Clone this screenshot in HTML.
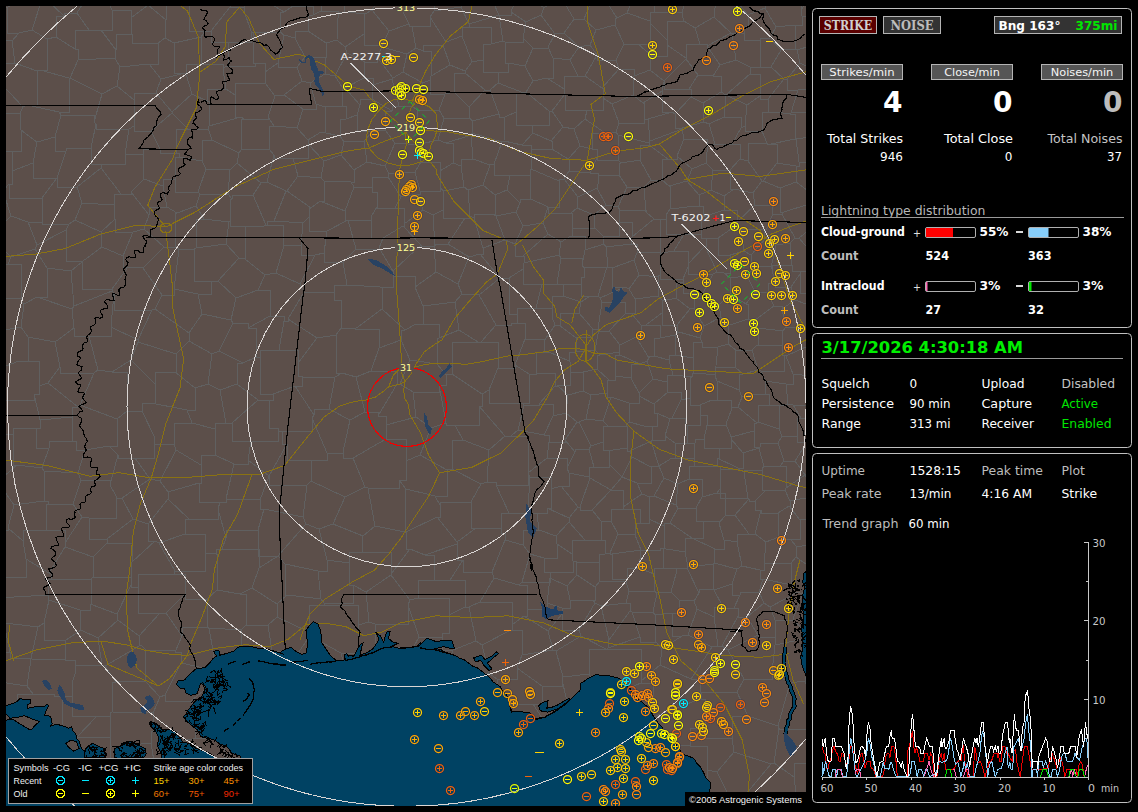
<!DOCTYPE html>
<html lang="en"><head><meta charset="utf-8"><title>Lightning Detector</title>
<style>html,body{margin:0;padding:0;background:#000;overflow:hidden}svg{display:block}text{white-space:pre}.sh{stroke:#2a2344;stroke-width:2.8;stroke-opacity:.32}</style></head><body>
<svg width="1138" height="812" viewBox="0 0 1138 812">
<rect width="1138" height="812" fill="#000"/>
<defs><clipPath id="mc"><rect x="6" y="6" width="800" height="800"/></clipPath></defs>
<g clip-path="url(#mc)" shape-rendering="crispEdges">
<rect x="6" y="6" width="800" height="800" fill="#5c4f4a"/>
<path d="M808 811L797 811L797 802M797 802L765 819M765 819L765 819M797 802L794 777M819 763L794 763L794 777M0 530L-13 554M0 530L8 530L8 528M8 528L14 505M14 505L0 485M-23 452L2 452L2 478M0 485L2 485L2 478M123 808L141 808L141 805M141 805L159 805L159 821M-13 818L9 818L9 813M48 812L15 806M9 813L15 806M123 808L116 803M116 803L93 803L93 810M84 834L93 810M48 812L48 812L48 811M84 834L48 834L48 811M829 597L832 611M832 611L824 618M830 643L824 643L824 618M802 594L829 597M802 594L802 595M802 595L816 617M824 618L816 618L816 617M793 619L803 630M793 619L802 595M816 617L803 630M765 819L732 819L732 834M318 460L327 460L327 453M318 460L287 460L287 444M327 453L312 418M287 444L282 444L282 431M282 431L312 431L312 418M327 453L343 453L343 452M343 452L350 420M329 409L350 420M329 409L314 409L314 415M312 418L314 415M220 502L199 502L199 483M220 502L226 502L226 499M199 483L201 483L201 465M226 499L234 464M234 464L215 455M215 455L201 455L201 465M220 502L218 509M199 483L168 492M189 519L218 519L218 509M189 519L168 499M168 499L168 492M93 810L69 810L69 786M48 811L62 787M62 787L66 786M66 786L69 786M116 803L110 771M69 786L110 771M832 -2L810 -4M807 -16L810 -16L810 -4M318 460L311 460L311 481M365 487L345 497M365 487L353 458M353 458L343 458L343 452M345 497L311 481M511 630L482 645M511 630L522 630L522 655M497 679L489 673M497 679L517 679L517 668M517 668L522 655M482 645L489 673M414 -15L425 -11M414 -15L413 -15M412 26L409 26L409 24M412 26L430 26L430 17M413 -15L400 -15L400 6M430 17L434 11M425 -11L434 -11L434 11M400 6L409 24M434 11L461 7M463 2L461 7M-23 218L-7 218L-7 234M-6 240L-7 240L-7 234M-6 192L3 191M-6 192L-23 192L-23 218M3 191L11 216M11 216L-7 234M-21 124L-7 149M159 821L179 810M179 810L198 810L198 829M198 829L223 829L223 809M223 809L232 809L232 809M232 809L233 809L233 809M-20 609L-7 623M-20 609L-12 582M-13 554L-3 577M-12 582L-3 577M14 597L-1 597L-1 577M14 597L5 597L5 623M-7 623L4 624M-1 577L-3 577L-3 577M5 623L4 624M827 558L818 571M830 643L814 643L814 649M803 630L803 630L803 639M803 639L814 639L814 649M770 637L775 637L775 620M770 637L775 637L775 645M775 620L793 620L793 619M803 639L775 645M765 819L746 794M794 777L774 763M746 794L771 764M774 763L771 763L771 764M636 811L610 811L610 800M610 800L592 800L592 818M659 818L640 818L640 810M640 810L636 810L636 811M592 763L580 763L580 765M592 763L607 775M607 775L610 800M580 765L563 801M563 801L592 818M546 807L546 807L546 807M546 807L563 807L563 801M732 834L716 834L716 813M746 794L727 794L727 792M727 792L716 813M716 813L697 813L697 817M659 818L681 805M697 817L681 817L681 805M676 745L661 774M676 745L652 745L652 720M637 731L652 720M637 731L638 769M661 774L648 775M638 769L648 769L648 775M592 763L607 731M607 775L638 769M607 731L637 731L637 731M640 810L648 775M681 805L681 805L681 790M681 790L661 774M732 738L734 752M732 738L705 738L705 728M734 752L717 772M705 728L690 728L690 746M690 746L707 746L707 770M717 772L707 770M737 692L748 716M737 692L701 692L701 699M701 699L705 699L705 728M748 716L732 716L732 738M771 764L734 752M727 792L717 772M681 790L707 790L707 770M676 745L690 746M251 441L278 441L278 428M251 441L232 441L232 423M232 423L258 400M278 428L269 428L269 400M269 400L258 400M287 444L269 476M269 476L248 460M248 460L251 441M282 431L278 431L278 428M234 464L248 464L248 460M226 423L232 423L232 423M226 423L215 423L215 429M215 455L215 429M189 519L185 519L185 534M168 499L148 524M155 541L148 541L148 524M155 541L159 543M159 543L185 534M324 605L358 605L358 625M324 605L309 605L309 632M341 653L310 636M341 653L358 653L358 625M309 632L310 636M8 528L23 541M44 501L14 505M44 501L48 501L48 504M48 504L46 504L46 530M46 530L23 530L23 541M-1 577L26 577L26 559M23 541L26 559M46 530L65 530L65 543M49 573L26 559M49 573L65 547M65 547L65 543M48 504L73 504M65 543L82 517M73 504L82 517M201 465L176 450M168 492L160 481M160 481L176 450M215 429L192 423M192 423L174 423L174 444M174 444L176 450M525 817L497 808M497 808L491 812M525 817L546 807M302 814L329 817M416 804L439 804L439 803M439 803L455 818M491 812L475 808M475 808L455 818M372 812L410 812L410 799M372 812L359 812L359 799M359 799L387 769M410 799L405 799L405 771M405 771L387 769M416 804L410 804L410 799M349 797L329 817M349 797L351 796M351 796L359 799M351 753L368 746M351 753L351 796M368 746L387 746L387 769M381 691L390 721M381 691L358 692M358 692L348 710M348 710L373 710L373 732M373 732L390 732L390 721M344 664L343 666M344 664L379 661M343 666L358 692M387 683L379 661M387 683L381 683L381 691M368 746L373 732M404 723L390 723L390 721M404 723L418 723L418 759M418 759L405 759L405 771M404 723L426 723L426 707M387 683L412 680M426 707L412 707L412 680M413 648L386 647M413 648L420 664M379 661L386 661L386 647M420 664L412 664L412 680M75 738L77 738L77 737M75 738L62 738L62 733M77 737L97 716M54 696L62 696L62 733M54 696L72 696L72 683M97 716L72 716L72 683M463 2L482 -11M807 -16L787 -21M810 -4L801 10M787 -21L775 -2M775 -2L801 -2L801 10M425 555L434 555L434 580M425 555L457 544M463 560L457 560L457 544M463 560L450 580M450 580L434 580M344 664L341 653M358 625L369 622M386 647L375 647L375 624M369 622L375 624M277 604L252 588M277 604L287 595M287 595L285 595L285 564M252 588L259 568M259 568L278 556M278 556L285 564M324 603L321 599M324 603L324 605M321 599L287 595M309 632L277 617M277 617L277 617L277 604M318 571L321 599M318 571L285 564M278 556L258 556L258 530M278 556L278 556L278 556M258 530L226 530L226 538M222 549L226 538M222 549L259 549L259 568M365 487L368 488M345 497L333 524M375 526L368 488M375 526L363 536M363 536L333 524M278 556L306 524M318 571L327 571L327 560M306 524L319 529M327 560L319 529M307 485L303 517M307 485L269 485L269 476M303 517L264 509M269 476L260 500M264 509L260 509L260 500M306 524L303 517M311 481L307 485M319 529L333 524M269 476L269 476L269 476M258 530L264 509M226 499L260 499L260 500M226 538L218 509M476 528L457 542M476 528L471 528L471 502M457 542L437 517M471 502L440 502L440 505M437 517L440 517L440 505M410 549L425 555M410 549L406 549L406 532M457 542L457 544M437 517L406 532M413 648L419 637M375 624L408 624L408 605M419 637L408 605M453 650L476 641M453 650L442 650L442 633M476 641L469 607M442 633L449 633L449 615M449 615L465 607M469 607L465 607M482 645L476 641M489 673L454 676M448 666L454 676M448 666L453 650M448 666L420 664M419 637L442 637L442 633M480 602L512 602L512 625M480 602L469 607M511 630L512 630L512 625M418 598L449 598L449 615M418 598L410 600M408 605L410 600M450 580L465 580L465 607M434 580L418 580L418 598M480 602L494 578M494 578L492 572M492 572L463 572L463 560M187 410L195 410L195 388M187 410L151 403M175 372L195 388M175 372L155 372L155 384M151 403L155 403L155 384M175 372L176 372L176 354M138 342L176 354M138 342L131 360M155 384L131 360M44 501L44 471M73 504L81 480M81 480L78 473M78 473L44 471M85 450L78 473M85 450L76 450L76 441M76 441L49 441L49 448M44 471L42 468M49 448L42 468M2 478L17 465M17 465L42 468M49 448L36 448L36 428M17 465L13 465L13 434M36 428L13 428L13 434M-23 452L1 427M13 434L1 434L1 427M1 427L-5 412M400 6L377 3M389 31L409 24M389 31L372 10M372 10L377 3M382 45L364 45L364 34M382 45L389 31M372 10L365 14M364 34L365 14M343 262L324 262L324 253M343 262L356 249M356 249L348 220M348 220L327 231M324 253L327 231M298 176L321 178M298 176L293 158M293 158L308 158L308 144M308 144L324 161M324 161L321 178M128 267L112 289M128 267L123 267L123 256M83 261L102 247M83 261L82 262M112 289L82 289L82 262M123 256L102 247M487 482L481 484M487 482L489 450M489 450L463 440M481 484L452 469M463 440L452 440L452 469M489 450L505 436M505 436L479 406M463 440L455 425M455 425L479 425L479 406M-21 124L-14 124L-14 116M-7 149L-1 151M-1 151L21 151L21 130M21 130L20 113M20 113L-14 113L-14 116M-14 116L-16 87M-6 240L11 257M11 257L8 264M-23 281L8 264M37 297L47 297L47 268M37 297L72 309M72 309L74 306M74 306L71 271M47 268L71 271M112 289L112 289L112 291M82 262L71 271M112 291L74 306M94 373L98 370M94 373L60 373L60 367M98 370L89 336M89 336L74 336L74 328M74 328L55 342M60 367L55 342M-17 353L6 366M-4 395L6 366M-5 412L-2 400M-2 400L-4 395M489 390L498 368M489 390L482 394M481 342L498 342L498 368M481 342L478 342L478 342M482 394L452 374M478 342L452 342L452 374M455 302L423 306M455 302L459 330M416 324L423 324L423 306M416 324L439 324L439 338M459 330L439 338M365 412L356 377M365 412L378 412L378 416M356 377L371 371M371 371L397 371L397 384M397 384L378 416M353 458L386 439M350 420L365 412M386 439L386 439L386 425M378 416L386 416L386 425M355 329L382 309M355 329L379 329L379 348M382 309L405 330M379 348L401 340M405 330L401 330L401 340M198 294L202 314M198 294L174 289M155 309L189 333M155 309L162 295M162 295L174 295L174 289M202 314L189 333M198 294L211 294L211 281M218 281L211 281M218 281L236 298M202 314L231 320M236 298L231 320M179 810L185 785M223 809L195 785M195 785L185 785M141 805L156 775M185 785L179 779M179 779L156 774M156 775L156 775L156 774M110 771L110 771L110 770M156 775L110 775L110 770M66 786L75 738M77 737L110 737L110 766M110 770L110 770L110 766M351 753L329 746M348 710L330 710L330 714M329 746L330 746L330 714M343 666L320 682M320 682L323 682L323 709M330 714L323 709M200 728L223 719M200 728L195 728L195 738M223 719L244 719L244 733M195 738L224 738L224 761M244 733L224 761M232 809L233 771M195 785L225 785L225 763M233 771L225 763M195 738L193 739M193 739L179 779M225 763L224 763L224 761M233 809L257 804M274 818L257 818L257 804M302 814L298 810M274 818L298 810M233 771L268 773M257 804L268 773M14 597L48 595M49 573L51 573L51 579M51 579L48 579L48 595M66 640L81 630M66 640L44 640L44 623M81 630L80 610M80 610L49 600M44 623L49 600M65 660L66 640M65 660L75 660L75 674M98 638L81 630M98 638L102 665M102 665L75 665L75 674M38 627L5 623M38 627L44 623M48 595L49 600M51 579L91 579M80 610L90 610L90 604M90 604L91 604L91 579M31 659L31 658M31 659L27 686M31 658L10 658L10 652M27 686L-7 681M10 652L-7 652L-7 665M-7 681L-7 665M65 660L31 659M38 627L31 658M33 694L54 694L54 696M33 694L27 686M75 674L72 683M4 624L10 652M-12 686L-7 681M-12 686L-6 713M-6 713L17 723M33 694L17 694L17 723M62 733L41 740M17 723L17 723L17 724M41 740L17 740L17 724M62 787L36 766M41 740L36 766M15 806L13 806L13 798M13 798L25 770M36 766L25 770M-16 777L-2 777L-2 755M-3 754L-2 754L-2 755M13 798L-16 777M25 770L-2 755M17 724L-3 754M827 558L812 558L812 544M818 571L817 571L817 572M812 544L797 547M797 547L796 557M796 557L817 572M802 594L802 594M817 572L802 594M775 620L770 607M770 607L798 592M802 594L798 592M824 400L824 400L824 403M832 448L824 432M824 403L817 419M817 419L824 419L824 432M824 432L824 432M812 340L810 340L810 345M825 368L820 368L820 368M810 345L820 368M757 345L782 345L782 351M757 345L758 345L758 328M758 328L783 331M782 351L783 331M761 371L784 371L784 355M761 371L758 370M784 355L782 355L782 351M752 350L758 370M752 350L757 345M730 294L719 305M730 294L746 304M733 324L721 324L721 317M733 324L748 319M719 305L721 317M746 304L748 304L748 319M819 520L823 525M823 525L823 525L823 525M790 539L797 547M790 539L800 539L800 520M800 520L819 519M819 519L819 520M812 544L823 525M828 489L832 471M828 489L815 491M815 491L805 475M832 471L825 463M805 475L805 475L805 475M805 475L824 463M825 463L824 463M819 519L811 497M811 497L815 491M832 448L825 448L825 463M780 466L786 466L786 488M780 466L784 461M786 488L805 475M784 461L795 461L795 461M795 461L805 475M795 461L804 447M804 447L824 463M824 432L804 432L804 442M804 447L804 442M790 683L805 681M790 683L778 726M809 683L805 683L805 681M809 683L825 719M825 719L815 719L815 729M815 729L779 729L779 728M779 728L778 726M814 649L805 681M775 645L772 672M772 672L790 683M744 679L737 692M744 679L772 679L772 672M748 716L778 726M819 763L815 763L815 729M774 763L779 728M728 650L722 646M728 650L758 635M722 646L738 616M758 635L747 617M747 617L738 617L738 616M770 637L758 637L758 635M744 679L728 650M770 607L764 603M764 603L747 617M759 592L764 603M759 592L740 592L740 595M740 595L734 608M734 608L738 608L738 616M712 647L718 646M712 647L688 635M718 646L714 617M688 635L697 609M697 609L714 617M734 608L723 608L723 607M723 607L714 607L714 617M722 646L718 646L718 646M640 364L631 364L631 378M640 364L620 355M620 355L615 355L615 376M631 378L615 376M759 394L765 394L765 381M759 394L742 397M765 381L761 371M743 374L758 370M743 374L739 374L739 390M742 397L739 390M487 482L496 482L496 485M481 484L471 502M476 528L501 528L501 533M496 485L509 513M509 513L501 513L501 533M492 572L505 540M501 533L505 533L505 540M496 485L528 485L528 473M528 473L530 477M509 513L528 513L528 509M530 477L528 509M530 477L551 477L551 489M537 513L528 513L528 509M537 513L547 513L547 508M547 508L551 508L551 489M512 625L524 616M522 655L553 650M553 650L548 631M524 616L548 631M505 540L523 545M537 513L539 530M539 530L523 530L523 545M494 578L519 585M524 616L527 616L527 609M519 585L527 585L527 609M497 697L497 679M497 697L467 697L467 711M454 676L448 703M467 711L448 711L448 703M426 707L439 707L439 708M439 708L448 703M641 681L660 665M641 681L641 681L641 683M641 683L653 683L653 717M660 665L691 679M653 717L700 699M691 679L700 679L700 699M662 649L682 636M662 649L660 665M682 636L688 635M712 647L691 679M701 699L700 699M652 720L653 717M310 636L293 660M277 617L268 625M268 625L272 651M272 651L293 651L293 660M320 682L296 671M296 671L293 660M81 480L110 480L110 485M89 518L82 517M89 518L116 518L116 496M110 485L116 496M148 524L133 519M133 519L122 498M160 481L150 479M150 479L122 498M133 519L107 539M107 539L89 539L89 518M122 498L116 498L116 496M446 779L465 779L465 773M446 779L422 759M465 773L463 748M463 748L444 743M422 759L444 743M439 803L446 779M470 776L465 776L465 773M470 776L475 808M418 759L422 759M475 738L463 738L463 748M475 738L467 738L467 711M439 708L444 743M268 625L246 625M252 588L240 594M240 594L246 594L246 625M243 660L241 660L241 630M243 660L249 662M272 651L249 662M246 625L241 630M243 660L216 660L216 668M216 668L209 628M241 630L209 628M159 543L175 571M185 534L205 534L205 553M175 571L205 571L205 553M222 549L216 549L216 554M216 554L205 553M240 594L217 590M216 554L217 554L217 590M209 628L208 628L208 627M208 627L207 599M217 590L207 599M820 43L817 25M820 43L828 48M831 19L817 25M797 49L797 50M797 49L795 49L795 25M797 50L820 43M795 25L802 25L802 16M802 16L817 16L817 25M828 59L828 59L828 48M832 -2L831 19M801 10L802 16M619 -24L636 -24L636 -9M636 -9L647 -9M519 -9L511 12M519 -9L492 -15M492 -15L487 -11M487 -11L499 15M499 15L511 15L511 12M523 -16L521 -11M521 -11L519 -11L519 -9M523 403L529 403L529 374M523 403L489 403L489 390M498 368L515 368L515 365M529 374L515 365M455 302L462 294M462 294L479 295M481 342L496 325M478 342L459 330M496 325L479 295M816 89L798 90M816 89L817 88M817 88L812 69M798 90L787 90L787 79M787 79L800 63M800 63L812 69M818 112L791 112L791 113M818 112L816 89M791 113L798 90M818 112L824 112L824 118M828 59L812 59L812 69M776 112L790 114M776 112L768 112L768 99M768 99L784 79M784 79L787 79M791 113L790 113L790 114M781 50L771 67M781 50L797 49M797 50L800 63M784 79L771 67M353 585L349 585L349 563M353 585L366 592M366 592L391 575M362 552L349 552L349 563M362 552L391 552L391 574M391 574L391 574L391 575M324 603L353 603L353 585M327 560L349 563M369 622L366 592M410 600L391 575M363 536L362 552M410 549L391 574M375 526L405 532M406 532L405 532M556 651L563 677M556 651L581 636M581 636L606 649M606 649L589 649L589 674M563 677L589 674M607 649L641 649L641 681M607 649L606 649M641 683L603 699M589 674L603 699M607 731L597 716M603 699L597 716M553 650L556 650L556 651M581 636L579 630M548 631L562 614M579 630L562 630L562 614M527 609L547 609L547 603M547 603L562 608M562 614L562 608M243 363L219 351M243 363L237 363L237 384M237 384L220 390M219 351L212 354M212 354L208 384M220 390L208 384M226 423L220 390M258 400L237 384M189 333L189 333L189 341M189 341L212 354M233 323L231 320M233 323L219 351M195 388L208 384M176 354L189 341M187 410L192 423M138 340L152 310M138 340L111 327M152 310L114 310L114 293M111 327L114 293M138 342L138 342L138 340M155 309L152 310M98 370L112 372M131 360L112 372M89 336L111 336L111 327M128 267L143 267L143 268M112 291L114 293M162 295L143 268M74 328L72 309M40 420L34 394M40 420L72 417M78 407L72 407L72 417M78 407L48 383M34 394L39 394L39 386M48 383L39 386M36 428L40 428L40 420M-2 400L34 400L34 394M76 441L72 441L72 417M80 405L94 373M80 405L78 405L78 407M60 367L48 383M19 361L39 361L39 386M19 361L6 366M55 342L28 337M19 361L28 361L28 337M413 -15L387 -18M377 3L376 3L376 1M387 -18L376 -18L376 1M461 7L469 24M482 -11L487 -11M499 15L499 15M469 24L499 15M430 17L446 42M469 24L469 24L469 27M469 27L462 27L462 36M446 42L462 36M412 26L416 48M382 45L382 45L382 47M382 47L407 54M416 48L407 54M382 47L377 57M403 72L407 54M403 72L393 78M377 57L393 78M66 230L69 224M66 230L37 245M69 224L42 224L42 201M37 245L28 222M28 222L42 222L42 201M83 261L66 261L66 230M102 247L101 232M101 232L75 220M75 220L69 224M35 249L47 268M35 249L37 245M11 216L28 222M35 249L11 257M241 117L209 126M241 117L235 117L235 95M235 95L226 89M226 89L207 89L207 101M207 101L209 101L209 126M206 64L223 64L223 69M206 64L186 64L186 74M223 69L226 89M186 74L192 94M192 94L207 101M172 113L188 129M172 113L172 113L172 112M188 129L208 129L208 128M208 128L209 126M172 112L192 94M244 119L241 119L241 150M244 119L268 119L268 117M274 126L268 117M274 126L269 126L269 149M269 149L241 149L241 150M239 153L241 150M239 153L212 140M208 128L212 140M241 117L244 119M275 96L265 83M275 96L268 117M265 83L235 83L235 95M297 128L303 109M297 128L274 126M303 109L284 95M284 95L275 96M293 158L274 158L274 155M308 144L308 140M274 155L269 149M308 140L297 128M435 496L406 489M435 496L447 496L447 470M447 470L420 455M399 480L406 489M399 480L406 480L406 461M406 461L420 455M440 505L435 496M405 532L406 489M452 469L447 470M431 428L420 455M431 428L446 423M455 425L446 425L446 423M368 488L399 488L399 480M386 439L406 439L406 461M431 428L416 417M416 417L386 425M505 436L511 436M523 403L524 405M524 405L518 430M479 406L482 406L482 394M511 436L518 430M528 473L528 473L528 473M511 436L528 436L528 473M-16 87L-6 77M-19 58L-6 77M23 107L-5 77M23 107L27 105M27 105L37 105L37 71M37 71L15 63M15 63L-5 63L-5 77M20 113L23 107M-5 77L-6 77M-12 298L21 298L21 301M-12 298L-20 298L-20 318M-7 332L-20 318M-7 332L21 327M21 327L24 304M24 304L21 301M-23 281L-12 281L-12 298M8 264L21 264L21 301M-17 353L-7 353L-7 332M28 337L21 327M37 297L24 304M413 392L400 384M413 392L439 392L439 385M400 384L410 360M410 360L437 364M437 364L446 375M439 385L446 385L446 375M397 384L400 384M416 417L413 392M446 423L439 385M371 371L379 348M401 340L410 360M416 324L405 330M439 338L437 338L437 364M452 374L446 374L446 375M314 415L295 386M269 400L273 400L273 394M273 394L295 386M270 316L248 328M270 316L284 316L284 321M284 321L279 350M248 328L256 328L256 357M279 350L260 350L260 358M256 357L260 358M236 298L258 290M258 290L270 290L270 316M233 323L248 323L248 328M243 363L256 357M273 394L260 394L260 358M329 409L335 377M356 377L342 373M335 377L342 373M295 386L302 386L302 376M335 377L302 377L302 376M279 350L298 350L298 363M302 376L298 376L298 363M304 292L288 319M304 292L334 292L334 300M288 319L317 338M334 300L341 300L341 328M317 338L336 335M341 328L336 335M343 262L347 285M347 285L334 285L334 300M324 253L315 255M300 284L315 255M300 284L304 292M284 321L288 321L288 319M298 363L317 338M347 285L380 287M380 287L382 287L382 309M355 329L341 328M342 373L336 373L336 335M286 715L286 683M286 715L264 722M264 722L251 695M286 683L257 681M251 695L257 681M290 717L323 709M290 717L286 717L286 715M296 671L286 683M225 696L223 719M225 696L251 695M257 731L244 731L244 733M257 731L264 731L264 722M249 662L257 681M158 731L151 731L151 743M158 731L153 731L153 713M151 743L122 746M153 713L112 712M122 746L110 746L110 715M112 712L110 712L110 715M193 739L158 739L158 731M156 774L151 743M110 766L122 746M97 716L110 716L110 715M102 665L105 666M116 682L105 666M116 682L112 682L112 712M298 794L269 772M298 794L316 775M316 775L315 756M272 763L269 763L269 772M272 763L303 751M315 756L303 756L303 751M298 810L298 794M268 773L269 772M349 797L316 775M329 746L315 756M257 731L272 731L272 763M290 717L303 717L303 751M175 571L174 574M207 599L185 599L185 594M174 574L185 574L185 594M65 547L93 557M91 579L93 577M93 577L93 557M107 539L107 539L107 543M93 557L107 543M155 541L132 562M107 543L132 543L132 562M791 563L792 585M791 563L764 564M792 585L763 579M763 579L760 579L760 570M760 570L764 570L764 564M796 557L791 563M798 592L792 592L792 585M790 539L779 539L779 537M779 537L766 542M766 542L764 564M759 592L763 579M769 405L786 405M769 405L758 405L758 422M758 422L779 429M786 405L779 405L779 429M817 419L801 418M804 442L797 442L797 436M801 418L797 418L797 436M784 461L778 443M778 443L782 436M797 436L782 436M793 405L788 404M793 405L815 405L815 395M788 404L786 384M815 395L811 376M811 376L793 374M786 384L793 384L793 374M786 405L788 404M801 418L793 405M782 436L779 429M824 400L815 395M759 394L769 394L769 405M765 381L786 384M820 368L811 368L811 376M810 345L786 356M786 356L793 374M784 355L786 356M733 324L728 324L728 344M752 350L736 350M758 328L754 321M748 319L754 321M728 344L736 350M743 374L735 367M736 350L735 367M812 340L810 340L810 330M836 314L810 314L810 330M820 221L820 221M820 221L829 221L829 254M829 283L824 283L824 258M829 254L824 258M730 294L730 294L730 278M746 304L755 292M730 278L747 276M755 292L747 276M714 590L732 584M714 590L713 589M713 589L713 564M732 584L737 569M737 569L714 563M714 563L713 564M740 595L732 595L732 584M723 607L714 590M742 566L760 570M742 566L737 569M682 636L672 636L672 613M672 613L679 613L679 600M697 609L694 601M694 601L679 600M713 589L699 589L699 593M694 601L699 593M632 457L622 477M632 457L630 451M630 451L627 451L627 448M627 448L613 450M613 450L609 450L609 464M609 464L622 477M637 483L622 477M637 483L642 494M611 490L623 490L623 507M611 490L611 490L611 490M642 494L623 507M611 490L622 477M637 483L651 483L651 467M651 467L632 457M622 477L622 477M580 507L578 507L578 507M580 507L590 478M578 507L561 486M590 478L589 477M589 477L569 473M561 486L569 486L569 473M611 490L592 510M592 510L580 510L580 507M611 490L590 478M547 508L569 518M551 489L561 486M569 518L578 507M594 467L589 467L589 477M594 467L609 467L609 464M523 545L530 554M519 585L522 582M530 554L522 582M547 603L550 578M522 582L550 582L550 578M595 603L593 600M595 603L579 630M562 608L570 608L570 600M593 600L570 600M550 578L550 578M550 578L567 586M567 586L570 600M569 518L569 522M592 510L601 521M591 540L601 540L601 521M591 540L585 540M569 522L585 540M539 530L556 536M569 522L556 536M766 490L755 501M766 490L785 490L785 490M778 513L761 513L761 510M778 513L789 506M761 510L755 510L755 501M785 490L790 501M789 506L790 506L790 501M779 537L778 513M755 534L766 542M755 534L761 510M800 520L789 506M811 497L790 501M786 488L785 488L785 490M780 466L764 467M766 490L762 490L762 470M764 467L762 467L762 470M528 775L545 775L545 745M528 775L506 776M545 745L506 745L506 733M506 776L498 769M498 769L495 742M495 742L506 733M580 765L547 744M546 807L528 775M547 744L545 745M497 808L506 776M470 776L498 776L498 769M475 738L495 738L495 742M497 697L505 705M505 705L506 733M135 458L118 458L118 455M135 458L154 458L154 436M154 436L142 411M109 446L118 455M109 446L117 446L117 419M117 419L127 411M142 411L127 411M110 485L118 455M150 479L135 458M174 444L154 444L154 436M151 403L142 403L142 411M85 450L109 446M80 405L117 419M112 372L127 372L127 411M116 682L145 681M153 713L160 697M160 697L145 681M707 46L720 65M707 46L731 33M731 33L732 33M732 33L736 60M720 65L736 60M695 28L700 44M695 28L714 17M700 44L707 44L707 46M714 17L731 33M781 50L770 38M771 67L751 67M751 67L760 67L760 40M770 38L760 38L760 40M795 25L776 27M770 38L776 27M750 67L751 67L751 67M750 67L736 60M732 33L744 33L744 26M760 40L744 40L744 26M657 12L654 12L654 -4M657 12L682 12L682 14M654 -4L676 -4L676 -13M682 14L684 5M684 5L678 5L678 -12M678 -12L676 -13M647 -9L654 -4M533 133L532 133L532 125M533 133L522 145M505 117L516 112M505 117L504 141M532 125L516 125L516 112M504 141L522 145M703 103L704 122M703 103L691 97M682 128L704 122M682 128L675 128L675 114M675 114L691 97M713 76L698 75M713 76L721 76L721 92M698 75L689 89M703 103L721 92M689 89L691 89L691 97M684 21L695 28M684 21L667 21L667 40M700 44L686 44L686 58M667 40L667 40L667 45M667 45L686 58M713 76L720 65M698 75L686 59M686 59L686 58M652 56L667 56L667 45M652 56L650 56L650 70M686 59L664 81M650 70L664 81M675 114L672 112M672 112L662 112L662 91M689 89L664 89L664 82M662 91L664 82M664 82L664 82L664 81M619 123L616 132M619 123L644 123L644 115M618 135L649 143M618 135L616 132M648 119L644 119L644 115M648 119L650 141M650 141L649 143M672 112L648 119M643 103L662 91M643 103L644 103L644 115M682 129L682 128M682 129L650 141M585 119L605 133M585 119L574 129M605 133L592 133L592 149M574 129L580 146M580 146L592 149M605 133L616 132M618 160L597 160L597 158M618 160L618 135M592 149L597 149L597 158M524 405L539 405L539 404M529 374L536 374L536 373M539 404L555 386M536 373L555 373L555 386M515 365L525 339M496 325L511 325L511 323M511 323L525 323L525 339M549 352L536 352L536 373M549 352L544 352L544 341M525 339L544 339L544 341M548 234L543 223M548 234L561 242M561 242L571 236M571 213L548 213L548 207M571 213L572 213L572 235M571 236L572 236L572 235M543 223L548 207M523 256L548 234M523 256L524 256L524 263M524 263L559 255M559 255L561 242M595 228L572 228L572 235M595 228L594 215M594 215L577 208M577 208L571 213M618 160L621 163M649 145L640 145L640 160M649 145L649 143M621 163L640 160M816 136L796 139M816 136L828 152M828 152L819 163M819 163L799 162M799 162L796 139M824 118L816 118L816 136M790 114L795 114L795 139M795 139L796 139L796 139M819 217L806 205M819 217L835 200M806 205L807 190M807 190L823 190L823 181M835 200L828 183M828 183L823 181M820 221L819 217M784 212L806 205M784 212L780 212L780 188M780 188L796 182M796 182L807 190M796 166L796 166L796 182M796 166L799 166L799 162M819 163L823 163L823 181M771 144L767 144L767 143M771 144L777 144L777 163M767 143L748 143L748 161M777 163L763 181M748 161L762 181M762 181L763 181L763 181M776 112L762 112L762 131M795 139L771 144M762 131L767 143M796 166L777 163M780 188L763 181M734 189L753 193M734 189L730 189L730 170M753 193L762 181M748 161L740 159M730 170L740 159M750 67L750 74M721 92L726 95M726 95L750 74M768 99L760 99L760 96M750 74L760 74L760 96M649 145L668 159M668 159L677 159L677 156M682 129L684 139M677 156L684 139M704 122L709 124M709 124L715 144M715 144L707 144L707 152M684 139L707 139L707 152M551 732L533 704M551 732L570 714M570 714L562 680M533 704L542 704L542 686M542 686L562 686L562 680M547 744L551 744L551 732M505 705L533 704M597 716L570 714M563 677L562 677L562 680M517 668L542 686M662 649L656 642M672 613L655 615M656 642L655 615M365 14L347 12M347 12L344 12L344 -13M376 1L361 1L361 -16M344 -13L361 -16M469 27L491 27L491 44M499 15L503 41M491 44L503 41M462 36L472 62M472 62L483 60M491 44L483 44L483 60M446 42L443 45M416 48L423 51M443 45L423 45L423 51M392 79L373 85M392 79L399 106M399 106L392 106L392 111M392 111L372 99M372 99L373 85M365 62L377 62L377 57M365 62L364 78M393 78L392 79M364 78L373 78L373 85M298 176L287 191M321 178L324 181M320 201L324 201L324 181M320 201L311 208M287 191L311 208M348 220L348 220M327 231L309 231L309 217M348 220L345 220L345 211M345 211L320 201M311 208L309 208L309 217M315 255L301 255L301 245M301 245L303 223M309 217L303 223M274 155L267 182M239 153L237 163M237 163L261 183M267 182L261 183M287 191L286 191M267 182L286 191M303 223L274 221M286 191L274 221M518 430L544 435M539 404L553 404L553 416M544 435L553 416M42 198L57 178M42 198L9 198L9 184M57 178L33 178L33 163M33 163L12 171M9 184L12 184L12 171M77 187L57 187L57 178M77 187L82 203M82 203L75 220M42 201L42 198M57 178L57 178L57 178M3 191L9 184M-1 151L12 151L12 171M21 130L37 142M37 142L33 163M-19 58L-9 38M15 63L12 41M12 41L-9 38M-12 -5L-3 6M-3 6L-17 28M-17 28L-9 38M68 -16L85 -0M68 -16L51 -11M51 -11L45 -2M85 -0L77 13M77 13L64 13L64 16M64 16L45 -2M27 105L59 112M37 71L40 70M59 112L69 112L69 78M40 70L69 78M77 13L89 30M89 30L75 30L75 49M64 16L56 16L56 37M56 37L75 49M462 294L458 284M479 295L500 278M500 278L480 254M458 284L469 257M469 257L480 254M393 276L415 276L415 287M393 276L393 271M393 271L421 245M415 287L436 272M436 272L434 246M434 246L421 246L421 245M423 306L415 287M380 287L393 287L393 276M356 249L379 249L379 248M379 248L393 271M458 284L436 272M469 257L448 244M448 244L435 244L435 246M435 246L434 246M208 627L182 627L182 636M185 594L166 613M166 613L182 636M105 666L141 645M145 681L146 650M141 645L146 650M705 246L688 264M705 246L717 272M717 272L713 274M713 274L688 274L688 267M688 264L688 264L688 267M719 305L704 298M724 273L730 278M724 273L717 272M704 298L703 293M703 293L713 274M829 283L821 293M836 314L820 314L820 296M821 293L820 296M824 258L816 258L816 258M821 293L800 293L800 274M800 274L800 271M800 271L816 271L816 258M820 221L799 238M816 258L799 238M724 273L730 273L730 255M730 255L718 255L718 238M705 246L706 246L706 238M718 238L706 238M674 251L684 234M674 251L688 251L688 264M684 234L701 234L701 232M706 238L701 238L701 232M747 276L756 266M730 255L744 251M756 266L751 266L751 255M744 251L751 255M692 538L685 538L685 552M692 538L692 538M714 563L715 549M713 564L688 567M715 549L692 538M685 552L688 567M699 593L687 568M688 567L687 568M619 352L600 355M619 352L620 345M620 345L609 331M609 331L599 331L599 329M599 329L595 350M600 355L595 350M609 380L615 380L615 376M609 380L597 369M620 355L619 352M600 355L597 355L597 369M599 329L598 329M575 337L592 337L592 328M575 337L576 337L576 352M598 329L592 329L592 328M595 350L576 352M651 467L659 466M630 451L651 441M659 466L651 441M629 422L644 426M629 422L626 426M626 426L627 426L627 448M644 426L652 426L652 440M651 441L652 440M551 572L544 572L544 558M551 572L573 572L573 561M544 558L557 558L557 544M557 544L572 554M573 561L572 554M530 554L544 558M550 578L551 572M556 536L557 544M585 540L572 540L572 554M641 550L639 568M641 550L641 550L641 550M639 568L627 568L627 579M627 579L612 579L612 554M641 550L612 554M623 509L640 509L640 523M623 509L611 509L611 521M611 521L618 534M618 534L635 535M640 523L635 523L635 535M623 507L623 509M601 521L611 521L611 521M591 540L605 540L605 554M605 554L610 553M610 553L618 534M641 550L635 535M612 554L610 554L610 553M599 562L600 581M599 562L576 562L576 565M576 565L577 575M577 575L595 587M595 587L600 581M605 554L599 554L599 562M627 579L626 582M626 582L600 581M573 561L576 561L576 565M567 586L577 575M593 600L595 600L595 587M724 540L719 523M724 540L737 542M749 534L737 534L737 542M749 534L735 515M719 523L725 516M735 515L725 516M715 549L724 549L724 540M692 538L703 538L703 521M703 521L719 521L719 523M742 566L737 542M755 534L749 534L749 534M755 501L749 501L749 499M749 499L735 515M703 521L696 521L696 508M696 508L702 497M702 497L717 493M717 493L725 493L725 516M748 498L720 498L720 489M748 498L744 472M738 469L744 472M738 469L720 469L720 488M720 488L720 489M749 499L748 499L748 498M717 493L720 489M762 470L744 470L744 472M694 466L708 466M694 466L694 466L694 466M694 466L689 466L689 479M708 466L720 466L720 488M689 479L702 479L702 497M708 466L717 466L717 458M738 469L738 468M717 458L738 468M191 701L214 682M191 701L165 701L165 695M165 695L181 663M181 663L213 670M213 670L214 682M200 728L191 701M225 696L214 682M160 697L165 695M146 650L175 650L175 652M175 652L181 652L181 663M216 668L213 670M182 636L175 652M711 190L699 195M711 190L713 170M699 195L687 181M687 181L692 169M692 169L706 163M713 170L706 163M724 196L724 196L724 210M724 196L711 190M696 206L699 206L699 195M696 206L703 206L703 217M724 210L703 217M734 189L724 196M730 170L713 170M677 156L692 169M707 152L706 152L706 163M732 144L740 144L740 159M732 144L715 144M696 -22L678 -12M547 -24L523 -16M776 27L765 8M744 26L748 26L748 15M748 15L765 8M775 -2L771 -2L771 -1M755 -21L771 -1M771 -1L765 -1L765 8M619 -24L606 1M606 1L592 -0M580 -15L592 -0M524 93L516 93L516 112M524 93L526 92M532 125L549 125L549 111M526 92L549 111M533 133L551 141M551 141L563 127M563 127L552 111M552 111L549 111M510 175L530 175L530 170M510 175L507 190M530 170L531 199M507 190L520 203M531 199L520 199L520 203M585 119L587 110M574 129L563 127M552 111L565 94M587 110L565 110L565 94M633 95L634 76M633 95L612 104M602 88L603 88L603 98M602 88L619 69M619 69L634 69L634 76M612 104L603 98M643 103L633 95M650 70L634 76M619 123L612 104M616 60L597 60L597 55M616 60L619 69M597 55L585 76M585 76L602 88M587 110L603 110L603 98M505 117L499 117L499 114M524 93L498 83M498 83L490 90M499 114L490 90M568 159L569 159L569 171M568 159L552 149M552 149L531 149L531 168M569 171L564 179M531 168L531 169M531 169L559 181M564 179L559 179L559 181M590 173L597 158M590 173L569 171M580 146L568 159M551 141L552 141L552 149M522 145L531 145L531 168M548 207L559 207L559 181M548 207L531 199M530 170L531 169M548 207L548 207L548 207M578 197L577 197L577 208M578 197L564 179M516 212L496 216M516 212L523 226M496 216L505 240M523 226L515 244M515 244L505 240M543 223L523 226M520 203L516 212M523 256L515 256L515 244M549 352L569 361M555 386L557 386L557 385M569 361L570 362M557 385L570 385L570 362M597 369L583 372M576 352L569 352L569 361M583 372L570 372L570 362M536 308L517 308L517 314M536 308L542 284M517 314L509 314L509 278M542 284L523 284L523 269M523 269L509 278M500 278L509 278M511 323L517 323L517 314M524 263L523 269M561 258L559 255M561 258L557 284M557 284L557 284L557 284M557 284L542 284M480 254L483 254L483 248M483 248L505 240M590 173L598 173L598 184M621 163L619 163L619 175M619 175L598 175L598 184M578 197L597 188M598 184L597 188M594 215L606 205M597 188L606 205M668 159L662 159L662 180M640 160L651 180M651 180L662 180M687 181L669 186M662 180L669 186M696 206L670 209M669 186L670 186L670 209M684 234L666 234L666 215M703 217L701 217L701 232M670 209L666 215M724 117L726 95M724 117L741 117L741 128M726 95L747 105M747 105L745 126M745 126L741 128M709 124L724 117M726 95L726 95M732 144L741 128M760 96L747 105M762 131L745 131L745 126M595 603L601 606M629 591L626 582M629 591L626 603M626 603L601 606M341 -15L321 -15L321 -13M321 -13L317 -16M344 -13L341 -15M286 -19L295 -8M295 -8L317 -8L317 -16M286 -19L260 -19L260 -13M498 83L499 72M499 72L508 72L508 63M526 92L533 81M533 81L525 66M525 66L508 63M499 72L483 72L483 60M503 41L505 42M508 63L505 63L505 42M472 62L465 71M443 45L450 65M465 71L450 65M423 51L431 51L431 76M450 65L431 76M303 109L316 109L316 104M284 95L302 81M302 81L310 83M310 83L316 104M308 140L321 132M321 132L325 132L325 107M316 104L325 107M364 78L345 88M372 99L360 99L360 105M360 105L345 88M345 211L354 187M324 181L351 182M351 182L354 187M392 111L385 111L385 130M385 130L373 131M360 105L357 115M373 131L357 131L357 115M328 106L342 106L342 87M328 106L346 106L346 119M345 88L342 87M357 115L346 119M321 132L340 136M325 107L328 106M346 119L340 119L340 136M504 141L502 142M510 175L494 175L494 164M494 164L502 142M472 121L499 114M472 121L472 133M502 142L472 133M494 164L490 165M472 133L471 133L471 135M471 135L473 159M490 165L473 159M420 145L421 162M420 145L395 143M395 143L385 166M389 174L385 166M389 174L415 172M415 172L421 162M492 214L495 214L495 195M492 214L474 214L474 218M474 218L470 216M470 216L468 190M495 195L483 185M483 185L468 190M507 190L495 195M496 216L492 214M483 248L474 218M448 244L465 218M465 218L470 218L470 216M490 165L483 185M301 245L283 245L283 249M274 221L267 221L267 225M267 225L283 225L283 249M300 284L276 273M283 249L276 273M258 290L265 275M265 275L276 273M261 183L253 195M267 225L266 225M253 195L266 225M347 12L338 12L338 18M321 -13L321 11M321 11L338 11L338 18M316 57L326 57L326 43M316 57L325 57L325 74M335 76L325 74M335 76L347 53M347 53L345 47M345 47L337 40M337 40L326 43M302 81L297 67M297 67L305 57M305 57L316 57M310 83L325 74M342 87L335 76M365 62L347 53M364 34L345 47M338 18L337 40M297 67L278 67L278 63M265 83L265 72M278 63L265 72M226 66L223 69M226 66L255 66L255 63M255 63L265 63L265 72M295 -8L293 6M321 11L313 15M293 6L313 6L313 15M326 43L308 31M313 15L308 15L308 31M305 57L295 38M308 31L295 31L295 38M278 63L284 35M295 38L284 35M206 64L201 64L201 37M226 66L228 66L228 42M228 42L211 42L211 31M211 31L205 31M201 37L205 31M186 74L185 73M185 73L174 73L174 43M201 37L174 43M172 112L156 93M185 73L161 79M156 93L161 79M77 187L101 168M57 178L66 151M102 164L101 164L101 168M102 164L91 164L91 148M91 148L66 148L66 151M37 142L55 137M66 151L55 151L55 137M59 112L61 115M55 137L61 115M547 458L549 442M547 458L567 458L567 468M549 442L565 442L565 440M565 440L575 452M567 468L575 452M528 473L547 458M544 435L549 435L549 442M569 473L567 468M594 467L589 449M589 449L575 449L575 452M19 33L7 33L7 8M19 33L32 30M32 30L42 -1M7 8L24 -5M24 -5L42 -1M12 41L19 33M-3 6L7 8M40 70L47 70L47 39M47 39L32 30M45 -2L42 -1M47 39L56 37M383 238L403 226M383 238L371 238L371 217M395 208L377 208L377 207M395 208L404 208L404 224M403 226L404 226L404 224M371 217L377 207M379 248L383 238M421 245L403 226M348 220L371 220L371 217M401 197L395 208M401 197L388 177M388 177L372 177L372 192M372 192L377 192L377 207M354 187L372 187L372 192M435 246L433 215M404 224L423 210M423 210L433 215M401 197L418 194M423 210L418 194M465 218L443 218L443 210M443 210L433 215M389 174L388 177M415 172L420 191M418 194L420 194L420 191M172 113L151 131M188 129L176 129L176 153M151 131L160 149M176 153L160 153L160 149M139 636L160 613M139 636L118 620M118 620L117 614M117 614L131 585M160 613L138 613L138 587M138 587L131 587L131 585M131 585L131 585L131 585M166 613L160 613M141 645L139 645L139 636M98 638L118 620M90 604L117 614M93 577L131 577L131 585M174 574L138 574L138 587M132 562L131 585M721 317L704 326M704 298L694 298L694 308M694 308L704 326M703 293L683 293L683 282M688 267L683 279M683 279L683 282M754 321L774 306M755 292L768 293M768 293L774 306M800 274L791 287M800 271L792 271L792 265M791 287L775 287L775 283M775 283L772 269M792 265L772 265L772 269M756 266L771 266L771 268M775 283L768 283L768 293M772 269L771 268M753 193L755 205M724 210L737 210L737 222M755 205L737 222M718 238L737 225M744 251L741 229M741 229L737 225M737 222L737 222L737 225M579 313L581 302M579 313L560 313L560 326M581 302L563 296M563 296L552 296L552 317M552 317L555 325M560 326L555 325M575 337L560 326M592 328L579 313M557 284L581 284L581 277M557 284L563 284L563 296M590 296L581 296L581 277M590 296L581 302M536 308L552 308L552 317M544 341L555 325M659 466L659 466M659 466L672 458M672 458L675 458L675 443M652 440L665 440L665 436M675 443L665 436M659 466L664 478M672 458L694 458L694 466M689 479L678 484M664 478L678 484M739 390L717 381M735 367L715 367L715 376M717 381L715 376M728 344L718 347M718 347L715 375M715 376L715 376L715 375M644 426L657 426L657 413M665 436L670 419M657 413L670 419M663 568L676 568L676 574M663 568L654 568L654 574M654 574L654 591M676 574L671 592M671 592L657 593M657 593L654 591M685 552L660 548M687 568L676 568L676 574M660 548L660 548M660 548L663 548L663 568M641 550L660 550L660 548M639 568L654 574M629 591L654 591M679 600L671 592M655 615L653 612M653 612L657 593M717 458L719 458L719 448M738 468L743 468L743 453M719 448L731 448L731 439M743 453L731 439M764 467L759 448M743 453L759 448M778 443L760 443L760 447M760 447L759 448M738 3L745 -16M738 3L716 3L716 -0M716 -0L713 -0L713 -4M712 -8L713 -8L713 -4M748 15L738 3M755 -21L745 -16M714 17L716 -0M696 -22L712 -8M684 21L682 14M684 5L713 5L713 -4M547 -24L556 -24L556 -1M521 -11L544 8M556 -1L544 8M580 -15L562 -1M556 -1L562 -1M638 44L650 44L650 23M638 44L624 44L624 44M624 44L615 25M650 21L627 13M650 21L650 21L650 23M627 13L617 18M617 18L615 18L615 25M667 40L650 23M652 56L638 44M616 60L624 44M636 -9L627 13M657 12L650 12L650 21M606 1L617 18M597 55L590 45M615 25L596 30M590 45L596 30M592 -0L584 19M596 30L584 19M562 -1L574 19M584 19L574 19L574 19M533 81L547 78M565 94L564 94L564 89M547 78L564 89M585 76L578 76M578 76L564 76L564 89M553 416L566 413M565 440L577 422M566 413L577 422M557 385L568 395M566 413L568 395M583 372L583 391M568 395L583 391M595 228L603 236M571 236L585 236L585 250M603 236L604 244M604 244L585 250M561 258L582 258L582 265M585 250L582 265M590 296L598 296L598 296M581 277L584 277L584 268M598 296L607 267M607 267L584 268M582 265L584 268M619 175L627 187M606 205L618 207M627 187L618 207M651 180L644 187M627 187L644 187L644 187M632 612L640 637M632 612L630 611M630 611L609 640M640 637L608 648M608 648L609 640M656 642L640 642L640 637M653 612L632 612M626 603L630 603L630 611M601 606L609 640M607 649L608 648M490 90L485 90M465 71L465 73M485 90L465 73M364 141L344 141L344 142M364 141L367 162M354 170L367 162M354 170L341 155M341 155L344 142M373 131L364 141M340 136L344 142M385 130L395 143M385 166L367 162M351 182L354 182L354 170M324 161L341 155M464 187L461 166M464 187L444 191M444 191L440 188M440 188L440 188L440 171M440 171L453 163M453 163L461 166M473 159L461 159L461 166M468 190L464 187M443 210L444 191M420 191L440 191L440 188M421 162L440 162L440 171M438 140L446 143M438 140L421 144M421 144L420 144L420 145M446 143L453 143L453 163M446 143L471 135M265 275L245 259M266 225L264 226M264 226L245 226L245 259M218 281L239 258M239 258L245 259M284 12L280 12L280 32M284 12L258 -4M280 32L253 33M258 -4L244 -4L244 11M244 11L251 31M251 31L253 33M293 6L284 12M284 35L280 32M260 -13L258 -13L258 -4M255 63L253 63L253 33M219 -6L230 -6L230 7M230 7L244 7L244 11M228 42L251 42L251 31M211 31L230 7M85 -0L105 -0L105 -6M101 30L112 30L112 10M101 30L89 30M105 -6L112 10M105 -6L106 -7M106 -7L137 -7L137 -17M219 -6L206 -8M205 31L189 31L189 5M189 5L206 5L206 -8M75 49L78 49L78 60M69 78L70 78M78 60L70 78M198 192L206 169M198 192L175 192L175 179M179 157L175 157L175 179M179 157L202 161M202 161L206 169M212 140L202 140L202 161M176 153L179 153L179 157M237 163L230 170M230 170L206 169M253 195L232 195L232 199M264 226L230 226L230 221M232 199L230 199L230 221M230 170L228 194M232 199L228 194M198 192L200 194M228 194L200 194M226 244L229 222M226 244L239 258M229 222L230 221M177 213L175 213L175 247M177 213L196 206M204 219L196 206M204 219L196 219L196 248M194 249L196 248M194 249L179 249M179 249L175 247M229 222L204 219M200 194L196 206M226 244L196 248M211 281L194 281L194 249M174 289L179 249M143 268L164 247M164 247L175 247M82 203L114 205M101 168L121 194M121 194L114 194L114 205M123 256L133 232M101 232L115 219M133 232L115 232L115 219M164 247L144 229M133 232L144 229M114 205L115 219M702 342L693 342L693 358M702 342L700 338M700 338L679 332M693 358L675 355M675 355L675 355L675 335M675 335L679 332M718 347L702 347L702 342M696 373L715 375M696 373L693 373L693 358M704 326L700 338M806 304L795 300M806 304L806 304L806 327M795 300L782 309M782 309L786 327M786 327L806 327L806 327M820 296L806 304M791 287L795 300M810 330L806 327M774 306L782 306L782 309M783 331L786 327M795 238L790 243M795 238L782 214M790 243L776 245M776 245L766 238M782 214L772 214L772 216M772 216L764 235M766 238L764 238L764 235M799 238L795 238M792 265L790 243M784 212L782 212L782 214M771 268L776 245M751 255L766 238M755 205L772 205L772 216M741 229L764 229L764 235M690 309L677 325M690 309L676 298M677 325L662 325L662 313M676 298L663 301M663 301L662 301L662 313M694 308L690 309M679 332L677 332L677 325M683 282L676 282L676 298M646 325L660 325L660 338M646 325L662 313M660 338L675 335M650 497L649 497L649 519M650 497L654 496M654 496L676 505M649 519L664 526M670 523L664 523L664 526M670 523L678 508M678 508L676 505M642 494L650 497M640 523L649 523L649 519M664 478L654 496M678 484L676 505M660 548L664 548L664 526M692 538L670 523M696 508L678 508L678 508M629 403L639 403L639 396M629 403L629 422M657 413L654 413L654 404M654 404L639 396M685 425L687 425L687 438M685 425L700 425L700 415M700 415L707 415L707 425M707 425L704 439M704 439L695 439L695 443M695 443L687 443L687 438M675 443L687 443L687 438M670 419L672 418M672 418L685 418L685 425M694 466L695 443M719 448L704 448L704 439M726 424L731 437M726 424L731 411M731 437L754 431M738 407L731 407L731 411M738 407L757 423M757 423L754 423L754 431M731 439L731 437M707 425L726 425L726 424M712 400L700 405M712 400L731 400L731 411M700 405L700 415M760 447L754 447L754 431M742 397L738 407M712 400L717 400L717 381M758 422L757 422L757 423M511 12L526 22M544 8L541 15M526 22L541 15M505 42L523 42L523 38M526 22L523 38M525 66L533 48M523 38L533 48M589 449L591 446M577 422L579 422M579 422L591 446M626 426L608 426M613 450L603 450L603 442M608 426L603 426L603 442M603 442L591 446M598 329L602 302M598 296L600 298M602 302L600 298M609 331L625 314M602 302L625 302L625 314M620 345L636 337M636 337L641 337L641 325M641 325L631 313M625 314L631 313M641 325L646 325M663 301L658 296M631 313L635 313L635 299M658 296L635 299M674 251L662 253M654 219L666 219L666 215M654 219L660 219L660 252M662 253L660 253L660 252M683 279L660 279L660 275M662 253L660 253L660 275M658 296L658 277M660 275L658 275L658 277M619 222L632 222L632 237M619 222L620 210M620 210L646 210L646 212M632 237L654 219M654 219L646 212M603 236L619 236L619 222M618 207L620 210M644 187L646 212M654 219L654 219M485 90L469 107M465 73L454 73L454 92M454 92L469 107M438 140L444 118M472 121L469 117M444 118L469 118L469 117M469 117L469 117L469 107M149 64L120 67M149 64L158 64L158 43M158 43L132 43L132 34M132 34L116 34L116 50M116 50L115 58M115 58L120 67M174 43L165 38M161 79L149 64M165 38L158 43M101 30L116 50M112 10L131 10L131 18M131 18L132 34M78 60L115 58M147 -8L148 5M147 -8L170 -8L170 -18M148 5L166 20M170 -18L189 -18L189 5M189 5L166 5L166 20M137 -17L147 -8M131 18L148 5M165 38L166 20M189 5L189 5L189 5M102 94L117 86M102 94L94 122M117 86L134 100M134 100L134 126M129 129L134 126M129 129L96 129L96 124M96 124L94 122M70 78L102 94M120 67L117 86M61 115L94 115L94 122M156 93L134 93L134 100M151 131L134 131L134 126M125 154L143 154L143 168M125 154L129 129M160 149L143 149L143 168M102 164L125 164L125 154M91 148L96 124M167 207L149 207L149 215M167 207L163 186M149 215L131 192M163 186L144 179M144 179L131 192M177 213L167 207M144 229L149 215M175 179L163 179L163 186M121 194L131 194L131 192M143 168L144 179M640 364L647 361M631 378L639 393M639 393L653 379M653 379L647 361M660 338L654 338L654 356M675 355L669 355L669 360M669 360L654 356M636 337L649 358M654 356L649 356L649 358M647 361L649 358M668 392L667 382M668 392L681 392L681 400M692 377L690 377L690 398M692 377L673 375M673 375L667 375L667 382M690 398L681 400M654 404L668 392M639 393L639 396M653 379L667 382M672 418L681 400M696 373L692 373L692 377M700 405L690 405L690 398M669 360L673 375M579 47L564 33M579 47L570 60M570 60L553 58M564 33L555 33L555 34M555 34L548 47M553 58L548 47M590 45L579 47M574 19L564 33M578 76L570 60M547 78L553 78L553 58M541 15L555 34M533 48L548 48L548 47M603 421L586 419M603 421L611 397M586 419L591 395M591 395L607 393M611 397L607 397L607 393M579 422L586 419M608 426L603 421M629 403L611 397M583 391L591 395M609 380L607 380L607 393M600 298L625 287M635 299L629 289M625 287L629 289M658 277L639 275M629 289L639 275M445 94L439 110M445 94L430 94L430 80M423 83L430 80M423 83L412 106M439 110L417 110L417 110M417 110L412 106M454 92L445 94M444 118L439 110M431 76L430 76L430 80M403 72L423 83M399 106L412 106M421 144L417 110M608 267L606 247M608 267L612 268M612 268L634 260M606 247L631 244M631 244L637 244L637 253M637 253L634 260M604 244L606 247M607 267L608 267M625 287L612 287L612 268M639 275L634 260M632 237L631 244M660 252L637 253" fill="none" stroke="#606060" stroke-width="1" shape-rendering="crispEdges"/>
<path d="M165.7 227.0 L147.7 205.3 L154.9 187.3 L172.9 158.5 L176.5 147.7 L187.3 126.0 L196.3 108.0 L200.0 72.0 L198.0 36.0 L187.3 10.8 L180.0 5.4" fill="none" stroke="#8a7212" stroke-width="1" stroke-linejoin="round"/>
<path d="M165.7 227.0 L136.9 225.0 L100.9 234.0 L64.8 248.6 L36.0 254.0 L5.4 256.5" fill="none" stroke="#8a7212" stroke-width="1" stroke-linejoin="round"/>
<path d="M165.7 227.0 L194.5 212.5 L234.0 187.3 L273.8 169.3 L317.0 158.5 L345.8 151.3 L360.0 149.1" fill="none" stroke="#8a7212" stroke-width="1" stroke-linejoin="round"/>
<path d="M363.9 90.0 L349.4 86.5 L324.2 64.8 L299.0 54.0 L273.8 59.4 L259.4 43.2 L248.6 18.0 L239.6 7.2" fill="none" stroke="#8a7212" stroke-width="1" stroke-linejoin="round"/>
<path d="M239.6 7.2 L227.0 21.6 L225.0 46.8 L216.0 61.2 L200.0 72.0" fill="none" stroke="#8a7212" stroke-width="1" stroke-linejoin="round"/>
<path d="M165.7 230.5 L169.3 259.4 L172.9 290.0 L172.9 308.8 L183.7 359.2 L180.0 388.0 L165.7 424.0 L158.5 452.9 L151.3 478.0 L140.5 503.3 L133.3 532.0 L129.7 570.0 L126.0 596.0 L127.9 632.0 L133.3 653.7 L136.9 668.0 L158.5 686.0" fill="none" stroke="#8a7212" stroke-width="1" stroke-linejoin="round"/>
<path d="M410.8 104.5 L425.2 72.0 L436.0 54.0 L450.4 36.0 L468.4 21.6 L472.0 5.4" fill="none" stroke="#8a7212" stroke-width="1" stroke-linejoin="round"/>
<path d="M436.8 170.0 L436.0 173.0 L454.0 201.7 L482.9 230.5 L504.5 239.5" fill="none" stroke="#8a7212" stroke-width="1" stroke-linejoin="round"/>
<path d="M460.0 134.3 L490.0 138.7 L518.9 151.3 L551.3 158.5 L587.3 160.3 L616.1 151.3 L645.0 147.7 L659.4 144.0 L681.8 130.0 L713.5 113.5 L743.5 95.2 L770.3 81.8 L806.0 71.8" fill="none" stroke="#8a7212" stroke-width="1" stroke-linejoin="round"/>
<path d="M587.3 160.3 L594.5 118.9 L591.0 104.5 L605.3 93.7 L598.0 54.0 L587.3 21.6 L587.3 5.4" fill="none" stroke="#8a7212" stroke-width="1" stroke-linejoin="round"/>
<path d="M587.3 160.3 L569.3 187.3 L554.9 208.9 L536.9 227.0 L522.5 239.5 L514.0 246.0" fill="none" stroke="#8a7212" stroke-width="1" stroke-linejoin="round"/>
<path d="M659.4 144.0 L681.0 169.3 L688.0 180.0 L706.0 191.0 L724.2 205.3 L738.6 216.0 L760.2 230.5 L774.6 252.0 L781.8 273.8 L790.0 300.0 L806.0 330.0" fill="none" stroke="#8a7212" stroke-width="1" stroke-linejoin="round"/>
<path d="M684.6 180.0 L724.0 173.0 L760.0 176.5 L810.0 169.3" fill="none" stroke="#8a7212" stroke-width="1" stroke-linejoin="round"/>
<path d="M5.4 460.0 L46.8 465.5 L90.0 476.3 L118.9 472.7 L151.3 478.0 L187.3 477.4 L223.3 474.5 L259.4 474.5 L284.6 465.5 L306.2 438.5 L324.2 416.9 L340.0 405.8 L354.8 401.4 L366.6 399.9 L375.5 397.0 L382.9 391.7 L388.8 386.6 L399.0 384.4 L405.0 381.4" fill="none" stroke="#8a7212" stroke-width="1" stroke-linejoin="round"/>
<path d="M252.0 474.5 L237.7 514.0 L223.3 539.4 L214.3 570.0 L212.5 588.8 L201.7 617.6 L191.0 642.9 L187.3 655.5" fill="none" stroke="#8a7212" stroke-width="1" stroke-linejoin="round"/>
<path d="M399.4 170.0 L398.0 216.0 L396.3 285.0 L399.9 334.0 L401.4 359.2 L402.0 374.0 L405.0 381.4" fill="none" stroke="#8a7212" stroke-width="1" stroke-linejoin="round"/>
<path d="M388.8 386.6 L393.2 375.5 L399.0 369.6 L402.0 368.0" fill="none" stroke="#8a7212" stroke-width="1" stroke-linejoin="round"/>
<path d="M405.0 381.4 L411.0 374.0 L413.9 367.4 L422.8 365.0 L436.0 363.0 L449.4 363.0 L465.7 364.4 L480.0 362.0 L508.0 356.0 L520.0 355.0 L546.0 351.6 L563.0 348.0 L575.0 348.0" fill="none" stroke="#8a7212" stroke-width="1" stroke-linejoin="round"/>
<path d="M411.0 374.0 L415.4 365.0 L424.3 351.8 L434.6 344.4 L442.0 340.0 L455.0 318.0 L472.0 298.0 L486.5 282.0 L497.3 273.8 L508.0 248.6 L506.0 241.0" fill="none" stroke="#8a7212" stroke-width="1" stroke-linejoin="round"/>
<path d="M405.0 381.4 L403.6 390.3 L405.0 399.0 L408.7 405.0 L409.5 414.0 L415.4 424.3 L420.6 433.0 L424.3 443.5 L428.7 455.3 L436.0 467.3 L439.6 472.7" fill="none" stroke="#8a7212" stroke-width="1" stroke-linejoin="round"/>
<path d="M439.6 472.7 L472.0 467.3 L500.9 452.9 L522.5 432.0 L533.8 420.0 L547.6 397.0 L554.5 381.7 L564.8 369.7 L578.6 361.0" fill="none" stroke="#8a7212" stroke-width="1" stroke-linejoin="round"/>
<path d="M439.6 472.7 L428.8 496.0 L414.4 517.7 L400.0 539.4 L389.0 553.8 L374.6 570.0 L353.0 581.6 L324.2 599.6 L309.8 614.0 L302.6 632.0 L300.0 640.0" fill="none" stroke="#8a7212" stroke-width="1" stroke-linejoin="round"/>
<path d="M5.4 661.0 L36.0 650.0 L72.0 642.9 L100.9 641.0 L126.0 644.7 L144.0 650.0 L165.7 653.7 L187.3 655.5 L216.0 648.3 L245.0 644.7 L270.0 646.5 L288.0 639.3 L306.0 624.8 L324.2 623.0 L345.8 626.6 L363.8 635.6 L381.8 632.0 L400.0 623.0 L436.0 615.8 L472.0 617.6 L508.0 615.8 L544.0 623.0 L573.0 635.6 L616.0 644.7 L652.0 644.7 L688.0 650.0 L724.2 655.5 L760.2 657.3 L789.0 653.7" fill="none" stroke="#8a7212" stroke-width="1" stroke-linejoin="round"/>
<path d="M100.9 641.0 L108.0 664.5 L133.3 675.3 L158.5 686.0 L169.3 678.9 L187.3 655.5" fill="none" stroke="#8a7212" stroke-width="1" stroke-linejoin="round"/>
<path d="M585.5 361.0 L592.4 368.0 L601.0 380.0 L606.0 397.0 L616.6 412.8 L623.4 420.0 L634.0 431.3 L630.5 460.0 L630.5 496.0 L637.7 532.0 L648.5 553.8 L652.2 570.0 L659.4 596.0 L666.6 632.0 L681.0 660.9 L706.2 682.5 L724.2 704.0 L742.2 740.0 L749.4 776.0 L747.6 797.7" fill="none" stroke="#8a7212" stroke-width="1" stroke-linejoin="round"/>
<path d="M634.0 431.3 L659.4 449.3 L688.0 460.0 L724.2 467.3 L760.2 474.5 L796.3 485.3 L810.0 489.0" fill="none" stroke="#8a7212" stroke-width="1" stroke-linejoin="round"/>
<path d="M595.0 353.3 L606.0 354.0 L616.6 360.0 L637.0 363.6 L666.6 368.8 L688.0 370.0 L724.2 371.9 L753.0 373.7 L774.6 359.2 L796.3 344.8 L810.0 337.6" fill="none" stroke="#8a7212" stroke-width="1" stroke-linejoin="round"/>
<path d="M593.3 335.0 L606.0 324.8 L623.4 318.8 L640.7 312.8 L658.0 299.0 L680.0 287.0 L697.0 278.7 L721.0 263.9 L739.4 252.8 L756.0 243.6 L770.8 234.3 L789.3 227.0 L810.0 219.6" fill="none" stroke="#8a7212" stroke-width="1" stroke-linejoin="round"/>
<path d="M579.5 336.9 L570.0 324.8 L557.0 317.0 L554.5 305.9 L544.0 293.8 L543.3 280.0 L533.3 266.6 L522.5 245.0" fill="none" stroke="#8a7212" stroke-width="1" stroke-linejoin="round"/>
<path d="M799.9 560.0 L792.7 588.8 L789.0 614.0 L785.4 650.0 L792.7 679.0 L803.5 704.0" fill="none" stroke="#8a7212" stroke-width="1" stroke-linejoin="round"/>
<path d="M14.0 661.0 L8.0 640.0 L10.0 625.0" fill="none" stroke="#8a7212" stroke-width="1" stroke-linejoin="round"/>
<path d="M394.5 99.4 L407.3 99.9 L419.1 101.8 L429.0 106.7 L435.9 113.6 L437.8 127.4 L434.9 137.3 L430.9 145.2 L429.0 153.1 L423.1 160.9 L411.2 164.9 L399.4 165.9 L387.6 162.9 L377.7 158.0 L369.9 149.1 L365.9 139.3 L367.9 129.4 L371.8 119.6 L378.7 110.7 L385.6 103.8 L394.5 99.4" fill="none" stroke="#8a7212" stroke-width="1" stroke-linejoin="round"/>
<path d="M405.3 132.4 L407.3 119.6 L411.2 107.7 L416.2 101.8 L421.1 95.9 L423.1 90.0" fill="none" stroke="#8a7212" stroke-width="1" stroke-linejoin="round"/>
<path d="M405.3 132.4 L397.4 122.5 L389.6 115.6 L381.7 108.7 L369.9 97.9 L363.9 90.0" fill="none" stroke="#8a7212" stroke-width="1" stroke-linejoin="round"/>
<path d="M405.3 132.4 L399.4 136.3 L389.6 139.3 L379.7 143.2 L368.9 148.1 L360.0 149.1" fill="none" stroke="#8a7212" stroke-width="1" stroke-linejoin="round"/>
<path d="M405.3 132.4 L406.3 145.2 L402.4 158.0 L399.4 170.0" fill="none" stroke="#8a7212" stroke-width="1" stroke-linejoin="round"/>
<path d="M405.3 132.4 L415.2 143.2 L423.1 153.1 L430.9 162.9 L436.8 170.0" fill="none" stroke="#8a7212" stroke-width="1" stroke-linejoin="round"/>
<path d="M405.3 132.4 L419.1 129.4 L437.8 131.4 L448.7 131.9 L460.0 134.3" fill="none" stroke="#8a7212" stroke-width="1" stroke-linejoin="round"/>
<path d="M571.7 323.0 L575.0 309.3 L583.8 294.7" fill="none" stroke="#8a7212" stroke-width="1" stroke-linejoin="round"/>
<path d="M586.4 330.0 L586.4 361.0" fill="none" stroke="#8a7212" stroke-width="1" stroke-linejoin="round"/>
<path d="M575.0 348.0 L585.0 350.0 L595.0 353.3" fill="none" stroke="#8a7212" stroke-width="1" stroke-linejoin="round"/>
<path d="M579.5 336.9 L586.0 345.0 L585.5 361.0" fill="none" stroke="#8a7212" stroke-width="1" stroke-linejoin="round"/>
<path d="M593.3 335.0 L586.0 347.0 L578.6 361.0" fill="none" stroke="#8a7212" stroke-width="1" stroke-linejoin="round"/>
<ellipse cx="585" cy="347.7" rx="10" ry="13.4" fill="none" stroke="#8a7212" stroke-width="1"/>
<ellipse cx="166" cy="228" rx="6" ry="5" fill="none" stroke="#8a7212" stroke-width="1"/>
<path d="M42.2 680.7 L46.1 680.0 L50.1 684.0 L51.7 688.6 L48.8 689.9 L45.5 687.2 L43.2 684.0 L42.2 680.7 Z" fill="#284262"/>
<path d="M59.3 684.6 L61.9 687.9 L64.6 693.2 L65.9 699.8 L71.2 703.1 L76.4 703.7 L83.0 705.0 L84.4 709.7 L79.1 710.1 L73.8 707.9 L68.5 705.7 L64.6 703.7 L61.3 698.5 L58.0 693.2 L57.3 690.5 L59.3 684.6 Z" fill="#284262"/>
<path d="M144.4 696.9 L150.0 695.3 L153.2 699.3 L154.8 704.1 L151.6 708.1 L146.8 710.5 L145.2 714.5 L141.2 712.1 L140.4 708.1 L145.2 704.9 L147.6 701.7 L144.4 696.9 Z" fill="#284262"/>
<path d="M299.6 59.0 L301.1 60.9 L303.7 62.4 L305.1 60.9 L304.8 57.9 L306.6 55.7 L309.9 55.3 L313.6 57.6 L314.7 60.9 L316.6 66.4 L318.4 70.5 L321.8 70.5 L323.6 71.6 L323.6 73.4 L320.3 74.2 L319.2 76.8 L318.8 80.5 L320.3 84.9 L322.5 88.6 L324.0 93.0 L323.2 96.3 L322.1 96.0 L321.4 92.3 L318.8 88.6 L315.8 85.6 L314.4 81.9 L314.7 77.5 L313.6 73.1 L310.7 68.6 L310.3 63.5 L309.6 59.4 L307.7 57.6 L306.2 59.0 L305.9 62.4 L303.3 63.5 L300.3 62.0 L299.2 60.1 Z" fill="#284262"/>
<path d="M367.4 258.6 L376.4 260.0 L387.2 266.6 L396.3 276.7 L390.8 273.8 L381.8 268.4 L372.8 264.8 Z" fill="#284262"/>
<path d="M614.0 286.0 L615.7 290.3 L619.1 292.1 L620.9 286.9 L623.4 291.2 L627.8 292.9 L623.4 297.2 L620.0 302.4 L614.8 307.6 L609.7 312.8 L605.3 311.0 L604.5 306.7 L608.8 307.6 L612.2 302.4 L613.1 295.5 L612.2 289.5 Z" fill="#284262"/>
<path d="M438.3 377.0 L442.0 371.8 L446.4 368.0 L449.4 363.7 L451.6 366.6 L447.9 371.0 L443.5 375.5 L440.5 377.7 Z" fill="#284262"/>
<path d="M424.3 413.2 L427.2 416.9 L428.0 424.3 L431.7 428.7 L430.9 434.6 L428.0 432.4 L425.0 425.8 L424.0 418.4 Z" fill="#284262"/>
<path d="M526.0 503.3 L531.5 510.5 L529.7 521.3 L536.9 528.5 L533.3 537.5 L527.9 532.0 L525.4 517.7 Z" fill="#284262"/>
<path d="M4.0 705.7 L6.1 705.7 L11.9 703.7 L17.1 701.7 L19.8 698.5 L26.4 699.8 L30.3 699.1 L31.0 703.1 L27.0 705.0 L27.7 708.3 L34.3 707.0 L39.5 706.8 L44.8 706.4 L46.8 704.4 L48.8 705.7 L45.5 711.6 L44.8 715.6 L50.7 716.2 L52.1 723.5 L50.7 726.1 L56.7 724.2 L63.3 726.1 L68.5 728.1 L71.8 726.8 L72.5 730.7 L75.8 734.0 L76.4 738.0 L79.1 741.3 L81.7 748.5 L85.0 752.4 L87.0 756.4 L89.6 759.1 L93.7 759.4 L97.2 759.4 L101.9 760.0 L105.1 759.4 L109.1 760.3 L114.1 759.2 L118.6 760.9 L122.1 760.4 L125.3 759.6 L129.9 759.8 L133.4 760.3 L137.1 760.8 L141.8 761.5 L146.0 761.4 L150.0 761.5 L153.9 761.1 L158.8 762.4 L162.0 761.7 L162.0 758.0 L160.4 752.1 L157.2 745.7 L158.8 739.3 L157.8 735.6 L155.6 731.3 L150.8 726.5 L150.8 721.7 L155.6 723.3 L158.5 726.1 L162.0 729.7 L165.7 729.0 L170.0 729.7 L174.8 731.3 L178.0 736.1 L180.9 739.1 L182.9 742.5 L187.4 743.1 L190.9 744.1 L194.8 747.1 L197.3 748.9 L201.3 750.0 L206.9 752.1 L212.3 755.0 L216.5 758.0 L216.5 761.7 L221.5 761.6 L224.3 761.9 L229.7 761.3 L232.9 761.4 L238.6 762.1 L242.1 761.7 L240.5 756.1 L235.9 754.5 L232.5 753.7 L229.5 749.8 L227.7 747.3 L224.2 745.2 L219.7 744.1 L216.6 741.6 L213.3 739.3 L208.5 738.6 L204.1 737.4 L200.5 736.1 L197.3 729.7 L192.6 726.4 L189.3 723.3 L185.6 719.7 L182.9 716.9 L186.0 714.2 L187.7 710.5 L190.5 707.1 L194.1 702.5 L197.6 699.1 L202.1 696.1 L204.2 691.5 L205.3 686.4 L200.5 683.2 L198.9 688.0 L197.3 693.7 L190.9 695.3 L186.1 692.9 L184.5 688.8 L179.6 688.0 L176.4 684.0 L178.0 680.8 L184.5 680.0 L189.3 674.4 L194.1 670.4 L197.3 668.0 L200.6 668.4 L205.3 667.2 L210.1 662.4 L212.8 658.8 L216.5 656.0 L213.3 651.2 L218.9 650.4 L219.7 655.2 L226.1 653.6 L230.5 652.1 L234.1 651.2 L237.0 648.1 L240.5 646.4 L244.7 646.4 L250.1 646.1 L256.5 648.0 L260.9 648.6 L266.1 648.8 L269.9 649.9 L274.1 651.2 L279.7 652.8 L283.7 654.4 L279.6 652.9 L284.4 649.6 L290.8 647.2 L295.6 651.2 L302.0 654.5 L306.0 652.9 L307.0 647.8 L307.6 641.6 L306.3 635.5 L306.0 630.4 L309.2 625.6 L313.2 621.6 L318.0 624.0 L320.4 630.4 L321.5 636.5 L321.2 641.6 L325.3 648.0 L327.7 651.6 L330.9 656.1 L335.7 660.1 L340.9 660.6 L345.3 659.7 L344.2 655.3 L346.6 653.7 L348.5 656.1 L350.9 655.3 L353.3 656.4 L355.7 652.9 L357.8 648.0 L360.6 644.2 L362.9 643.2 L361.6 647.7 L360.0 655.3 L366.1 652.9 L372.5 649.3 L375.2 645.4 L378.9 640.0 L377.9 636.2 L375.7 632.0 L380.5 636.0 L383.7 642.4 L385.2 636.6 L386.9 632.0 L390.1 631.2 L388.5 638.4 L393.3 642.4 L398.1 643.2 L391.7 646.4 L398.1 648.0 L401.4 648.4 L406.1 647.2 L411.3 647.2 L417.3 646.4 L420.5 642.4 L420.0 644.8 L422.8 642.2 L426.4 638.4 L431.4 639.7 L436.0 641.6 L439.5 641.2 L444.0 640.0 L447.3 640.0 L452.0 640.8 L454.4 648.0 L449.3 648.0 L444.0 646.8 L440.2 647.3 L436.0 648.5 L440.7 649.6 L444.0 651.6 L447.3 652.6 L452.0 654.5 L455.9 655.8 L459.5 658.2 L464.2 659.9 L468.0 662.5 L472.1 665.8 L477.4 668.0 L480.9 670.5 L484.4 673.3 L486.7 675.1 L490.5 678.5 L492.9 681.8 L497.2 684.6 L500.1 686.5 L502.5 690.7 L506.5 694.5 L508.1 699.7 L509.7 704.1 L510.2 708.9 L511.3 712.1 L514.6 711.8 L519.3 711.3 L524.5 712.3 L528.9 712.1 L532.5 716.0 L535.3 719.3 L540.6 718.8 L544.9 716.9 L548.4 715.1 L553.0 713.2 L556.1 710.5 L559.7 708.3 L564.2 705.3 L567.3 702.5 L571.5 698.3 L575.3 694.5 L580.0 690.5 L580.4 683.6 L584.5 681.1 L588.3 678.3 L591.5 676.6 L596.1 674.4 L601.3 675.5 L605.2 675.1 L609.2 675.7 L614.8 677.2 L619.6 678.3 L623.0 682.4 L625.9 685.7 L630.1 688.8 L631.9 692.4 L635.3 695.3 L637.9 699.2 L641.7 701.8 L645.1 705.1 L648.3 707.1 L650.6 710.6 L653.3 716.1 L656.2 720.1 L658.3 723.1 L662.1 727.4 L664.0 730.6 L667.4 734.7 L670.7 737.8 L674.5 741.0 L676.6 745.3 L680.2 750.4 L682.3 754.1 L688.1 755.9 L692.7 758.0 L695.5 760.8 L697.4 764.1 L700.6 767.1 L703.7 772.9 L705.8 777.6 L711.0 782.8 L710.1 788.8 L708.4 793.3 L707.2 797.1 L706.6 801.6 L705.8 806.3 L706.0 808.0 L701.5 807.9 L698.2 808.0 L693.7 808.5 L690.7 807.9 L685.3 807.3 L682.5 807.3 L678.3 808.1 L673.6 808.5 L669.1 807.4 L665.8 807.2 L662.4 807.6 L657.3 807.3 L654.1 807.9 L650.0 808.2 L646.3 808.7 L642.1 807.5 L637.8 807.5 L633.0 808.0 L630.1 807.5 L625.4 807.8 L622.1 808.0 L617.9 808.4 L613.6 808.5 L610.4 807.3 L606.4 808.4 L601.1 807.9 L597.9 808.7 L593.5 808.1 L590.3 808.5 L586.4 807.9 L581.9 807.5 L578.0 808.5 L573.8 808.3 L569.2 808.6 L566.4 808.8 L561.6 808.5 L557.3 808.7 L554.1 807.8 L548.9 807.9 L545.6 808.4 L541.5 807.2 L538.0 807.3 L534.0 807.5 L529.2 808.5 L524.9 807.4 L521.5 808.4 L518.0 808.3 L514.2 808.0 L510.2 807.3 L505.0 808.0 L501.1 808.4 L497.6 808.0 L493.9 808.1 L489.1 807.8 L485.9 808.6 L480.9 808.6 L478.1 808.0 L473.5 807.5 L469.4 808.0 L465.5 807.2 L462.1 808.0 L457.1 808.5 L453.4 808.0 L449.6 807.3 L445.3 807.9 L442.0 808.7 L436.9 808.0 L432.6 807.9 L429.7 808.6 L425.2 807.7 L420.7 808.2 L417.9 807.4 L413.6 807.2 L408.7 807.6 L405.4 807.7 L400.9 808.2 L396.5 808.4 L392.5 808.0 L388.7 807.5 L385.1 807.9 L380.9 807.9 L377.1 807.5 L372.6 808.2 L369.3 808.0 L365.6 808.2 L361.6 807.6 L357.4 808.5 L353.6 807.7 L348.7 808.7 L344.5 808.8 L341.6 807.4 L336.5 808.4 L332.6 807.4 L329.5 807.9 L325.4 807.4 L320.7 808.3 L316.1 807.5 L313.2 808.7 L309.6 807.4 L304.9 808.4 L300.9 808.3 L296.3 807.3 L292.2 807.3 L288.9 808.0 L284.9 807.4 L280.3 807.5 L277.3 808.8 L273.4 807.4 L268.1 808.7 L264.7 808.4 L260.5 807.9 L256.7 807.9 L252.9 807.2 L249.0 808.6 L244.2 807.9 L241.1 807.8 L236.2 807.5 L232.7 807.2 L229.3 808.5 L225.0 808.6 L220.8 807.8 L216.8 808.0 L213.4 808.5 L208.2 808.7 L205.0 808.4 L201.1 807.8 L197.2 808.6 L192.8 808.4 L189.0 807.8 L184.9 807.3 L180.2 808.0 L175.7 807.8 L172.7 808.2 L168.0 808.7 L164.7 807.7 L160.7 808.1 L156.5 807.8 L153.2 808.2 L148.7 808.4 L145.2 807.2 L140.6 808.4 L136.0 807.8 L131.6 807.5 L128.2 807.4 L123.9 808.6 L120.4 808.0 L117.1 808.1 L113.1 808.2 L108.8 807.3 L104.4 808.4 L99.5 808.7 L95.7 808.0 L91.7 808.0 L88.4 807.3 L84.9 807.9 L80.3 808.2 L76.0 807.7 L72.4 808.1 L67.8 808.3 L63.8 807.2 L59.8 807.3 L55.6 808.4 L52.0 808.6 L48.5 807.3 L44.9 808.7 L39.4 808.6 L36.0 808.0 L32.8 807.6 L28.1 808.7 L24.4 807.9 L20.8 808.5 L16.2 807.4 L12.2 807.9 L7.5 807.3 L4.0 808.0 Z" fill="#004263" stroke="#000" stroke-width="1"/>
<path d="M5.3 713.0 L9.9 718.2 L17.1 717.6 L24.4 715.6 L30.3 718.2 L35.1 720.2 L39.5 721.5 L35.6 724.8 L31.0 730.1 L27.8 728.7 L23.7 726.1 L17.1 722.2 L13.2 719.5 L5.3 720.2 L5.3 713.0 Z" fill="#5c4f4a" stroke="#000" stroke-width="1"/>
<path d="M65.9 743.3 L71.2 740.0 L76.4 741.9 L79.1 748.5 L73.8 751.2 L68.5 747.2 L65.9 743.3 Z" fill="#5c4f4a" stroke="#000" stroke-width="1"/>
<path d="M473.7 657.7 L475.3 661.7 L480.9 660.5 L484.1 665.7 L488.9 670.5 L492.1 668.9 L487.3 663.3 L491.3 659.6 L495.3 656.1 L498.5 653.7 L496.1 651.6 L492.9 655.3 L488.1 658.0 L484.9 659.6 L481.7 655.3 L478.5 656.1 L473.7 657.7 Z" fill="#004263" stroke="#000" stroke-width="1"/>
<path d="M538.5 705.7 L542.5 702.5 L548.1 700.6 L546.8 708.1 L551.1 707.5 L556.1 705.7 L560.1 703.6 L564.6 700.5 L569.7 698.5 L568.1 701.7 L565.4 703.7 L561.4 706.4 L557.7 708.9 L552.9 710.5 L548.1 712.1 L543.7 711.8 L540.1 710.5 L538.5 705.7 Z" fill="#004263" stroke="#000" stroke-width="1"/>
<path d="M114.7 757.8 L114.4 753.8 L114.9 748.5 L121.3 745.9 L127.9 741.7 L133.1 741.9 L135.8 743.5 L139.7 745.9 L145.0 748.5 L146.3 753.8 L143.7 757.8 L139.0 758.1 L134.8 757.4 L131.9 757.4 L127.3 757.7 L122.9 757.8 L118.4 758.2 L114.7 757.8 Z" fill="#004263" stroke="#000" stroke-width="1"/>
<path d="M84.4 757.8 L84.6 753.8 L85.7 748.5 L88.4 746.2 L92.3 743.3 L97.5 745.9 L104.1 748.5 L105.4 753.8 L104.1 757.8 L98.6 757.4 L94.9 757.4 L89.5 757.7 L84.4 757.8 Z" fill="#004263" stroke="#000" stroke-width="1"/>
<path d="M130.0 652.0 L133.5 652.5 L136.4 656.0 L136.7 660.8 L134.8 665.6 L131.3 668.0 L128.4 666.4 L126.8 660.8 L127.6 655.2 Z" fill="#284262"/>
<path d="M222.2 678.6L222.4 675.7L220.9 677.2M215.8 703.2L212.3 704.7L215.2 704.8M221.2 677.6L222.5 676.7M205.1 689.6L203.3 685.6L202.9 682.5M217.3 682.1L217.9 684.9L217.5 686.5L219.1 683.8M219.4 676.0L220.6 674.5L218.8 677.7L217.7 673.5M214.3 700.7L215.1 702.9L218.1 702.4L220.6 701.4M224.3 687.3L225.1 684.7L226.6 687.4L225.5 684.1M213.2 685.7L214.7 686.9L216.1 684.7L215.8 681.9M211.6 701.4L209.4 700.0L210.8 702.6L214.6 702.2M217.0 701.9L214.9 703.3M224.2 682.4L222.4 679.6L222.0 677.0M226.3 688.5L223.1 688.2M224.7 690.7L227.2 689.7M223.4 684.8L220.1 683.9M218.7 686.4L219.8 683.2M217.3 675.8L218.4 672.1M223.4 678.6L227.1 680.4L223.5 681.5L223.1 683.8M223.0 675.9L224.8 676.8L222.8 676.4M210.8 696.2L209.9 693.3L211.8 694.9M212.4 699.4L215.7 702.1L213.6 701.9M218.5 700.2L219.0 702.9M214.8 688.3L212.7 687.7L216.6 687.1M216.5 677.4L219.9 678.1L221.1 674.8L217.8 676.5M207.4 677.0L206.0 680.8M221.7 684.8L223.9 687.1L225.8 684.5M215.2 700.7L214.0 699.5L214.6 701.2L210.8 699.4M218.2 687.8L215.9 689.7L219.2 690.0L217.3 691.4M223.3 690.5L222.2 692.3M220.1 701.0L217.8 704.5L216.7 701.7L218.9 701.5M221.3 672.1L222.9 674.8M210.7 681.6L212.1 679.4L210.8 681.4L213.1 679.0M207.6 690.0L206.4 692.5M207.1 691.4L209.9 692.9L205.9 691.1M212.9 680.2L215.5 678.9L214.8 682.7L215.6 681.3M220.0 672.4L221.8 668.9M208.8 699.0L207.2 699.9L208.3 701.8L208.2 700.0M225.6 683.4L227.6 682.1L227.6 685.0L230.4 687.0M218.3 686.1L217.0 687.1L215.6 690.1M215.1 678.4L215.8 674.3L217.7 672.2L216.5 673.8M209.3 676.5L211.3 677.6L214.2 677.3M219.6 693.6L217.7 695.1M212.1 681.0L214.0 679.5L212.4 682.2L209.5 680.6M217.3 671.6L218.8 671.8M221.9 682.6L223.2 681.1L219.3 681.1M208.5 698.7L209.6 696.4M207.0 688.6L205.8 692.6L208.5 695.9L210.9 696.4M221.8 695.3L220.9 698.3M210.2 698.7L214.0 697.8L211.1 696.9L212.8 694.6M213.7 681.8L209.8 682.2L213.8 680.4M217.9 691.6L217.7 695.6M213.7 684.2L216.2 685.8L217.3 688.0L220.6 685.4M209.7 680.9L207.6 681.1L204.8 682.8L208.4 680.5M210.9 693.7L214.2 691.9M219.5 683.0L219.9 678.9L218.5 682.2L220.0 680.1M220.8 697.1L222.4 698.1L220.0 696.2L218.6 697.6M214.4 705.0L214.5 703.4L212.9 700.0L211.2 702.5M208.3 696.9L206.5 696.6M210.4 672.7L214.1 670.4L216.6 673.4L218.5 670.5M220.7 685.9L223.3 685.5M205.4 701.7L205.8 703.3L203.9 699.2L201.3 696.2M199.7 731.2L196.9 734.4M213.4 707.5L214.4 709.2L214.7 711.2L216.1 713.9M194.9 712.0L196.7 715.8L197.8 712.2L200.9 710.1M209.4 704.0L211.4 707.2L210.8 704.4M200.7 710.8L196.7 710.8L194.2 714.0M201.9 732.1L198.6 733.1L202.3 731.6L204.4 728.1M203.6 724.8L202.0 728.9L201.2 726.0M200.3 718.8L197.2 720.8L194.6 721.0L192.9 717.2M209.2 703.4L211.0 702.3M204.8 700.0L203.1 696.1M202.7 725.9L203.6 727.2M194.4 717.0L194.4 714.6L192.0 714.8L188.8 713.7M196.4 717.3L194.2 717.7M205.1 702.1L208.9 702.7M205.4 699.0L206.4 700.5M204.2 711.7L208.3 709.9L208.6 712.7L208.6 716.0M203.8 726.2L201.6 728.9L200.9 732.6L202.5 734.8M188.2 711.9L188.3 713.7M190.2 712.3L187.2 713.2L184.6 715.6M210.0 707.6L208.5 706.8M196.9 712.5L200.0 710.8M195.2 720.7L193.7 724.6L192.2 725.5M184.9 718.1L185.7 721.2L187.8 722.3M189.3 714.8L188.9 712.9L186.6 716.4M203.6 703.1L207.1 702.2L210.5 702.7M199.6 704.2L201.3 706.2L197.2 706.6M196.9 710.9L196.3 713.0L194.0 713.1L190.9 714.7M204.6 692.8L201.8 695.1L203.7 693.5M194.9 724.4L196.6 726.6L199.9 727.2L201.4 725.8M200.0 710.4L199.9 714.1L197.0 715.9M195.0 713.6L194.9 710.2L195.2 706.1L195.7 709.4M196.4 719.6L198.5 718.3L194.3 717.7L192.3 718.1M190.1 714.7L193.6 712.4L196.8 714.7M187.5 716.8L184.5 717.2L186.1 720.4M200.8 719.7L200.9 716.7M205.5 703.1L207.6 701.1L210.9 700.8M194.5 724.2L194.4 727.5L196.3 724.4M201.8 696.6L200.6 699.8L197.5 700.1L199.0 699.2M204.6 726.0L202.7 723.6L205.3 722.1L206.1 725.3M201.7 712.4L203.5 711.9M210.4 705.3L211.0 707.8L209.6 710.0M199.6 729.6L202.9 727.0L199.8 728.2M189.2 720.1L190.0 721.9L191.5 723.6M201.4 705.2L199.1 708.7L201.8 707.3L200.2 703.3M192.7 717.3L194.8 718.4L192.6 718.6L194.9 717.0M193.4 705.3L195.0 706.5M201.1 709.7L199.7 711.3M209.2 702.9L207.2 704.0M190.9 716.8L194.1 715.5L191.0 712.9M197.8 699.9L193.8 699.4L191.8 702.6M203.4 706.0L201.1 707.9M203.7 702.2L201.0 700.3L196.7 699.2L200.7 698.9M198.1 706.9L194.2 708.1L191.1 709.1L194.2 712.0M196.1 709.2L197.9 709.3L196.7 710.9L198.8 713.7M204.7 688.9L204.8 691.9L203.1 691.2M187.6 710.9L185.4 710.3M198.5 726.1L199.1 728.6L196.2 725.8L199.2 723.7M199.9 732.0L195.9 731.7M200.6 710.7L201.1 714.3L200.0 711.0M210.9 741.4L206.9 742.2L203.5 742.7L205.5 745.4M230.1 751.4L232.5 755.0M231.7 755.5L229.0 755.4L227.1 758.0M234.9 758.0L231.6 756.5L232.6 760.4L230.5 759.3M231.2 755.9L228.3 753.6M211.6 741.5L211.0 743.1M218.9 747.9L221.3 745.3L224.8 747.9L225.7 745.8M225.9 752.4L223.8 753.2L222.9 755.6M213.1 744.7L211.9 743.4L209.9 741.3L208.8 739.0M228.8 752.9L225.1 750.6M220.5 751.0L220.6 753.0L217.3 754.4M226.2 754.4L223.8 753.0L219.8 752.5M220.9 748.8L221.5 752.5L223.4 749.5L221.0 749.2M214.1 741.3L216.9 737.8M205.3 741.7L208.2 739.6M237.5 756.5L236.1 755.8L236.0 753.8M221.5 745.5L222.9 746.7L226.0 746.2L226.6 744.6M209.3 738.9L211.1 742.3M217.4 746.8L219.8 743.9M202.3 737.2L206.3 736.6L208.9 738.1M213.1 743.2L211.1 745.0L210.3 747.2M229.4 754.2L230.6 756.5L227.5 754.2L224.7 756.9M193.3 750.5L193.9 753.5M154.3 728.2L156.2 724.8M164.1 743.9L168.0 742.9L165.2 745.8L163.8 748.1M161.2 729.5L164.8 731.8L166.9 729.4M163.6 754.6L163.0 752.2L163.2 750.2L161.1 751.3M161.7 750.3L164.9 751.3M162.7 740.4L162.1 738.5L161.3 737.0M170.2 742.4L166.2 740.9L167.6 741.9L168.1 745.7M195.1 748.0L197.4 748.2L201.2 747.4M179.0 751.1L175.9 748.3L175.4 750.5M171.1 733.9L174.3 733.9L172.3 734.7M178.4 740.8L178.4 745.3L180.6 747.4L181.0 744.8M160.8 735.7L161.4 738.4M174.5 749.4L175.8 748.0L179.9 749.3M180.6 750.1L183.2 750.8L179.3 752.6L175.4 750.7M157.2 731.3L158.2 728.1L159.4 725.2M180.7 746.1L179.3 748.4L175.2 748.5M162.7 743.9L166.7 745.1M176.6 748.4L176.9 749.9L178.2 749.2M188.1 749.8L184.2 748.5M158.9 745.6L160.2 742.7L161.1 738.5M167.9 748.9L169.4 749.9L166.4 747.0M173.8 736.5L174.1 734.9L175.7 733.5L174.4 737.2M169.5 750.4L168.1 751.8M155.0 724.3L152.6 722.5L149.8 722.1L149.2 724.2M157.9 752.9L156.4 749.9M164.3 754.7L164.9 751.6L167.7 750.4M170.4 743.5L172.8 746.5L170.6 749.1M167.1 741.9L165.2 738.2L168.2 739.8M174.4 748.7L175.6 745.0M177.3 738.9L179.0 738.8L183.0 736.8L184.4 739.4M187.0 745.1L184.3 747.0L187.2 744.8L186.4 746.8M164.9 743.9L167.1 742.3L163.9 744.6M162.9 735.7L162.8 739.9M171.2 741.4L169.1 742.9L172.0 743.4M168.3 742.2L164.1 740.9L163.9 743.9L164.9 745.4M192.0 746.7L193.6 748.9L196.1 751.6L198.4 752.8M159.6 731.4L161.4 732.2L163.0 730.6L160.2 732.9M167.8 736.1L167.2 739.6M163.8 750.0L166.1 753.4M175.8 738.2L171.7 737.3L168.2 738.4L170.6 735.8M193.9 751.7L192.6 750.7L191.1 749.0M190.4 745.2L191.1 742.3L193.0 738.9M153.2 729.0L155.8 726.7L154.8 723.6M175.4 742.8L178.9 743.6M165.4 742.9L164.8 741.2M166.5 753.9L164.0 757.5L166.1 754.9L164.5 756.1M173.8 739.4L172.3 735.8L171.6 733.1L172.3 734.5M162.5 748.8L166.5 747.4L163.4 749.5M159.3 730.7L161.6 731.1M163.0 754.8L161.2 753.2M194.2 749.8L195.9 750.9L199.1 749.5L201.5 747.6M157.2 729.3L160.5 732.2M163.5 741.6L165.7 744.6L163.3 740.8L166.3 738.6M185.5 750.5L186.0 752.0L184.9 754.3L188.2 753.9M157.5 728.2L160.9 727.2M192.6 746.8L191.2 744.2L193.4 741.0L190.9 743.1M173.0 732.4L172.9 728.4L173.0 726.7M156.6 728.4L153.9 731.5M167.7 740.4L169.6 739.7M158.4 751.4L157.0 754.2L161.1 752.6L162.3 748.9M170.7 748.3L170.3 746.2L168.7 749.1L170.3 749.7M160.8 732.7L160.6 731.2M170.2 750.5L168.8 749.1M167.1 747.8L168.9 744.8L166.6 743.7L163.0 741.2M150.8 725.9L152.1 724.3L150.3 724.6L152.7 722.4M183.4 742.7L180.9 742.1M194.3 747.0L195.0 743.8M174.7 752.5L177.2 753.7L179.6 755.0M174.1 736.2L171.6 735.8M140.0 754.0L143.5 752.7L144.9 752.0L140.6 752.9M140.4 756.5L137.5 759.5M136.1 744.1L138.2 744.3M134.5 756.7L136.6 760.0L138.7 762.6M133.5 757.8L132.4 762.0M138.6 753.0L140.5 757.0M133.2 757.5L132.4 760.0L133.3 761.6M131.0 747.2L128.2 745.5L127.8 743.8L126.3 745.8M137.6 745.2L139.1 745.0L139.1 741.0M130.3 754.7L127.4 757.6L124.0 758.6M140.0 757.3L140.1 753.0M135.7 750.6L138.6 753.0L139.8 749.1M130.6 757.2L131.4 760.1M135.8 744.8L138.6 743.4L137.7 745.6M132.8 743.7L132.4 741.3M137.7 753.7L140.8 753.4M136.5 746.2L135.2 748.1L134.1 746.5L137.5 746.0M133.3 757.7L136.5 756.7L137.0 754.9L135.2 755.7M137.3 758.0L140.1 757.6M137.8 753.8L137.4 756.7L138.9 755.6M143.2 750.8L141.1 748.6M135.4 743.9L132.3 743.6L130.6 743.6M101.1 754.9L101.2 753.3L103.2 755.9M104.7 753.6L105.0 751.3L106.2 747.8M93.1 750.5L95.7 752.2L94.6 748.7L92.9 745.9M86.2 748.7L84.4 750.7M89.6 753.0L88.5 749.3M103.4 755.0L99.4 755.4L100.5 758.4M104.8 756.1L106.4 755.8L104.3 758.4L103.2 761.4M86.2 755.9L87.3 759.0L86.9 762.7L85.3 764.1M97.0 755.1L94.9 754.9L96.6 757.9L93.3 756.6M97.4 747.9L96.0 749.1L97.6 749.1L94.3 750.8M92.7 757.5L93.3 755.8M97.1 755.7L93.3 757.0L94.2 754.1M94.3 753.1L96.2 752.4L95.0 749.8M99.6 757.2L101.4 757.5M96.8 747.7L94.3 747.6L89.9 747.1M103.9 748.6L103.6 751.5L101.7 751.8M92.3 746.8L90.8 749.9L95.0 749.1M92.3 751.5L89.6 748.0L89.3 746.0M101.8 750.8L100.2 751.3L104.0 752.0L106.8 754.4M92.0 756.8L93.9 757.6L97.1 756.5L93.7 758.3M124.9 742.7L128.7 743.8L131.4 745.7L133.2 744.5M117.4 747.4L119.7 748.9M121.7 751.1L119.4 749.9M124.4 754.5L127.0 756.4M137.2 750.0L138.2 753.4L136.0 754.5L133.5 753.0M124.2 754.1L124.5 752.4L123.6 755.2L122.0 757.6M130.9 742.9L132.6 745.3L136.0 746.2M138.9 750.2L137.5 752.3L133.6 752.4M123.2 752.4L126.6 753.7M135.1 757.6L134.6 760.2L133.8 758.9M129.3 743.0L127.1 743.0M123.8 753.1L120.6 755.7L123.1 757.1M132.1 755.7L133.6 753.9L131.4 755.2M142.6 757.0L144.3 758.0M123.6 742.6L121.4 744.9L124.8 743.9L121.5 743.5M143.1 753.8L143.9 751.3L142.5 752.4L141.3 751.1M119.8 746.0L122.4 747.9M131.6 756.9L135.7 757.5L134.2 756.2L134.2 758.8M126.2 742.2L129.1 742.0L127.3 742.2M117.9 746.1L114.4 746.5L112.3 746.3M136.5 756.2L135.5 759.5L138.9 761.7L134.7 761.2M125.9 743.9L126.4 741.5L127.0 745.4L131.1 745.0M140.2 754.5L140.9 752.5L137.2 752.7L141.0 752.5M129.6 743.4L132.3 742.6L136.5 740.9L139.0 740.2M121.6 744.0L120.1 746.5M114.7 756.1L115.3 754.5L113.0 750.9" fill="none" stroke="#000" stroke-width="1" stroke-linecap="square"/>
<path d="M249.3 678.4 L251.1 680.7 L253.0 683.2 L253.4 686.8 L254.4 689.6 L253.5 693.7 L253.6 697.7 L252.7 700.4 L250.9 704.1 L247.7 708.9 L245.4 712.2 L242.9 715.3" fill="none" stroke="#000" stroke-width="1.3"/>
<path d="M240.5 717.7 L237.6 720.9" fill="none" stroke="#000" stroke-width="1.3"/>
<path d="M235.7 722.5 L233.3 725.7" fill="none" stroke="#000" stroke-width="1.3"/>
<path d="M228.5 728.1 L223.7 731.6" fill="none" stroke="#000" stroke-width="1.3"/>
<path d="M247.7 692.9 L249.3 695.3 L246.1 699.3 L242.9 701.7" fill="none" stroke="#000" stroke-width="1.3"/>
<path d="M258.1 660.8 L262.1 661.5 L266.1 662.4 L270.2 663.6 L274.9 664.0 L278.8 664.7 L283.7 665.3" fill="none" stroke="#000" stroke-width="1.3"/>
<path d="M227.7 664.3 L232.5 662.4 L235.7 661.1" fill="none" stroke="#000" stroke-width="1.3"/>
<path d="M242.1 664.8 L244.9 663.5 L247.7 662.4 L250.4 661.6" fill="none" stroke="#000" stroke-width="1.3"/>
<path d="M270.0 663.3 L274.0 663.5 L278.0 664.1 L281.7 664.9 L286.0 665.0" fill="none" stroke="#000" stroke-width="1.3"/>
<path d="M290.8 662.5 L294.8 661.9 L298.8 661.7 L302.9 661.2 L307.6 660.1" fill="none" stroke="#000" stroke-width="1.3"/>
<path d="M310.0 664.4 L314.0 663.5 L318.0 662.8 L320.9 662.9 L324.0 662.4 L328.1 661.8 L330.9 662.0 L335.7 661.2" fill="none" stroke="#000" stroke-width="1.3"/>
<path d="M345.3 660.9 L348.8 659.7 L352.1 659.2 L355.6 657.9 L359.7 656.9 L363.3 655.4 L366.1 655.0 L368.8 653.7 L372.5 652.9 L375.9 651.3 L379.1 649.5 L382.1 648.4 L385.0 647.4 L388.5 647.7 L391.7 646.8" fill="none" stroke="#000" stroke-width="1.3"/>
<path d="M398.1 648.4 L401.3 648.0 L404.2 648.2 L407.7 647.6 L411.0 647.3 L415.6 646.6 L418.9 646.8" fill="none" stroke="#000" stroke-width="1.3"/>
<path d="M420.0 648.0 L423.2 648.3 L426.0 649.2 L429.1 649.2 L433.2 649.2 L436.0 650.0 L439.3 651.0 L442.0 651.8 L445.8 652.8 L449.1 653.5 L452.0 654.8" fill="none" stroke="#000" stroke-width="1.3"/>
<path d="M509.7 704.9 L510.6 708.5 L511.6 712.4" fill="none" stroke="#000" stroke-width="1.3"/>
<path d="M532.1 718.8 L535.3 718.3 L538.2 718.4 L541.2 717.6 L544.9 717.2 L548.1 715.2 L550.6 714.1 L552.9 712.3 L556.1 710.8 L559.1 708.6 L561.8 706.2 L564.0 704.0 L567.0 702.7 L569.7 700.1" fill="none" stroke="#000" stroke-width="1.3"/>
<path d="M785.2 647.0 L784.9 650.3 L785.0 652.4 L783.8 655.8 L784.0 659.5 L784.4 662.2 L783.9 665.0 L784.9 668.7 L785.1 671.8 L786.5 675.4 L787.2 679.5 L788.3 682.8 L790.3 685.8 L790.8 689.5 L792.3 692.5 L793.7 696.1 L794.6 698.8 L793.7 703.7 L794.7 706.5 L792.5 709.7 L790.3 714.2 L790.2 718.4 L788.0 721.0 L787.8 724.6 L786.3 727.7 L786.3 730.9 L785.2 734.9" fill="none" stroke="#000" stroke-width="4.2" stroke-linejoin="round"/>
<path d="M785.2 647.0 L784.9 650.3 L785.0 652.4 L783.8 655.8 L784.0 659.5 L784.4 662.2 L783.9 665.0 L784.9 668.7 L785.1 671.8 L786.5 675.4 L787.2 679.5 L788.3 682.8 L790.3 685.8 L790.8 689.5 L792.3 692.5 L793.7 696.1 L794.6 698.8 L793.7 703.7 L794.7 706.5 L792.5 709.7 L790.3 714.2 L790.2 718.4 L788.0 721.0 L787.8 724.6 L786.3 727.7 L786.3 730.9 L785.2 734.9" fill="none" stroke="#004263" stroke-width="2.4" stroke-linejoin="round"/>
<path d="M783.9 731.0 L791.6 738.8 L796.8 746.6 L794.2 754.3 L790.3 756.9 L786.5 749.2 L783.9 740.0 Z" fill="#284262"/>
<path d="M808.0 570.0 L805.1 572.3 L803.0 574.0 L803.5 577.8 L802.9 580.0 L803.0 583.2 L804.2 586.2 L804.0 590.0 L803.4 592.9 L802.3 596.6 L802.0 600.0 L802.8 603.2 L801.8 605.6 L802.3 609.6 L803.7 612.5 L803.5 615.0 L803.5 618.6 L803.2 622.0 L801.6 625.3 L801.5 628.0 L801.9 631.4 L802.4 633.9 L802.4 636.9 L803.0 640.0 L802.3 642.4 L802.7 646.5 L802.6 649.3 L801.5 652.4 L801.0 655.0 L800.9 658.5 L801.9 661.0 L802.0 664.8 L803.0 668.0 L803.9 670.9 L805.7 673.8 L806.2 677.0 L808.0 680.0 Z" fill="#004263" stroke="#000" stroke-width="1"/>
<path d="M798.4 651.9L798.2 649.7L800.5 650.9M794.9 646.2L795.2 644.4L795.8 648.1M792.8 594.1L791.5 592.8L788.5 591.8L790.1 594.4M788.3 600.7L787.8 604.2M803.8 648.2L806.0 645.9M798.0 587.4L798.0 584.7M798.8 595.0L799.5 598.4L797.7 598.4L798.4 596.9M800.1 581.7L797.9 580.4L799.8 580.0L798.0 581.5M794.7 607.5L794.6 610.0M794.5 624.3L796.2 625.1L795.4 622.3M803.9 608.0L803.3 605.6L801.0 606.1M796.6 639.8L795.4 640.8M797.1 596.0L798.9 595.9L802.2 595.0M795.5 587.5L792.5 585.2M797.3 652.1L793.7 651.9M793.0 604.6L789.7 603.7L788.2 607.2M797.6 593.0L795.3 593.5L795.2 595.2M788.7 594.0L791.3 596.6L793.0 597.2M799.4 618.0L800.8 619.5L802.8 622.1M798.5 602.0L796.9 599.6L799.3 600.4L799.0 603.0M803.7 645.4L806.8 645.3M798.3 642.0L794.8 643.7M802.6 642.5L805.8 643.9M791.8 583.5L793.2 582.3L795.2 580.5M802.4 633.1L801.3 636.8M803.1 644.7L801.5 646.2L801.1 643.9M790.8 596.0L791.9 592.9L794.7 592.3L796.0 590.1M801.1 607.9L801.4 604.0L804.8 603.4L802.5 605.7M801.7 588.6L801.8 590.3M802.5 619.5L803.8 622.7M797.5 596.1L793.8 597.0L795.4 597.7M799.6 633.0L798.8 630.7L796.6 629.1M800.3 601.6L796.5 600.8L799.4 601.7M801.6 612.4L799.7 612.0L796.6 611.6M795.2 626.0L793.6 623.0L796.3 626.0M802.1 622.2L802.9 620.4L802.9 624.1L801.4 622.3M802.5 595.1L803.6 598.5L806.4 600.8M790.3 605.0L788.0 605.9L791.0 608.4L788.2 606.3M799.4 618.4L802.1 619.4M797.2 588.6L799.7 591.2M797.9 642.6L798.4 638.7M802.6 621.5L804.0 620.4M795.0 612.0L791.9 611.8L794.7 609.4M802.1 586.0L805.5 585.5L804.4 584.3M795.7 638.5L797.9 637.2M794.0 601.2L790.4 599.8M799.3 652.4L799.6 649.5M800.3 607.8L800.4 610.1L802.3 613.5L803.9 614.9M798.0 589.4L796.6 590.5M790.3 588.7L789.1 586.8L791.5 585.1L792.2 588.9M802.1 607.8L801.7 610.4L802.1 607.1L800.2 607.2M804.5 589.0L806.4 587.8L808.6 590.0L812.5 590.7M792.2 608.1L788.7 607.1L791.5 608.5M789.1 588.1L785.5 589.4L783.6 591.0M793.6 592.1L795.1 592.9L793.5 591.7L792.0 589.4M804.1 640.3L803.5 637.7L801.2 640.5M795.0 635.6L794.6 637.5L797.4 640.3M803.6 627.2L802.6 625.4L804.0 624.7M802.1 622.5L802.8 624.0L801.7 627.6L803.9 628.2M795.7 589.5L797.0 590.6M790.2 606.7L788.7 609.2M801.3 624.6L804.1 624.8L807.7 625.3L809.4 625.6M788.0 599.5L786.0 599.0M794.9 628.1L794.9 632.0M801.5 654.3L802.5 656.9L802.4 654.8M793.4 614.1L794.1 611.4M803.8 608.1L802.9 609.5L805.7 610.2L806.2 608.1M796.4 649.9L799.4 651.4L802.8 651.2M797.5 604.4L795.4 603.4L796.1 605.1M793.6 588.7L795.9 586.3M797.9 622.5L795.8 622.5L794.7 620.6L793.2 621.1M800.1 623.3L803.0 625.7L801.3 627.3M798.3 591.2L799.4 589.2M799.4 650.3L799.0 652.5M801.6 630.5L800.8 628.9L797.1 630.2M791.2 597.5L790.7 599.7L789.9 598.0M795.8 586.2L795.9 583.2M803.9 632.4L801.9 633.9L801.2 635.5L803.7 634.4M792.1 591.8L794.2 590.2M803.6 634.4L806.3 631.7L806.3 635.2L804.2 637.7M795.0 635.2L794.6 637.3L795.8 635.1M794.6 634.2L792.2 633.3L793.6 636.8L795.2 635.2M804.4 615.0L805.9 614.5M799.7 621.1L796.4 619.0M801.5 618.7L800.6 615.9L799.8 614.0M795.0 599.7L792.1 598.4M794.5 581.8L792.6 581.9M797.4 598.7L799.4 601.8L799.2 604.0M795.7 590.9L795.9 588.8L792.7 588.5M794.4 644.1L795.8 644.8L794.3 644.3M801.6 629.0L798.5 629.2L800.4 626.5M789.7 603.6L791.1 603.0L790.0 605.3L788.2 604.1M794.2 645.4L795.7 646.0M791.0 584.8L788.8 584.0L789.0 586.2M803.5 585.5L805.0 583.5L805.3 582.0" fill="none" stroke="#000" stroke-width="1.2"/>
<path d="M540.1 601.6 L544.9 606.4 L552.9 609.6 L556.1 604.8 L557.7 611.2 L563.3 610.4 L563.3 613.6 L551.3 616.0 L546.5 619.2 L541.7 616.0 L542.5 609.6 Z" fill="#1d3f66"/>
<path d="M199.6 8.7 L201.0 9.9 L203.8 10.4 L206.3 10.9 L207.4 12.1 L206.8 14.4 L205.4 16.4 L204.8 17.6 L203.9 19.2 L206.2 20.8 L208.0 23.5 L207.0 25.0 L204.1 26.2 L202.6 27.1 L203.2 28.9 L205.3 30.8 L205.0 30.6 L204.7 33.5 L204.4 36.4 L205.6 37.1 L207.9 36.9 L210.4 36.7 L212.5 36.7 L214.7 38.4 L214.3 40.3 L212.9 43.1 L212.7 44.9 L213.8 46.0 L216.3 46.4 L219.6 47.0 L217.6 49.6 L217.1 51.9 L217.3 53.8 L219.6 54.4 L222.7 52.6 L223.5 53.9 L224.4 56.3 L223.4 60.2 L226.0 59.5 L229.4 57.5 L229.5 59.6 L231.3 61.0 L229.4 62.8 L227.8 64.8 L228.4 66.5 L230.9 68.7 L232.5 69.9 L232.7 73.0 L229.1 73.1 L226.8 73.7 L227.7 76.0 L229.0 78.3 L229.7 80.2 L226.8 81.1 L224.4 81.5 L222.1 82.2 L223.3 84.8 L223.4 86.1 L223.1 88.6 L222.4 89.6 L220.6 90.4 L218.3 90.9 L216.7 91.9 L216.7 93.7 L218.3 96.6 L217.8 99.9 L215.5 99.2 L211.8 96.7 L210.3 98.1 L210.9 101.4 L211.0 104.6 L209.5 104.7 L206.9 104.0 L206.8 102.8 L205.6 100.9 L203.5 100.9 L200.5 102.5 L197.9 102.6 L199.0 99.1 L198.1 100.7 L197.4 102.6 L198.1 104.8 L200.2 106.2 L202.0 108.8 L200.8 110.1 L199.2 111.3 L197.2 112.6 L195.1 113.2 L195.6 115.3 L196.6 117.8 L196.4 118.4 L193.5 121.2 L192.9 123.2 L194.9 124.1 L196.1 126.4 L198.2 127.2 L196.5 129.8 L193.9 129.4 L191.6 129.8 L192.4 133.0 L192.7 135.9 L192.9 138.2 L191.3 136.8 L188.2 138.5 L187.9 140.6 L187.1 141.9 L187.3 143.7 L189.9 146.2 L191.0 148.3 L188.1 149.3 L186.6 151.9 L184.6 154.1 L187.5 155.2 L191.6 156.5 L190.4 160.4 L187.0 158.7 L184.0 158.3 L183.3 160.3 L184.1 164.2 L185.4 164.5 L183.7 165.9 L180.0 167.7 L178.3 168.7 L178.1 171.0 L180.3 173.5 L179.4 174.6 L178.0 175.8 L176.4 175.7 L174.2 176.5 L172.9 177.2 L172.7 179.4 L171.9 180.2 L171.5 182.0 L171.2 183.9 L169.5 185.8 L168.5 186.9 L168.8 188.6 L169.1 190.7 L168.2 192.2 L167.4 194.3 L165.4 193.4 L163.0 192.5 L160.5 193.8 L160.8 195.6 L161.0 197.8 L162.1 199.9 L161.7 200.8 L158.8 201.7 L157.1 203.2 L157.8 204.7 L159.2 207.3 L158.9 208.9 L157.0 209.6 L155.2 210.7 L154.2 212.6 L154.6 214.1 L155.5 216.0 L156.9 217.1 L158.1 218.7 L158.2 220.3 L157.5 222.2 L157.9 222.7 L157.2 224.0 L156.3 226.3 L155.8 227.7 L154.2 228.4 L151.8 229.2 L150.5 230.0 L150.4 232.0 L150.5 234.2 L150.9 236.4 L148.0 236.0 L144.3 235.3 L142.9 236.6 L144.6 239.8 L146.8 240.7 L146.6 242.6 L145.3 244.8 L143.8 247.3 L145.2 246.1 L143.8 247.3 L143.7 251.4 L142.8 252.7 L139.9 252.3 L137.9 250.1 L134.9 250.4 L134.5 252.7 L135.4 255.3 L135.1 257.7 L133.0 257.9 L129.4 256.8 L126.6 257.3 L125.8 259.5 L128.0 262.7 L127.8 264.6 L126.4 265.8 L125.7 267.0 L123.2 268.8 L124.0 270.7 L124.6 271.8 L125.8 273.8 L126.3 275.1 L125.5 277.1 L125.0 279.1 L125.1 280.4 L125.5 282.3 L125.6 284.1 L124.9 285.7 L124.0 287.2 L121.3 287.5 L121.6 287.1 L119.0 289.5 L119.0 291.9 L120.0 295.0 L117.8 295.3 L114.8 293.8 L112.4 294.0 L113.3 297.8 L114.1 300.4 L111.8 300.9 L108.5 299.6 L105.9 299.9 L104.6 301.8 L106.8 304.3 L107.6 307.5 L107.3 308.9 L104.8 308.8 L101.5 309.3 L100.4 310.4 L100.7 312.3 L102.1 314.8 L102.4 317.4 L100.1 318.2 L95.6 317.3 L95.0 318.4 L96.0 320.9 L95.5 323.5 L94.8 324.2 L93.1 325.6 L90.9 326.5 L90.6 328.6 L91.7 330.6 L91.0 331.9 L90.0 333.8 L88.4 334.5 L87.4 335.8 L86.6 337.6 L87.7 340.1 L87.9 341.6 L85.3 342.6 L83.6 343.2 L82.6 345.1 L82.8 346.9 L83.1 348.8 L82.0 350.6 L80.0 351.2 L78.1 352.2 L77.2 353.7 L77.1 356.0 L79.7 357.0 L80.7 358.1 L78.7 360.3 L77.5 362.7 L77.0 364.3 L78.0 365.5 L82.0 366.5 L81.9 367.9 L81.8 370.3 L79.5 371.1 L78.4 372.7 L79.8 375.1 L81.2 377.2 L81.2 378.8 L79.2 379.6 L76.8 381.2 L75.2 382.1 L77.7 384.0 L80.7 384.6 L80.4 386.5 L78.5 389.2 L77.8 391.7 L80.0 392.6 L83.2 392.3 L84.5 393.6 L83.3 395.7 L82.3 398.3 L82.9 398.3 L84.7 400.7 L86.0 402.7 L83.4 404.1 L81.0 404.9 L79.0 406.4 L81.1 408.6 L83.0 411.1 L80.1 411.6 L78.1 413.8 L77.4 415.5 L78.2 416.5 L81.4 418.3 L81.7 419.5 L81.8 421.4 L80.8 422.5 L80.1 424.2 L79.8 426.1 L80.9 427.9 L82.4 429.4 L83.0 430.4 L83.6 432.1 L83.8 434.1 L84.6 435.8 L85.3 437.6 L86.2 438.3 L86.9 440.3 L87.3 441.9 L85.8 443.3 L85.0 445.1 L84.9 446.6 L85.0 448.1 L86.1 449.5 L85.9 451.4 L84.4 452.5 L83.3 455.4 L83.8 457.4 L87.3 457.0 L90.4 457.2 L91.3 458.3 L91.9 459.6 L90.8 462.1 L90.3 464.6 L90.3 466.7 L92.2 467.4 L94.9 467.3 L97.9 467.6 L97.6 469.8 L96.2 472.0 L96.4 474.2 L99.3 474.7 L100.2 476.5 L99.0 477.7 L97.7 479.0 L95.7 480.1 L94.2 480.9 L95.0 483.2 L95.2 485.1 L94.1 486.7 L91.8 486.9 L90.9 488.3 L90.3 490.0 L91.3 492.4 L90.4 493.9 L88.5 494.6 L86.3 495.5 L85.4 496.7 L85.6 498.1 L85.7 500.0 L84.9 502.2 L82.8 502.7 L80.8 503.0 L79.8 504.6 L80.4 506.5 L80.2 508.6 L79.6 509.4 L76.8 510.1 L74.9 511.2 L75.1 512.9 L74.4 514.6 L75.3 517.3 L73.9 518.8 L71.4 519.2 L68.4 518.9 L65.9 519.9 L66.7 522.5 L69.4 525.2 L68.9 527.2 L66.2 527.6 L62.1 527.6 L61.4 528.9 L62.5 531.7 L63.9 534.7 L63.9 536.8 L61.2 536.9 L57.2 536.8 L55.9 537.5 L56.9 540.6 L58.1 543.4 L58.5 545.8 L55.6 545.7 L52.2 546.3 L51.0 548.3 L53.0 549.6 L55.1 551.5 L55.5 553.1 L55.4 555.2 L53.6 556.6 L51.3 558.6 L52.3 560.2 L54.9 561.7 L55.9 564.0 L56.2 565.9 L54.5 567.6 L51.5 568.2 L48.8 568.6 L49.3 571.0 L52.4 573.6 L52.9 575.7 L50.7 577.4 L47.4 578.0 L45.0 578.8 L47.3 581.1 L50.4 583.8 L48.5 585.1 L46.7 585.9 L44.1 587.2 L43.2 588.6 L44.7 590.4 L45.8 593.1 L45.0 594.2" fill="none" stroke="#000" stroke-width="1.1" stroke-linejoin="round"/>
<path d="M45.0 594.2 L185.5 594.2" fill="none" stroke="#000" stroke-width="1.1" stroke-linejoin="round"/>
<path d="M185.5 594.2 L184.4 596.0 L182.4 599.1 L181.9 602.7 L180.1 605.0 L180.3 607.2 L178.8 610.1 L178.3 614.0 L179.0 617.0 L179.8 619.4 L181.9 623.0 L181.6 626.1 L180.2 629.2 L180.1 632.0 L183.0 633.8 L185.2 637.8 L186.6 639.5 L189.1 642.9 L190.6 645.5 L189.5 648.1 L190.9 651.9 L193.4 655.7 L194.5 659.1 L195.7 662.5 L195.8 666.0 L196.3 668.1" fill="none" stroke="#000" stroke-width="1.1" stroke-linejoin="round"/>
<path d="M5.4 105.2 L154.9 105.2" fill="none" stroke="#000" stroke-width="1.1" stroke-linejoin="round"/>
<path d="M154.9 105.2 L156.8 108.4 L159.7 110.8 L161.0 114.6 L159.1 116.3 L157.5 118.9 L156.2 122.6 L156.4 125.6 L153.8 127.7 L153.1 130.3 L151.3 133.3 L148.2 136.6 L147.1 137.7 L143.8 140.2 L143.3 142.8 L140.4 147.1 L138.0 148.8" fill="none" stroke="#000" stroke-width="1.1" stroke-linejoin="round"/>
<path d="M138.0 148.8 L187.3 149.5" fill="none" stroke="#000" stroke-width="1.1" stroke-linejoin="round"/>
<path d="M5.4 415.1 L77.4 415.1" fill="none" stroke="#000" stroke-width="1.1" stroke-linejoin="round"/>
<path d="M208.9 104.5 L311.6 104.5 L309.1 88.3 L324.2 91.9 L400.0 90.8 L544.1 94.4 L634.1 96.5 L724.2 95.1 L787.2 94.4 L809.9 98.0" fill="none" stroke="#000" stroke-width="1.1" stroke-linejoin="round"/>
<path d="M216.1 57.6 L218.8 55.4 L221.7 54.2 L224.7 52.4 L227.0 50.8 L229.9 50.7 L230.8 48.7 L234.1 46.8 L236.3 45.1 L240.3 42.5 L241.7 40.6 L245.0 39.6 L247.2 40.4 L250.5 40.4 L254.6 41.5 L257.0 42.4 L261.1 43.0 L263.8 45.1 L266.6 45.0 L269.0 46.8 L270.3 49.8 L272.7 51.6 L275.6 54.0 L278.6 52.4 L279.9 49.4 L282.8 47.6 L280.8 43.8 L279.7 40.1 L277.4 36.8 L276.7 34.2 L278.6 31.8 L280.9 29.0 L284.1 27.2 L285.7 24.9 L288.2 21.6 L290.5 20.9 L295.2 19.6 L297.9 18.4 L301.9 17.4 L304.8 17.5 L308.0 16.2 L308.1 13.5 L306.1 8.3 L306.2 5.4" fill="none" stroke="#000" stroke-width="1.1" stroke-linejoin="round"/>
<path d="M635.9 96.8 L637.9 95.3 L640.8 94.7 L644.4 91.9 L646.3 92.0 L650.0 90.2 L652.2 89.6 L656.1 88.1 L659.5 87.3 L661.7 86.0 L664.9 85.0 L667.2 83.6 L670.6 83.2 L674.3 82.2 L676.8 81.8 L678.2 79.3 L680.0 75.0 L683.6 74.1 L687.1 73.3 L689.5 71.8 L693.5 70.0 L694.3 66.2 L697.0 63.0 L698.5 60.0 L702.6 58.2 L706.8 57.6 L706.7 53.3 L707.6 49.2 L710.5 48.1 L712.9 45.9 L716.5 45.2 L718.3 43.2 L720.1 40.9 L723.5 40.0 L725.5 39.7 L729.7 36.7 L732.2 36.0 L735.0 34.9 L737.1 33.0 L740.2 32.6 L742.5 30.2 L746.5 27.3 L748.9 26.6 L751.9 23.4 L753.4 21.2 L757.3 19.7 L759.8 17.6 L761.6 14.9 L763.6 13.4" fill="none" stroke="#000" stroke-width="1.1" stroke-linejoin="round"/>
<path d="M748.5 6.7 L751.0 8.3 L753.6 10.9 L757.2 11.2 L760.2 13.5 L763.6 13.4 L762.7 19.2 L764.0 22.6 L766.9 26.7 L769.5 28.6 L770.7 32.9 L773.6 35.0 L777.1 36.3 L778.0 39.3 L780.8 40.2 L783.6 41.7 L787.2 41.5 L791.1 41.8 L794.0 41.1 L797.0 40.0 L800.4 38.4 L802.4 35.6 L805.3 34.2" fill="none" stroke="#000" stroke-width="1.1" stroke-linejoin="round"/>
<path d="M145.9 237.8 L299.0 237.8 L409.9 238.5 L400.0 237.8 L587.3 238.8 L661.2 237.8 L677.4 236.0 L717.0 225.1 L735.0 220.5 L809.9 222.6" fill="none" stroke="#000" stroke-width="1.1" stroke-linejoin="round"/>
<path d="M588.4 238.8 L589.5 234.7 L589.1 232.3 L589.6 228.9 L589.7 225.2 L589.9 222.4 L588.4 219.1 L589.1 216.1 L592.7 214.6 L595.5 214.0 L598.2 213.7 L601.8 213.3 L606.2 213.0 L608.9 212.5 L611.1 210.5 L612.6 207.7 L613.4 204.2 L615.5 201.1 L616.1 198.1 L618.3 197.1 L622.0 195.3 L624.0 194.3 L628.1 194.4 L630.9 192.6 L632.5 190.7 L636.6 190.6 L639.1 188.8 L641.3 187.8 L645.0 187.3 L647.1 186.1 L650.3 184.5 L653.5 183.1 L657.0 182.1 L658.7 181.0 L663.0 179.3 L665.0 178.1 L668.6 175.3 L671.3 175.0 L673.8 172.9 L676.7 170.7 L678.6 167.2 L681.0 163.9 L683.1 162.7 L686.3 161.4 L690.8 159.1 L692.1 157.0 L696.0 155.7 L699.0 154.9 L701.6 153.0 L703.3 150.9 L704.8 148.3 L706.7 146.3 L709.8 144.1 L712.8 145.2 L715.0 148.7 L717.0 149.5 L719.5 147.5 L722.3 147.3 L724.8 145.7 L728.1 144.2 L732.2 143.0 L733.7 140.9 L736.8 140.2 L739.6 137.3 L742.8 135.7 L745.8 135.1 L748.2 134.6 L751.4 132.8 L755.6 132.1 L758.3 132.1 L760.7 131.1 L763.6 130.0 L765.5 127.4 L767.0 123.5 L770.7 121.0 L773.6 119.4 L778.1 119.0 L782.0 118.5 L780.3 113.5 L782.0 109.4 L781.9 107.8 L782.8 103.5 L783.3 101.1 L786.4 97.9 L787.0 94.8" fill="none" stroke="#000" stroke-width="1.1" stroke-linejoin="round"/>
<path d="M299.0 237.8 L308.0 248.6 L304.4 290.0 L303.7 290.8 L288.2 424.1 L279.2 514.1 L281.0 570.0 L281.0 560.0 L285.3 650.1" fill="none" stroke="#000" stroke-width="1.1" stroke-linejoin="round"/>
<path d="M491.9 239.6 L497.3 273.8 L500.9 290.0 L500.9 290.8 L524.3 427.7" fill="none" stroke="#000" stroke-width="1.1" stroke-linejoin="round"/>
<path d="M524.3 427.7 L524.5 431.4 L525.6 433.8 L528.0 436.7 L528.0 438.7 L529.9 442.8 L530.8 444.8 L531.3 447.3 L533.0 450.2 L533.6 453.4 L534.8 455.1 L535.1 459.2 L536.8 462.3 L536.8 464.0 L538.7 467.3 L538.7 470.8 L538.1 473.9 L538.7 476.3 L541.2 478.6 L544.1 481.7 L542.5 483.6 L540.5 486.8 L537.1 489.2 L535.1 492.5 L534.4 496.2 L533.3 498.6 L533.2 501.1 L531.9 504.9 L531.9 507.5 L531.5 510.5 L531.9 512.8 L532.6 517.5 L531.8 520.4 L532.9 522.5 L532.3 525.2 L532.9 529.0 L533.3 532.2 L532.7 535.2 L532.4 537.6 L531.2 541.5 L531.2 543.9 L530.3 548.6 L530.8 551.1 L529.7 553.8 L529.8 556.9 L530.8 560.4 L531.0 562.6 L531.5 566.1 L531.5 570.0 L530.5 566.7 L531.2 563.1 L529.7 560.0 L531.0 562.5 L532.6 565.7 L532.9 569.6 L534.2 572.2 L535.1 574.5 L536.8 578.6 L536.9 581.6 L538.0 584.1 L538.6 587.9 L539.4 589.9 L539.9 594.4 L540.8 596.7 L542.3 599.6 L543.6 602.4 L544.7 606.2 L545.9 608.9 L545.7 612.6 L546.3 616.0 L547.7 619.4" fill="none" stroke="#000" stroke-width="1.1" stroke-linejoin="round"/>
<path d="M536.9 594.2 L400.0 594.2 L409.9 594.2 L344.0 594.2" fill="none" stroke="#000" stroke-width="1.1" stroke-linejoin="round"/>
<path d="M344.0 594.2 L342.2 597.6 L341.3 600.6 L342.3 603.3 L340.4 606.8 L343.2 609.5 L344.8 610.7 L346.3 614.1 L347.8 616.2 L350.4 619.1 L351.2 621.2 L353.9 624.3 L355.8 627.3 L358.2 629.5 L360.2 632.0 L359.1 635.8 L358.6 639.4 L358.7 643.4 L358.4 646.5" fill="none" stroke="#000" stroke-width="1.1" stroke-linejoin="round"/>
<path d="M547.7 619.8 L652.2 624.8 L742.2 630.2 L730.0 631.7 L741.8 631.7" fill="none" stroke="#000" stroke-width="1.1" stroke-linejoin="round"/>
<path d="M741.8 631.7 L741.2 636.0 L742.7 637.7 L742.5 642.6 L741.8 645.6 L745.1 647.6 L747.7 651.5 L751.3 650.8 L754.2 650.6 L756.6 650.0 L758.6 646.8 L759.5 642.7 L758.7 639.1 L759.4 635.6 L758.0 630.8 L758.3 626.1 L757.3 623.6 L756.6 619.0 L758.2 615.7 L761.0 614.3 L762.5 611.7 L767.4 611.2 L769.5 611.9 L774.3 611.7 L778.4 613.4 L780.4 614.2 L784.6 616.0 L784.6 618.8 L786.7 621.9 L786.9 624.5 L787.6 628.0 L787.0 631.9 L786.2 633.5 L786.2 637.6 L784.3 640.0 L784.6 642.7 L784.6 647.0" fill="none" stroke="#000" stroke-width="1.1" stroke-linejoin="round"/>
<path d="M677.4 236.0 L674.5 238.6 L671.9 241.6 L669.7 243.2 L668.1 246.6 L664.8 248.6 L663.9 252.5 L661.0 255.5 L660.1 259.4 L660.7 263.1 L661.4 266.3 L662.9 268.4 L664.8 272.0 L667.7 274.4 L670.2 276.3 L673.1 278.5 L674.8 280.0 L677.3 282.6 L681.0 284.6 L683.5 285.1 L686.3 287.6 L688.9 288.6 L693.3 288.3 L695.4 290.0 L699.0 290.8 L701.7 292.8 L703.4 295.2 L704.8 298.5 L707.0 301.8 L709.6 302.7 L711.5 305.4 L713.4 308.8 L714.0 311.6 L715.4 314.9 L718.0 318.4 L718.3 321.5 L718.7 324.3 L720.6 326.8 L723.8 330.0 L725.1 331.5 L727.1 333.5 L730.6 335.1 L732.6 337.5 L734.2 340.4 L735.5 342.6 L738.6 344.8 L739.7 348.1 L743.5 349.8 L745.2 352.5 L746.0 353.6 L748.4 356.7 L750.6 359.6 L753.1 361.8 L753.6 363.7 L756.6 366.5 L758.4 369.8 L758.7 372.0 L761.2 373.9 L763.5 376.3 L763.8 379.4 L766.2 381.2 L767.4 384.5 L768.9 386.9 L770.9 389.3 L772.5 393.1 L772.6 395.6 L774.6 398.9 L777.8 400.7 L779.3 401.8 L781.9 404.3 L785.8 405.3 L788.8 408.0 L791.5 409.2 L792.9 411.6 L796.3 413.3 L798.3 416.2 L798.5 419.4 L798.9 421.7 L800.8 425.8 L802.2 428.6 L803.5 431.3 L803.9 435.1 L804.8 437.6 L805.3 442.1" fill="none" stroke="#000" stroke-width="1.1" stroke-linejoin="round"/>
<circle cx="406.8" cy="407" r="159.8" fill="none" stroke="#dad6d4" stroke-width="1"/>
<circle cx="406.8" cy="407" r="279.8" fill="none" stroke="#dad6d4" stroke-width="1"/>
<circle cx="406.8" cy="407" r="399.3" fill="none" stroke="#dad6d4" stroke-width="1"/>
<circle cx="406.8" cy="407" r="519" fill="none" stroke="#dad6d4" stroke-width="1"/>
<circle cx="407" cy="407" r="39.5" fill="none" stroke="#f00000" stroke-width="1.2"/>
<rect x="398.5" y="363" width="15.0" height="9" fill="#5c4f4a"/>
<text x="406" y="371" font-size="9" fill="#ffff96" text-anchor="middle" font-family="'DejaVu Sans','Liberation Sans',sans-serif" textLength="12.0" lengthAdjust="spacingAndGlyphs">31</text>
<rect x="395.2" y="243" width="21.5" height="9" fill="#5c4f4a"/>
<text x="406" y="251" font-size="9" fill="#ffff96" text-anchor="middle" font-family="'DejaVu Sans','Liberation Sans',sans-serif" textLength="18.5" lengthAdjust="spacingAndGlyphs">125</text>
<rect x="395.2" y="123" width="21.5" height="9" fill="#5c4f4a"/>
<text x="406" y="131" font-size="9" fill="#ffff96" text-anchor="middle" font-family="'DejaVu Sans','Liberation Sans',sans-serif" textLength="18.5" lengthAdjust="spacingAndGlyphs">219</text>
<rect x="395.2" y="3" width="21.5" height="9" fill="#5c4f4a"/>
<text x="406" y="11" font-size="9" fill="#ffff96" text-anchor="middle" font-family="'DejaVu Sans','Liberation Sans',sans-serif" textLength="18.5" lengthAdjust="spacingAndGlyphs">313</text>
<g fill="none" stroke="#f0640a" stroke-width="1.25" shape-rendering="geometricPrecision"><circle class="sh" cx="667.5" cy="67.5" r="4"/><circle cx="667.5" cy="67.5" r="4"/><path d="M665.0 67.5H670.0M667.5 65.0V70.0" shape-rendering="crispEdges" stroke-width="1"/><circle class="sh" cx="603.5" cy="136.5" r="4"/><circle cx="603.5" cy="136.5" r="4"/><path d="M601.0 136.5H606.0M603.5 134.0V139.0" shape-rendering="crispEdges" stroke-width="1"/><circle class="sh" cx="608.5" cy="136.5" r="4"/><circle cx="608.5" cy="136.5" r="4"/><path d="M606.0 136.5H611.0M608.5 134.0V139.0" shape-rendering="crispEdges" stroke-width="1"/><circle class="sh" cx="615.5" cy="150.5" r="4"/><circle cx="615.5" cy="150.5" r="4"/><path d="M613.0 150.5H618.0M615.5 148.0V153.0" shape-rendering="crispEdges" stroke-width="1"/><circle class="sh" cx="757.5" cy="246.5" r="4"/><circle cx="757.5" cy="246.5" r="4"/><path d="M755.0 246.5H760.0" shape-rendering="crispEdges" stroke-width="1"/><path d="M502.0 662.5H509.0M505.5 659.0V666.0" shape-rendering="crispEdges" stroke-width="1"/><circle class="sh" cx="530.5" cy="718.5" r="4"/><circle cx="530.5" cy="718.5" r="4"/><path d="M528.0 718.5H533.0" shape-rendering="crispEdges" stroke-width="1"/><circle class="sh" cx="523.5" cy="724.5" r="4"/><circle cx="523.5" cy="724.5" r="4"/><path d="M521.0 724.5H526.0M523.5 722.0V727.0" shape-rendering="crispEdges" stroke-width="1"/><circle class="sh" cx="439.5" cy="768.5" r="4"/><circle cx="439.5" cy="768.5" r="4"/><path d="M437.0 768.5H442.0M439.5 766.0V771.0" shape-rendering="crispEdges" stroke-width="1"/><circle class="sh" cx="450.5" cy="790.5" r="4"/><circle cx="450.5" cy="790.5" r="4"/><path d="M448.0 790.5H453.0M450.5 788.0V793.0" shape-rendering="crispEdges" stroke-width="1"/><path d="M525.0 776.5H532.0" shape-rendering="crispEdges" stroke-width="1"/><circle class="sh" cx="631.5" cy="690.5" r="4"/><circle cx="631.5" cy="690.5" r="4"/><path d="M629.0 690.5H634.0" shape-rendering="crispEdges" stroke-width="1"/><circle class="sh" cx="609.5" cy="703.5" r="4"/><circle cx="609.5" cy="703.5" r="4"/><path d="M607.0 703.5H612.0" shape-rendering="crispEdges" stroke-width="1"/><circle class="sh" cx="676.5" cy="733.5" r="4"/><circle cx="676.5" cy="733.5" r="4"/><path d="M674.0 733.5H679.0" shape-rendering="crispEdges" stroke-width="1"/><circle class="sh" cx="645.5" cy="769.5" r="4"/><circle cx="645.5" cy="769.5" r="4"/><path d="M643.0 769.5H648.0" shape-rendering="crispEdges" stroke-width="1"/><circle class="sh" cx="666.5" cy="764.5" r="4"/><circle cx="666.5" cy="764.5" r="4"/><path d="M664.0 764.5H669.0M666.5 762.0V767.0" shape-rendering="crispEdges" stroke-width="1"/><circle class="sh" cx="667.5" cy="769.5" r="4"/><circle cx="667.5" cy="769.5" r="4"/><path d="M665.0 769.5H670.0" shape-rendering="crispEdges" stroke-width="1"/><circle class="sh" cx="671.5" cy="770.5" r="4"/><circle cx="671.5" cy="770.5" r="4"/><path d="M669.0 770.5H674.0M671.5 768.0V773.0" shape-rendering="crispEdges" stroke-width="1"/><circle class="sh" cx="615.5" cy="784.5" r="4"/><circle cx="615.5" cy="784.5" r="4"/><path d="M613.0 784.5H618.0M615.5 782.0V787.0" shape-rendering="crispEdges" stroke-width="1"/><circle class="sh" cx="635.5" cy="781.5" r="4"/><circle cx="635.5" cy="781.5" r="4"/><path d="M633.0 781.5H638.0" shape-rendering="crispEdges" stroke-width="1"/><circle class="sh" cx="586.5" cy="796.5" r="4"/><circle cx="586.5" cy="796.5" r="4"/><path d="M584.0 796.5H589.0" shape-rendering="crispEdges" stroke-width="1"/><circle class="sh" cx="740.5" cy="704.5" r="4"/><circle cx="740.5" cy="704.5" r="4"/><path d="M738.0 704.5H743.0M740.5 702.0V707.0" shape-rendering="crispEdges" stroke-width="1"/><circle class="sh" cx="720.5" cy="707.5" r="4"/><circle cx="720.5" cy="707.5" r="4"/><path d="M718.0 707.5H723.0" shape-rendering="crispEdges" stroke-width="1"/><circle class="sh" cx="710.5" cy="718.5" r="4"/><circle cx="710.5" cy="718.5" r="4"/><path d="M708.0 718.5H713.0M710.5 716.0V721.0" shape-rendering="crispEdges" stroke-width="1"/></g>
<g fill="none" stroke="#ff8c0a" stroke-width="1.25" shape-rendering="geometricPrecision"><circle class="sh" cx="739.5" cy="28.5" r="4"/><circle cx="739.5" cy="28.5" r="4"/><path d="M737.0 28.5H742.0M739.5 26.0V31.0" shape-rendering="crispEdges" stroke-width="1"/><circle class="sh" cx="733.5" cy="45.5" r="4"/><circle cx="733.5" cy="45.5" r="4"/><path d="M731.0 45.5H736.0" shape-rendering="crispEdges" stroke-width="1"/><circle class="sh" cx="706.5" cy="60.5" r="4"/><circle cx="706.5" cy="60.5" r="4"/><path d="M704.0 60.5H709.0" shape-rendering="crispEdges" stroke-width="1"/><circle class="sh" cx="773.5" cy="201.5" r="4"/><circle cx="773.5" cy="201.5" r="4"/><path d="M771.0 201.5H776.0M773.5 199.0V204.0" shape-rendering="crispEdges" stroke-width="1"/><circle class="sh" cx="786.5" cy="321.5" r="4"/><circle cx="786.5" cy="321.5" r="4"/><path d="M784.0 321.5H789.0M786.5 319.0V324.0" shape-rendering="crispEdges" stroke-width="1"/><circle class="sh" cx="788.5" cy="347.5" r="4"/><circle cx="788.5" cy="347.5" r="4"/><path d="M786.0 347.5H791.0M788.5 345.0V350.0" shape-rendering="crispEdges" stroke-width="1"/><circle class="sh" cx="781.5" cy="540.5" r="4"/><circle cx="781.5" cy="540.5" r="4"/><path d="M779.0 540.5H784.0M781.5 538.0V543.0" shape-rendering="crispEdges" stroke-width="1"/><path d="M504.0 630.5H511.0" shape-rendering="crispEdges" stroke-width="1"/><circle class="sh" cx="646.5" cy="666.5" r="4"/><circle cx="646.5" cy="666.5" r="4"/><path d="M644.0 666.5H649.0M646.5 664.0V669.0" shape-rendering="crispEdges" stroke-width="1"/><circle class="sh" cx="635.5" cy="694.5" r="4"/><circle cx="635.5" cy="694.5" r="4"/><path d="M633.0 694.5H638.0M635.5 692.0V697.0" shape-rendering="crispEdges" stroke-width="1"/><circle class="sh" cx="637.5" cy="697.5" r="4"/><circle cx="637.5" cy="697.5" r="4"/><path d="M635.0 697.5H640.0M637.5 695.0V700.0" shape-rendering="crispEdges" stroke-width="1"/><circle class="sh" cx="642.5" cy="695.5" r="4"/><circle cx="642.5" cy="695.5" r="4"/><path d="M640.0 695.5H645.0M642.5 693.0V698.0" shape-rendering="crispEdges" stroke-width="1"/><circle class="sh" cx="647.5" cy="693.5" r="4"/><circle cx="647.5" cy="693.5" r="4"/><path d="M645.0 693.5H650.0M647.5 691.0V696.0" shape-rendering="crispEdges" stroke-width="1"/><circle class="sh" cx="648.5" cy="697.5" r="4"/><circle cx="648.5" cy="697.5" r="4"/><path d="M646.0 697.5H651.0M648.5 695.0V700.0" shape-rendering="crispEdges" stroke-width="1"/><circle class="sh" cx="608.5" cy="708.5" r="4"/><circle cx="608.5" cy="708.5" r="4"/><path d="M606.0 708.5H611.0M608.5 706.0V711.0" shape-rendering="crispEdges" stroke-width="1"/><circle class="sh" cx="645.5" cy="711.5" r="4"/><circle cx="645.5" cy="711.5" r="4"/><path d="M643.0 711.5H648.0M645.5 709.0V714.0" shape-rendering="crispEdges" stroke-width="1"/><circle class="sh" cx="595.5" cy="732.5" r="4"/><circle cx="595.5" cy="732.5" r="4"/><path d="M593.0 732.5H598.0M595.5 730.0V735.0" shape-rendering="crispEdges" stroke-width="1"/><circle class="sh" cx="655.5" cy="748.5" r="4"/><circle cx="655.5" cy="748.5" r="4"/><path d="M653.0 748.5H658.0M655.5 746.0V751.0" shape-rendering="crispEdges" stroke-width="1"/><circle class="sh" cx="660.5" cy="747.5" r="4"/><circle cx="660.5" cy="747.5" r="4"/><path d="M658.0 747.5H663.0M660.5 745.0V750.0" shape-rendering="crispEdges" stroke-width="1"/><circle class="sh" cx="679.5" cy="757.5" r="4"/><circle cx="679.5" cy="757.5" r="4"/><path d="M677.0 757.5H682.0M679.5 755.0V760.0" shape-rendering="crispEdges" stroke-width="1"/><circle class="sh" cx="653.5" cy="763.5" r="4"/><circle cx="653.5" cy="763.5" r="4"/><path d="M651.0 763.5H656.0M653.5 761.0V766.0" shape-rendering="crispEdges" stroke-width="1"/><circle class="sh" cx="647.5" cy="765.5" r="4"/><circle cx="647.5" cy="765.5" r="4"/><path d="M645.0 765.5H650.0M647.5 763.0V768.0" shape-rendering="crispEdges" stroke-width="1"/><circle class="sh" cx="669.5" cy="767.5" r="4"/><circle cx="669.5" cy="767.5" r="4"/><path d="M667.0 767.5H672.0M669.5 765.0V770.0" shape-rendering="crispEdges" stroke-width="1"/><circle class="sh" cx="677.5" cy="763.5" r="4"/><circle cx="677.5" cy="763.5" r="4"/><path d="M675.0 763.5H680.0M677.5 761.0V766.0" shape-rendering="crispEdges" stroke-width="1"/><circle class="sh" cx="636.5" cy="786.5" r="4"/><circle cx="636.5" cy="786.5" r="4"/><path d="M634.0 786.5H639.0M636.5 784.0V789.0" shape-rendering="crispEdges" stroke-width="1"/><circle class="sh" cx="603.5" cy="789.5" r="4"/><circle cx="603.5" cy="789.5" r="4"/><path d="M601.0 789.5H606.0M603.5 787.0V792.0" shape-rendering="crispEdges" stroke-width="1"/><circle class="sh" cx="605.5" cy="791.5" r="4"/><circle cx="605.5" cy="791.5" r="4"/><path d="M603.0 791.5H608.0M605.5 789.0V794.0" shape-rendering="crispEdges" stroke-width="1"/><circle class="sh" cx="636.5" cy="794.5" r="4"/><circle cx="636.5" cy="794.5" r="4"/><path d="M634.0 794.5H639.0" shape-rendering="crispEdges" stroke-width="1"/><circle class="sh" cx="615.5" cy="803.5" r="4"/><circle cx="615.5" cy="803.5" r="4"/><path d="M613.0 803.5H618.0M615.5 801.0V806.0" shape-rendering="crispEdges" stroke-width="1"/><circle class="sh" cx="681.5" cy="612.5" r="4"/><circle cx="681.5" cy="612.5" r="4"/><path d="M679.0 612.5H684.0M681.5 610.0V615.0" shape-rendering="crispEdges" stroke-width="1"/><circle class="sh" cx="745.5" cy="622.5" r="4"/><circle cx="745.5" cy="622.5" r="4"/><path d="M743.0 622.5H748.0M745.5 620.0V625.0" shape-rendering="crispEdges" stroke-width="1"/><circle class="sh" cx="766.5" cy="624.5" r="4"/><circle cx="766.5" cy="624.5" r="4"/><path d="M764.0 624.5H769.0M766.5 622.0V627.0" shape-rendering="crispEdges" stroke-width="1"/><circle class="sh" cx="752.5" cy="642.5" r="4"/><circle cx="752.5" cy="642.5" r="4"/><path d="M750.0 642.5H755.0M752.5 640.0V645.0" shape-rendering="crispEdges" stroke-width="1"/><circle class="sh" cx="698.5" cy="634.5" r="4"/><circle cx="698.5" cy="634.5" r="4"/><path d="M696.0 634.5H701.0M698.5 632.0V637.0" shape-rendering="crispEdges" stroke-width="1"/><circle class="sh" cx="702.5" cy="679.5" r="4"/><circle cx="702.5" cy="679.5" r="4"/><path d="M700.0 679.5H705.0" shape-rendering="crispEdges" stroke-width="1"/><circle class="sh" cx="709.5" cy="678.5" r="4"/><circle cx="709.5" cy="678.5" r="4"/><path d="M707.0 678.5H712.0" shape-rendering="crispEdges" stroke-width="1"/><circle class="sh" cx="762.5" cy="687.5" r="4"/><circle cx="762.5" cy="687.5" r="4"/><path d="M760.0 687.5H765.0M762.5 685.0V690.0" shape-rendering="crispEdges" stroke-width="1"/><circle class="sh" cx="766.5" cy="693.5" r="4"/><circle cx="766.5" cy="693.5" r="4"/><path d="M764.0 693.5H769.0" shape-rendering="crispEdges" stroke-width="1"/><circle class="sh" cx="764.5" cy="702.5" r="4"/><circle cx="764.5" cy="702.5" r="4"/><path d="M762.0 702.5H767.0" shape-rendering="crispEdges" stroke-width="1"/><circle class="sh" cx="713.5" cy="712.5" r="4"/><circle cx="713.5" cy="712.5" r="4"/><path d="M711.0 712.5H716.0" shape-rendering="crispEdges" stroke-width="1"/><circle class="sh" cx="706.5" cy="716.5" r="4"/><circle cx="706.5" cy="716.5" r="4"/><path d="M704.0 716.5H709.0M706.5 714.0V719.0" shape-rendering="crispEdges" stroke-width="1"/><circle class="sh" cx="746.5" cy="719.5" r="4"/><circle cx="746.5" cy="719.5" r="4"/><path d="M744.0 719.5H749.0" shape-rendering="crispEdges" stroke-width="1"/><circle class="sh" cx="728.5" cy="731.5" r="4"/><circle cx="728.5" cy="731.5" r="4"/><path d="M726.0 731.5H731.0M728.5 729.0V734.0" shape-rendering="crispEdges" stroke-width="1"/><circle class="sh" cx="701.5" cy="735.5" r="4"/><circle cx="701.5" cy="735.5" r="4"/><path d="M699.0 735.5H704.0" shape-rendering="crispEdges" stroke-width="1"/><circle class="sh" cx="692.5" cy="736.5" r="4"/><circle cx="692.5" cy="736.5" r="4"/><path d="M690.0 736.5H695.0" shape-rendering="crispEdges" stroke-width="1"/><circle class="sh" cx="679.5" cy="756.5" r="4"/><circle cx="679.5" cy="756.5" r="4"/><path d="M677.0 756.5H682.0M679.5 754.0V759.0" shape-rendering="crispEdges" stroke-width="1"/><circle class="sh" cx="677.5" cy="762.5" r="4"/><circle cx="677.5" cy="762.5" r="4"/><path d="M675.0 762.5H680.0M677.5 760.0V765.0" shape-rendering="crispEdges" stroke-width="1"/><circle class="sh" cx="672.5" cy="768.5" r="4"/><circle cx="672.5" cy="768.5" r="4"/><path d="M670.0 768.5H675.0M672.5 766.0V771.0" shape-rendering="crispEdges" stroke-width="1"/></g>
<g fill="none" stroke="#ffaa00" stroke-width="1.25" shape-rendering="geometricPrecision"><circle class="sh" cx="419.5" cy="99.5" r="4"/><circle cx="419.5" cy="99.5" r="4"/><path d="M417.0 99.5H422.0M419.5 97.0V102.0" shape-rendering="crispEdges" stroke-width="1"/><circle class="sh" cx="422.5" cy="100.5" r="4"/><circle cx="422.5" cy="100.5" r="4"/><path d="M420.0 100.5H425.0M422.5 98.0V103.0" shape-rendering="crispEdges" stroke-width="1"/><circle class="sh" cx="385.5" cy="121.5" r="4"/><circle cx="385.5" cy="121.5" r="4"/><path d="M383.0 121.5H388.0" shape-rendering="crispEdges" stroke-width="1"/><circle class="sh" cx="374.5" cy="134.5" r="4"/><circle cx="374.5" cy="134.5" r="4"/><path d="M372.0 134.5H377.0" shape-rendering="crispEdges" stroke-width="1"/><circle class="sh" cx="399.5" cy="174.5" r="4"/><circle cx="399.5" cy="174.5" r="4"/><path d="M397.0 174.5H402.0M399.5 172.0V177.0" shape-rendering="crispEdges" stroke-width="1"/><circle class="sh" cx="411.5" cy="184.5" r="4"/><circle cx="411.5" cy="184.5" r="4"/><path d="M409.0 184.5H414.0M411.5 182.0V187.0" shape-rendering="crispEdges" stroke-width="1"/><circle class="sh" cx="409.5" cy="186.5" r="4"/><circle cx="409.5" cy="186.5" r="4"/><path d="M407.0 186.5H412.0" shape-rendering="crispEdges" stroke-width="1"/><circle class="sh" cx="412.5" cy="187.5" r="4"/><circle cx="412.5" cy="187.5" r="4"/><path d="M410.0 187.5H415.0M412.5 185.0V190.0" shape-rendering="crispEdges" stroke-width="1"/><circle class="sh" cx="406.5" cy="189.5" r="4"/><circle cx="406.5" cy="189.5" r="4"/><path d="M404.0 189.5H409.0M406.5 187.0V192.0" shape-rendering="crispEdges" stroke-width="1"/><circle class="sh" cx="405.5" cy="191.5" r="4"/><circle cx="405.5" cy="191.5" r="4"/><path d="M403.0 191.5H408.0" shape-rendering="crispEdges" stroke-width="1"/><circle class="sh" cx="414.5" cy="199.5" r="4"/><circle cx="414.5" cy="199.5" r="4"/><path d="M412.0 199.5H417.0" shape-rendering="crispEdges" stroke-width="1"/><circle class="sh" cx="417.5" cy="215.5" r="4"/><circle cx="417.5" cy="215.5" r="4"/><path d="M415.0 215.5H420.0M417.5 213.0V218.0" shape-rendering="crispEdges" stroke-width="1"/><circle class="sh" cx="414.5" cy="226.5" r="4"/><circle cx="414.5" cy="226.5" r="4"/><path d="M412.0 226.5H417.0M414.5 224.0V229.0" shape-rendering="crispEdges" stroke-width="1"/><path d="M411.0 231.5H418.0M414.5 228.0V235.0" shape-rendering="crispEdges" stroke-width="1"/><circle class="sh" cx="772.5" cy="224.5" r="4"/><circle cx="772.5" cy="224.5" r="4"/><path d="M770.0 224.5H775.0M772.5 222.0V227.0" shape-rendering="crispEdges" stroke-width="1"/><circle class="sh" cx="785.5" cy="238.5" r="4"/><circle cx="785.5" cy="238.5" r="4"/><path d="M783.0 238.5H788.0M785.5 236.0V241.0" shape-rendering="crispEdges" stroke-width="1"/><circle class="sh" cx="703.5" cy="274.5" r="4"/><circle cx="703.5" cy="274.5" r="4"/><path d="M701.0 274.5H706.0M703.5 272.0V277.0" shape-rendering="crispEdges" stroke-width="1"/><circle class="sh" cx="737.5" cy="308.5" r="4"/><circle cx="737.5" cy="308.5" r="4"/><path d="M735.0 308.5H740.0M737.5 306.0V311.0" shape-rendering="crispEdges" stroke-width="1"/><path d="M781.0 310.5H788.0M784.5 307.0V314.0" shape-rendering="crispEdges" stroke-width="1"/><circle class="sh" cx="697.5" cy="327.5" r="4"/><circle cx="697.5" cy="327.5" r="4"/><path d="M695.0 327.5H700.0M697.5 325.0V330.0" shape-rendering="crispEdges" stroke-width="1"/><circle class="sh" cx="640.5" cy="335.5" r="4"/><circle cx="640.5" cy="335.5" r="4"/><path d="M638.0 335.5H643.0M640.5 333.0V338.0" shape-rendering="crispEdges" stroke-width="1"/><circle class="sh" cx="709.5" cy="387.5" r="4"/><circle cx="709.5" cy="387.5" r="4"/><path d="M707.0 387.5H712.0" shape-rendering="crispEdges" stroke-width="1"/><circle class="sh" cx="748.5" cy="396.5" r="4"/><circle cx="748.5" cy="396.5" r="4"/><path d="M746.0 396.5H751.0" shape-rendering="crispEdges" stroke-width="1"/><circle class="sh" cx="693.5" cy="488.5" r="4"/><circle cx="693.5" cy="488.5" r="4"/><path d="M691.0 488.5H696.0M693.5 486.0V491.0" shape-rendering="crispEdges" stroke-width="1"/><circle class="sh" cx="693.5" cy="564.5" r="4"/><circle cx="693.5" cy="564.5" r="4"/><path d="M691.0 564.5H696.0M693.5 562.0V567.0" shape-rendering="crispEdges" stroke-width="1"/><circle class="sh" cx="642.5" cy="566.5" r="4"/><circle cx="642.5" cy="566.5" r="4"/><path d="M640.0 566.5H645.0M642.5 564.0V569.0" shape-rendering="crispEdges" stroke-width="1"/><circle class="sh" cx="777.5" cy="588.5" r="4"/><circle cx="777.5" cy="588.5" r="4"/><path d="M775.0 588.5H780.0M777.5 586.0V591.0" shape-rendering="crispEdges" stroke-width="1"/><circle class="sh" cx="505.5" cy="679.5" r="4"/><circle cx="505.5" cy="679.5" r="4"/><path d="M503.0 679.5H508.0M505.5 677.0V682.0" shape-rendering="crispEdges" stroke-width="1"/><circle class="sh" cx="497.5" cy="692.5" r="4"/><circle cx="497.5" cy="692.5" r="4"/><path d="M495.0 692.5H500.0" shape-rendering="crispEdges" stroke-width="1"/><circle class="sh" cx="507.5" cy="693.5" r="4"/><circle cx="507.5" cy="693.5" r="4"/><path d="M505.0 693.5H510.0" shape-rendering="crispEdges" stroke-width="1"/><circle class="sh" cx="512.5" cy="699.5" r="4"/><circle cx="512.5" cy="699.5" r="4"/><path d="M510.0 699.5H515.0" shape-rendering="crispEdges" stroke-width="1"/><circle class="sh" cx="513.5" cy="703.5" r="4"/><circle cx="513.5" cy="703.5" r="4"/><path d="M511.0 703.5H516.0M513.5 701.0V706.0" shape-rendering="crispEdges" stroke-width="1"/><circle class="sh" cx="529.5" cy="691.5" r="4"/><circle cx="529.5" cy="691.5" r="4"/><path d="M527.0 691.5H532.0" shape-rendering="crispEdges" stroke-width="1"/><circle class="sh" cx="530.5" cy="694.5" r="4"/><circle cx="530.5" cy="694.5" r="4"/><path d="M528.0 694.5H533.0" shape-rendering="crispEdges" stroke-width="1"/><circle class="sh" cx="480.5" cy="701.5" r="4"/><circle cx="480.5" cy="701.5" r="4"/><path d="M478.0 701.5H483.0M480.5 699.0V704.0" shape-rendering="crispEdges" stroke-width="1"/><circle class="sh" cx="443.5" cy="715.5" r="4"/><circle cx="443.5" cy="715.5" r="4"/><path d="M441.0 715.5H446.0M443.5 713.0V718.0" shape-rendering="crispEdges" stroke-width="1"/><circle class="sh" cx="460.5" cy="715.5" r="4"/><circle cx="460.5" cy="715.5" r="4"/><path d="M458.0 715.5H463.0M460.5 713.0V718.0" shape-rendering="crispEdges" stroke-width="1"/><circle class="sh" cx="465.5" cy="711.5" r="4"/><circle cx="465.5" cy="711.5" r="4"/><path d="M463.0 711.5H468.0" shape-rendering="crispEdges" stroke-width="1"/><circle class="sh" cx="474.5" cy="715.5" r="4"/><circle cx="474.5" cy="715.5" r="4"/><path d="M472.0 715.5H477.0M474.5 713.0V718.0" shape-rendering="crispEdges" stroke-width="1"/><circle class="sh" cx="518.5" cy="732.5" r="4"/><circle cx="518.5" cy="732.5" r="4"/><path d="M516.0 732.5H521.0M518.5 730.0V735.0" shape-rendering="crispEdges" stroke-width="1"/><circle class="sh" cx="414.5" cy="739.5" r="4"/><circle cx="414.5" cy="739.5" r="4"/><path d="M412.0 739.5H417.0M414.5 737.0V742.0" shape-rendering="crispEdges" stroke-width="1"/><circle class="sh" cx="438.5" cy="748.5" r="4"/><circle cx="438.5" cy="748.5" r="4"/><path d="M436.0 748.5H441.0" shape-rendering="crispEdges" stroke-width="1"/><circle class="sh" cx="651.5" cy="675.5" r="4"/><circle cx="651.5" cy="675.5" r="4"/><path d="M649.0 675.5H654.0M651.5 673.0V678.0" shape-rendering="crispEdges" stroke-width="1"/><circle class="sh" cx="655.5" cy="681.5" r="4"/><circle cx="655.5" cy="681.5" r="4"/><path d="M653.0 681.5H658.0M655.5 679.0V684.0" shape-rendering="crispEdges" stroke-width="1"/><circle class="sh" cx="605.5" cy="712.5" r="4"/><circle cx="605.5" cy="712.5" r="4"/><path d="M603.0 712.5H608.0M605.5 710.0V715.0" shape-rendering="crispEdges" stroke-width="1"/><circle class="sh" cx="648.5" cy="747.5" r="4"/><circle cx="648.5" cy="747.5" r="4"/><path d="M646.0 747.5H651.0" shape-rendering="crispEdges" stroke-width="1"/><circle class="sh" cx="665.5" cy="752.5" r="4"/><circle cx="665.5" cy="752.5" r="4"/><path d="M663.0 752.5H668.0" shape-rendering="crispEdges" stroke-width="1"/><circle class="sh" cx="622.5" cy="794.5" r="4"/><circle cx="622.5" cy="794.5" r="4"/><path d="M620.0 794.5H625.0M622.5 792.0V797.0" shape-rendering="crispEdges" stroke-width="1"/><circle class="sh" cx="698.5" cy="644.5" r="4"/><circle cx="698.5" cy="644.5" r="4"/><path d="M696.0 644.5H701.0" shape-rendering="crispEdges" stroke-width="1"/><circle class="sh" cx="701.5" cy="647.5" r="4"/><circle cx="701.5" cy="647.5" r="4"/><path d="M699.0 647.5H704.0M701.5 645.0V650.0" shape-rendering="crispEdges" stroke-width="1"/><circle class="sh" cx="773.5" cy="670.5" r="4"/><circle cx="773.5" cy="670.5" r="4"/><path d="M771.0 670.5H776.0" shape-rendering="crispEdges" stroke-width="1"/><circle class="sh" cx="721.5" cy="721.5" r="4"/><circle cx="721.5" cy="721.5" r="4"/><path d="M719.0 721.5H724.0M721.5 719.0V724.0" shape-rendering="crispEdges" stroke-width="1"/><circle class="sh" cx="723.5" cy="724.5" r="4"/><circle cx="723.5" cy="724.5" r="4"/><path d="M721.0 724.5H726.0" shape-rendering="crispEdges" stroke-width="1"/></g>
<g fill="none" stroke="#ffd200" stroke-width="1.25" shape-rendering="geometricPrecision"><circle class="sh" cx="383.5" cy="43.5" r="4"/><circle cx="383.5" cy="43.5" r="4"/><path d="M381.0 43.5H386.0" shape-rendering="crispEdges" stroke-width="1"/><circle class="sh" cx="413.5" cy="57.5" r="4"/><circle cx="413.5" cy="57.5" r="4"/><path d="M411.0 57.5H416.0" shape-rendering="crispEdges" stroke-width="1"/><circle class="sh" cx="386.5" cy="60.5" r="4"/><circle cx="386.5" cy="60.5" r="4"/><path d="M384.0 60.5H389.0M386.5 58.0V63.0" shape-rendering="crispEdges" stroke-width="1"/><circle class="sh" cx="391.5" cy="59.5" r="4"/><circle cx="391.5" cy="59.5" r="4"/><path d="M389.0 59.5H394.0M391.5 57.0V62.0" shape-rendering="crispEdges" stroke-width="1"/><path d="M393.0 56.5H400.0" shape-rendering="crispEdges" stroke-width="1"/><circle class="sh" cx="410.5" cy="117.5" r="4"/><circle cx="410.5" cy="117.5" r="4"/><path d="M408.0 117.5H413.0" shape-rendering="crispEdges" stroke-width="1"/><circle class="sh" cx="419.5" cy="122.5" r="4"/><circle cx="419.5" cy="122.5" r="4"/><path d="M417.0 122.5H422.0" shape-rendering="crispEdges" stroke-width="1"/><circle class="sh" cx="420.5" cy="201.5" r="4"/><circle cx="420.5" cy="201.5" r="4"/><path d="M418.0 201.5H423.0" shape-rendering="crispEdges" stroke-width="1"/><circle class="sh" cx="672.5" cy="9.5" r="4"/><circle cx="672.5" cy="9.5" r="4"/><path d="M670.0 9.5H675.0M672.5 7.0V12.0" shape-rendering="crispEdges" stroke-width="1"/><path d="M766.0 41.5H773.0" shape-rendering="crispEdges" stroke-width="1"/><circle class="sh" cx="652.5" cy="45.5" r="4"/><circle cx="652.5" cy="45.5" r="4"/><path d="M650.0 45.5H655.0M652.5 43.0V48.0" shape-rendering="crispEdges" stroke-width="1"/><circle class="sh" cx="589.5" cy="165.5" r="4"/><circle cx="589.5" cy="165.5" r="4"/><path d="M587.0 165.5H592.0M589.5 163.0V168.0" shape-rendering="crispEdges" stroke-width="1"/><circle class="sh" cx="743.5" cy="231.5" r="4"/><circle cx="743.5" cy="231.5" r="4"/><path d="M741.0 231.5H746.0" shape-rendering="crispEdges" stroke-width="1"/><circle class="sh" cx="738.5" cy="241.5" r="4"/><circle cx="738.5" cy="241.5" r="4"/><path d="M736.0 241.5H741.0M738.5 239.0V244.0" shape-rendering="crispEdges" stroke-width="1"/><circle class="sh" cx="758.5" cy="236.5" r="4"/><circle cx="758.5" cy="236.5" r="4"/><path d="M756.0 236.5H761.0" shape-rendering="crispEdges" stroke-width="1"/><circle class="sh" cx="774.5" cy="239.5" r="4"/><circle cx="774.5" cy="239.5" r="4"/><path d="M772.0 239.5H777.0M774.5 237.0V242.0" shape-rendering="crispEdges" stroke-width="1"/><circle class="sh" cx="769.5" cy="243.5" r="4"/><circle cx="769.5" cy="243.5" r="4"/><path d="M767.0 243.5H772.0M769.5 241.0V246.0" shape-rendering="crispEdges" stroke-width="1"/><circle class="sh" cx="768.5" cy="253.5" r="4"/><circle cx="768.5" cy="253.5" r="4"/><path d="M766.0 253.5H771.0M768.5 251.0V256.0" shape-rendering="crispEdges" stroke-width="1"/><path d="M787.0 255.5H794.0M790.5 252.0V259.0" shape-rendering="crispEdges" stroke-width="1"/><circle class="sh" cx="744.5" cy="261.5" r="4"/><circle cx="744.5" cy="261.5" r="4"/><path d="M742.0 261.5H747.0" shape-rendering="crispEdges" stroke-width="1"/><circle class="sh" cx="754.5" cy="266.5" r="4"/><circle cx="754.5" cy="266.5" r="4"/><path d="M752.0 266.5H757.0M754.5 264.0V269.0" shape-rendering="crispEdges" stroke-width="1"/><circle class="sh" cx="756.5" cy="273.5" r="4"/><circle cx="756.5" cy="273.5" r="4"/><path d="M754.0 273.5H759.0M756.5 271.0V276.0" shape-rendering="crispEdges" stroke-width="1"/><circle class="sh" cx="745.5" cy="274.5" r="4"/><circle cx="745.5" cy="274.5" r="4"/><path d="M743.0 274.5H748.0M745.5 272.0V277.0" shape-rendering="crispEdges" stroke-width="1"/><circle class="sh" cx="779.5" cy="273.5" r="4"/><circle cx="779.5" cy="273.5" r="4"/><path d="M777.0 273.5H782.0" shape-rendering="crispEdges" stroke-width="1"/><circle class="sh" cx="785.5" cy="275.5" r="4"/><circle cx="785.5" cy="275.5" r="4"/><path d="M783.0 275.5H788.0M785.5 273.0V278.0" shape-rendering="crispEdges" stroke-width="1"/><circle class="sh" cx="775.5" cy="281.5" r="4"/><circle cx="775.5" cy="281.5" r="4"/><path d="M773.0 281.5H778.0M775.5 279.0V284.0" shape-rendering="crispEdges" stroke-width="1"/><circle class="sh" cx="706.5" cy="282.5" r="4"/><circle cx="706.5" cy="282.5" r="4"/><path d="M704.0 282.5H709.0M706.5 280.0V285.0" shape-rendering="crispEdges" stroke-width="1"/><circle class="sh" cx="736.5" cy="290.5" r="4"/><circle cx="736.5" cy="290.5" r="4"/><path d="M734.0 290.5H739.0M736.5 288.0V293.0" shape-rendering="crispEdges" stroke-width="1"/><circle class="sh" cx="727.5" cy="298.5" r="4"/><circle cx="727.5" cy="298.5" r="4"/><path d="M725.0 298.5H730.0M727.5 296.0V301.0" shape-rendering="crispEdges" stroke-width="1"/><circle class="sh" cx="771.5" cy="295.5" r="4"/><circle cx="771.5" cy="295.5" r="4"/><path d="M769.0 295.5H774.0M771.5 293.0V298.0" shape-rendering="crispEdges" stroke-width="1"/><circle class="sh" cx="781.5" cy="295.5" r="4"/><circle cx="781.5" cy="295.5" r="4"/><path d="M779.0 295.5H784.0M781.5 293.0V298.0" shape-rendering="crispEdges" stroke-width="1"/><circle class="sh" cx="792.5" cy="295.5" r="4"/><circle cx="792.5" cy="295.5" r="4"/><path d="M790.0 295.5H795.0M792.5 293.0V298.0" shape-rendering="crispEdges" stroke-width="1"/><circle class="sh" cx="724.5" cy="322.5" r="4"/><circle cx="724.5" cy="322.5" r="4"/><path d="M722.0 322.5H727.0M724.5 320.0V325.0" shape-rendering="crispEdges" stroke-width="1"/><circle class="sh" cx="800.5" cy="328.5" r="4"/><circle cx="800.5" cy="328.5" r="4"/><path d="M798.0 328.5H803.0M800.5 326.0V331.0" shape-rendering="crispEdges" stroke-width="1"/><circle class="sh" cx="417.5" cy="712.5" r="4"/><circle cx="417.5" cy="712.5" r="4"/><path d="M415.0 712.5H420.0M417.5 710.0V715.0" shape-rendering="crispEdges" stroke-width="1"/><circle class="sh" cx="484.5" cy="711.5" r="4"/><circle cx="484.5" cy="711.5" r="4"/><path d="M482.0 711.5H487.0" shape-rendering="crispEdges" stroke-width="1"/><path d="M535.0 752.5H542.0" shape-rendering="crispEdges" stroke-width="1"/><circle class="sh" cx="673.5" cy="659.5" r="4"/><circle cx="673.5" cy="659.5" r="4"/><path d="M671.0 659.5H676.0M673.5 657.0V662.0" shape-rendering="crispEdges" stroke-width="1"/><circle class="sh" cx="626.5" cy="671.5" r="4"/><circle cx="626.5" cy="671.5" r="4"/><path d="M624.0 671.5H629.0M626.5 669.0V674.0" shape-rendering="crispEdges" stroke-width="1"/><circle class="sh" cx="634.5" cy="673.5" r="4"/><circle cx="634.5" cy="673.5" r="4"/><path d="M632.0 673.5H637.0M634.5 671.0V676.0" shape-rendering="crispEdges" stroke-width="1"/><circle class="sh" cx="621.5" cy="684.5" r="4"/><circle cx="621.5" cy="684.5" r="4"/><path d="M619.0 684.5H624.0M621.5 682.0V687.0" shape-rendering="crispEdges" stroke-width="1"/><circle class="sh" cx="677.5" cy="684.5" r="4"/><circle cx="677.5" cy="684.5" r="4"/><path d="M675.0 684.5H680.0" shape-rendering="crispEdges" stroke-width="1"/><circle class="sh" cx="652.5" cy="702.5" r="4"/><circle cx="652.5" cy="702.5" r="4"/><path d="M650.0 702.5H655.0" shape-rendering="crispEdges" stroke-width="1"/><circle class="sh" cx="654.5" cy="708.5" r="4"/><circle cx="654.5" cy="708.5" r="4"/><path d="M652.0 708.5H657.0M654.5 706.0V711.0" shape-rendering="crispEdges" stroke-width="1"/><circle class="sh" cx="624.5" cy="701.5" r="4"/><circle cx="624.5" cy="701.5" r="4"/><path d="M622.0 701.5H627.0M624.5 699.0V704.0" shape-rendering="crispEdges" stroke-width="1"/><path d="M576.0 712.5H583.0M579.5 709.0V716.0" shape-rendering="crispEdges" stroke-width="1"/><circle class="sh" cx="623.5" cy="717.5" r="4"/><circle cx="623.5" cy="717.5" r="4"/><path d="M621.0 717.5H626.0M623.5 715.0V720.0" shape-rendering="crispEdges" stroke-width="1"/><circle class="sh" cx="671.5" cy="709.5" r="4"/><circle cx="671.5" cy="709.5" r="4"/><path d="M669.0 709.5H674.0" shape-rendering="crispEdges" stroke-width="1"/><circle class="sh" cx="653.5" cy="725.5" r="4"/><circle cx="653.5" cy="725.5" r="4"/><path d="M651.0 725.5H656.0" shape-rendering="crispEdges" stroke-width="1"/><circle class="sh" cx="559.5" cy="743.5" r="4"/><circle cx="559.5" cy="743.5" r="4"/><path d="M557.0 743.5H562.0M559.5 741.0V746.0" shape-rendering="crispEdges" stroke-width="1"/><path d="M537.0 752.5H544.0" shape-rendering="crispEdges" stroke-width="1"/><circle class="sh" cx="675.5" cy="746.5" r="4"/><circle cx="675.5" cy="746.5" r="4"/><path d="M673.0 746.5H678.0M675.5 744.0V749.0" shape-rendering="crispEdges" stroke-width="1"/><circle class="sh" cx="620.5" cy="749.5" r="4"/><circle cx="620.5" cy="749.5" r="4"/><path d="M618.0 749.5H623.0" shape-rendering="crispEdges" stroke-width="1"/><circle class="sh" cx="621.5" cy="751.5" r="4"/><circle cx="621.5" cy="751.5" r="4"/><path d="M619.0 751.5H624.0" shape-rendering="crispEdges" stroke-width="1"/><circle class="sh" cx="646.5" cy="742.5" r="4"/><circle cx="646.5" cy="742.5" r="4"/><path d="M644.0 742.5H649.0" shape-rendering="crispEdges" stroke-width="1"/><circle class="sh" cx="641.5" cy="758.5" r="4"/><circle cx="641.5" cy="758.5" r="4"/><path d="M639.0 758.5H644.0M641.5 756.0V761.0" shape-rendering="crispEdges" stroke-width="1"/><circle class="sh" cx="615.5" cy="759.5" r="4"/><circle cx="615.5" cy="759.5" r="4"/><path d="M613.0 759.5H618.0M615.5 757.0V762.0" shape-rendering="crispEdges" stroke-width="1"/><circle class="sh" cx="625.5" cy="759.5" r="4"/><circle cx="625.5" cy="759.5" r="4"/><path d="M623.0 759.5H628.0M625.5 757.0V762.0" shape-rendering="crispEdges" stroke-width="1"/><circle class="sh" cx="617.5" cy="767.5" r="4"/><circle cx="617.5" cy="767.5" r="4"/><path d="M615.0 767.5H620.0M617.5 765.0V770.0" shape-rendering="crispEdges" stroke-width="1"/><circle class="sh" cx="625.5" cy="768.5" r="4"/><circle cx="625.5" cy="768.5" r="4"/><path d="M623.0 768.5H628.0M625.5 766.0V771.0" shape-rendering="crispEdges" stroke-width="1"/><circle class="sh" cx="610.5" cy="770.5" r="4"/><circle cx="610.5" cy="770.5" r="4"/><path d="M608.0 770.5H613.0M610.5 768.0V773.0" shape-rendering="crispEdges" stroke-width="1"/><circle class="sh" cx="581.5" cy="776.5" r="4"/><circle cx="581.5" cy="776.5" r="4"/><path d="M579.0 776.5H584.0M581.5 774.0V779.0" shape-rendering="crispEdges" stroke-width="1"/><circle class="sh" cx="591.5" cy="774.5" r="4"/><circle cx="591.5" cy="774.5" r="4"/><path d="M589.0 774.5H594.0" shape-rendering="crispEdges" stroke-width="1"/><circle class="sh" cx="623.5" cy="778.5" r="4"/><circle cx="623.5" cy="778.5" r="4"/><path d="M621.0 778.5H626.0M623.5 776.0V781.0" shape-rendering="crispEdges" stroke-width="1"/><circle class="sh" cx="653.5" cy="780.5" r="4"/><circle cx="653.5" cy="780.5" r="4"/><path d="M651.0 780.5H656.0M653.5 778.0V783.0" shape-rendering="crispEdges" stroke-width="1"/><circle class="sh" cx="603.5" cy="801.5" r="4"/><circle cx="603.5" cy="801.5" r="4"/><path d="M601.0 801.5H606.0M603.5 799.0V804.0" shape-rendering="crispEdges" stroke-width="1"/><circle class="sh" cx="721.5" cy="608.5" r="4"/><circle cx="721.5" cy="608.5" r="4"/><path d="M719.0 608.5H724.0M721.5 606.0V611.0" shape-rendering="crispEdges" stroke-width="1"/><circle class="sh" cx="788.5" cy="608.5" r="4"/><circle cx="788.5" cy="608.5" r="4"/><path d="M786.0 608.5H791.0M788.5 606.0V611.0" shape-rendering="crispEdges" stroke-width="1"/><circle class="sh" cx="766.5" cy="645.5" r="4"/><circle cx="766.5" cy="645.5" r="4"/><path d="M764.0 645.5H769.0M766.5 643.0V648.0" shape-rendering="crispEdges" stroke-width="1"/><circle class="sh" cx="665.5" cy="644.5" r="4"/><circle cx="665.5" cy="644.5" r="4"/><path d="M663.0 644.5H668.0" shape-rendering="crispEdges" stroke-width="1"/><circle class="sh" cx="668.5" cy="645.5" r="4"/><circle cx="668.5" cy="645.5" r="4"/><path d="M666.0 645.5H671.0" shape-rendering="crispEdges" stroke-width="1"/><circle class="sh" cx="715.5" cy="657.5" r="4"/><circle cx="715.5" cy="657.5" r="4"/><path d="M713.0 657.5H718.0M715.5 655.0V660.0" shape-rendering="crispEdges" stroke-width="1"/><circle class="sh" cx="735.5" cy="674.5" r="4"/><circle cx="735.5" cy="674.5" r="4"/><path d="M733.0 674.5H738.0" shape-rendering="crispEdges" stroke-width="1"/><circle class="sh" cx="781.5" cy="668.5" r="4"/><circle cx="781.5" cy="668.5" r="4"/><path d="M779.0 668.5H784.0M781.5 666.0V671.0" shape-rendering="crispEdges" stroke-width="1"/><circle class="sh" cx="778.5" cy="675.5" r="4"/><circle cx="778.5" cy="675.5" r="4"/><path d="M776.0 675.5H781.0M778.5 673.0V678.0" shape-rendering="crispEdges" stroke-width="1"/><circle class="sh" cx="779.5" cy="674.5" r="4"/><circle cx="779.5" cy="674.5" r="4"/><path d="M777.0 674.5H782.0M779.5 672.0V677.0" shape-rendering="crispEdges" stroke-width="1"/><circle class="sh" cx="677.5" cy="683.5" r="4"/><circle cx="677.5" cy="683.5" r="4"/><path d="M675.0 683.5H680.0" shape-rendering="crispEdges" stroke-width="1"/><circle class="sh" cx="696.5" cy="696.5" r="4"/><circle cx="696.5" cy="696.5" r="4"/><path d="M694.0 696.5H699.0M696.5 694.0V699.0" shape-rendering="crispEdges" stroke-width="1"/><circle class="sh" cx="707.5" cy="705.5" r="4"/><circle cx="707.5" cy="705.5" r="4"/><path d="M705.0 705.5H710.0" shape-rendering="crispEdges" stroke-width="1"/><circle class="sh" cx="706.5" cy="707.5" r="4"/><circle cx="706.5" cy="707.5" r="4"/><path d="M704.0 707.5H709.0" shape-rendering="crispEdges" stroke-width="1"/><circle class="sh" cx="672.5" cy="709.5" r="4"/><circle cx="672.5" cy="709.5" r="4"/><path d="M670.0 709.5H675.0" shape-rendering="crispEdges" stroke-width="1"/><circle class="sh" cx="699.5" cy="724.5" r="4"/><circle cx="699.5" cy="724.5" r="4"/><path d="M697.0 724.5H702.0M699.5 722.0V727.0" shape-rendering="crispEdges" stroke-width="1"/><circle class="sh" cx="702.5" cy="727.5" r="4"/><circle cx="702.5" cy="727.5" r="4"/><path d="M700.0 727.5H705.0M702.5 725.0V730.0" shape-rendering="crispEdges" stroke-width="1"/><circle class="sh" cx="703.5" cy="731.5" r="4"/><circle cx="703.5" cy="731.5" r="4"/><path d="M701.0 731.5H706.0" shape-rendering="crispEdges" stroke-width="1"/><circle class="sh" cx="675.5" cy="746.5" r="4"/><circle cx="675.5" cy="746.5" r="4"/><path d="M673.0 746.5H678.0M675.5 744.0V749.0" shape-rendering="crispEdges" stroke-width="1"/></g>
<g fill="none" stroke="#ffff00" stroke-width="1.25" shape-rendering="geometricPrecision"><circle class="sh" cx="347.5" cy="86.5" r="4"/><circle cx="347.5" cy="86.5" r="4"/><path d="M345.0 86.5H350.0" shape-rendering="crispEdges" stroke-width="1"/><circle class="sh" cx="373.5" cy="107.5" r="4"/><circle cx="373.5" cy="107.5" r="4"/><path d="M371.0 107.5H376.0M373.5 105.0V110.0" shape-rendering="crispEdges" stroke-width="1"/><circle class="sh" cx="395.5" cy="90.5" r="4"/><circle cx="395.5" cy="90.5" r="4"/><path d="M393.0 90.5H398.0" shape-rendering="crispEdges" stroke-width="1"/><circle class="sh" cx="399.5" cy="88.5" r="4"/><circle cx="399.5" cy="88.5" r="4"/><path d="M397.0 88.5H402.0M399.5 86.0V91.0" shape-rendering="crispEdges" stroke-width="1"/><circle class="sh" cx="401.5" cy="86.5" r="4"/><circle cx="401.5" cy="86.5" r="4"/><path d="M399.0 86.5H404.0" shape-rendering="crispEdges" stroke-width="1"/><circle class="sh" cx="405.5" cy="88.5" r="4"/><circle cx="405.5" cy="88.5" r="4"/><path d="M403.0 88.5H408.0M405.5 86.0V91.0" shape-rendering="crispEdges" stroke-width="1"/><circle class="sh" cx="399.5" cy="92.5" r="4"/><circle cx="399.5" cy="92.5" r="4"/><path d="M397.0 92.5H402.0" shape-rendering="crispEdges" stroke-width="1"/><circle class="sh" cx="401.5" cy="95.5" r="4"/><circle cx="401.5" cy="95.5" r="4"/><path d="M399.0 95.5H404.0M401.5 93.0V98.0" shape-rendering="crispEdges" stroke-width="1"/><circle class="sh" cx="416.5" cy="88.5" r="4"/><circle cx="416.5" cy="88.5" r="4"/><path d="M414.0 88.5H419.0" shape-rendering="crispEdges" stroke-width="1"/><circle class="sh" cx="423.5" cy="89.5" r="4"/><circle cx="423.5" cy="89.5" r="4"/><path d="M421.0 89.5H426.0" shape-rendering="crispEdges" stroke-width="1"/><circle class="sh" cx="420.5" cy="130.5" r="4"/><circle cx="420.5" cy="130.5" r="4"/><path d="M418.0 130.5H423.0" shape-rendering="crispEdges" stroke-width="1"/><path d="M405.0 139.5H412.0M408.5 136.0V143.0" shape-rendering="crispEdges" stroke-width="1"/><circle class="sh" cx="419.5" cy="142.5" r="4"/><circle cx="419.5" cy="142.5" r="4"/><path d="M417.0 142.5H422.0" shape-rendering="crispEdges" stroke-width="1"/><circle class="sh" cx="402.5" cy="154.5" r="4"/><circle cx="402.5" cy="154.5" r="4"/><path d="M400.0 154.5H405.0" shape-rendering="crispEdges" stroke-width="1"/><circle class="sh" cx="419.5" cy="150.5" r="4"/><circle cx="419.5" cy="150.5" r="4"/><path d="M417.0 150.5H422.0" shape-rendering="crispEdges" stroke-width="1"/><circle class="sh" cx="421.5" cy="152.5" r="4"/><circle cx="421.5" cy="152.5" r="4"/><path d="M419.0 152.5H424.0" shape-rendering="crispEdges" stroke-width="1"/><circle class="sh" cx="423.5" cy="153.5" r="4"/><circle cx="423.5" cy="153.5" r="4"/><path d="M421.0 153.5H426.0" shape-rendering="crispEdges" stroke-width="1"/><circle class="sh" cx="428.5" cy="156.5" r="4"/><circle cx="428.5" cy="156.5" r="4"/><path d="M426.0 156.5H431.0" shape-rendering="crispEdges" stroke-width="1"/><circle class="sh" cx="737.5" cy="11.5" r="4"/><circle cx="737.5" cy="11.5" r="4"/><path d="M735.0 11.5H740.0M737.5 9.0V14.0" shape-rendering="crispEdges" stroke-width="1"/><circle class="sh" cx="652.5" cy="54.5" r="4"/><circle cx="652.5" cy="54.5" r="4"/><path d="M650.0 54.5H655.0" shape-rendering="crispEdges" stroke-width="1"/><circle class="sh" cx="708.5" cy="110.5" r="4"/><circle cx="708.5" cy="110.5" r="4"/><path d="M706.0 110.5H711.0M708.5 108.0V113.0" shape-rendering="crispEdges" stroke-width="1"/><circle class="sh" cx="628.5" cy="136.5" r="4"/><circle cx="628.5" cy="136.5" r="4"/><path d="M626.0 136.5H631.0" shape-rendering="crispEdges" stroke-width="1"/><circle class="sh" cx="734.5" cy="226.5" r="4"/><circle cx="734.5" cy="226.5" r="4"/><path d="M732.0 226.5H737.0M734.5 224.0V229.0" shape-rendering="crispEdges" stroke-width="1"/><circle class="sh" cx="734.5" cy="263.5" r="4"/><circle cx="734.5" cy="263.5" r="4"/><path d="M732.0 263.5H737.0M734.5 261.0V266.0" shape-rendering="crispEdges" stroke-width="1"/><circle class="sh" cx="737.5" cy="265.5" r="4"/><circle cx="737.5" cy="265.5" r="4"/><path d="M735.0 265.5H740.0M737.5 263.0V268.0" shape-rendering="crispEdges" stroke-width="1"/><circle class="sh" cx="694.5" cy="294.5" r="4"/><circle cx="694.5" cy="294.5" r="4"/><path d="M692.0 294.5H697.0" shape-rendering="crispEdges" stroke-width="1"/><circle class="sh" cx="706.5" cy="297.5" r="4"/><circle cx="706.5" cy="297.5" r="4"/><path d="M704.0 297.5H709.0M706.5 295.0V300.0" shape-rendering="crispEdges" stroke-width="1"/><circle class="sh" cx="733.5" cy="299.5" r="4"/><circle cx="733.5" cy="299.5" r="4"/><path d="M731.0 299.5H736.0M733.5 297.0V302.0" shape-rendering="crispEdges" stroke-width="1"/><circle class="sh" cx="755.5" cy="294.5" r="4"/><circle cx="755.5" cy="294.5" r="4"/><path d="M753.0 294.5H758.0" shape-rendering="crispEdges" stroke-width="1"/><circle class="sh" cx="711.5" cy="303.5" r="4"/><circle cx="711.5" cy="303.5" r="4"/><path d="M709.0 303.5H714.0M711.5 301.0V306.0" shape-rendering="crispEdges" stroke-width="1"/><circle class="sh" cx="714.5" cy="306.5" r="4"/><circle cx="714.5" cy="306.5" r="4"/><path d="M712.0 306.5H717.0M714.5 304.0V309.0" shape-rendering="crispEdges" stroke-width="1"/><circle class="sh" cx="699.5" cy="312.5" r="4"/><circle cx="699.5" cy="312.5" r="4"/><path d="M697.0 312.5H702.0M699.5 310.0V315.0" shape-rendering="crispEdges" stroke-width="1"/><circle class="sh" cx="753.5" cy="323.5" r="4"/><circle cx="753.5" cy="323.5" r="4"/><path d="M751.0 323.5H756.0M753.5 321.0V326.0" shape-rendering="crispEdges" stroke-width="1"/><circle class="sh" cx="754.5" cy="331.5" r="4"/><circle cx="754.5" cy="331.5" r="4"/><path d="M752.0 331.5H757.0M754.5 329.0V334.0" shape-rendering="crispEdges" stroke-width="1"/><circle class="sh" cx="639.5" cy="666.5" r="4"/><circle cx="639.5" cy="666.5" r="4"/><path d="M637.0 666.5H642.0M639.5 664.0V669.0" shape-rendering="crispEdges" stroke-width="1"/><circle class="sh" cx="610.5" cy="692.5" r="4"/><circle cx="610.5" cy="692.5" r="4"/><path d="M608.0 692.5H613.0" shape-rendering="crispEdges" stroke-width="1"/><circle class="sh" cx="610.5" cy="693.5" r="4"/><circle cx="610.5" cy="693.5" r="4"/><path d="M608.0 693.5H613.0" shape-rendering="crispEdges" stroke-width="1"/><circle class="sh" cx="675.5" cy="692.5" r="4"/><circle cx="675.5" cy="692.5" r="4"/><path d="M673.0 692.5H678.0" shape-rendering="crispEdges" stroke-width="1"/><circle class="sh" cx="675.5" cy="695.5" r="4"/><circle cx="675.5" cy="695.5" r="4"/><path d="M673.0 695.5H678.0" shape-rendering="crispEdges" stroke-width="1"/><circle class="sh" cx="677.5" cy="714.5" r="4"/><circle cx="677.5" cy="714.5" r="4"/><path d="M675.0 714.5H680.0M677.5 712.0V717.0" shape-rendering="crispEdges" stroke-width="1"/><circle class="sh" cx="665.5" cy="718.5" r="4"/><circle cx="665.5" cy="718.5" r="4"/><path d="M663.0 718.5H668.0" shape-rendering="crispEdges" stroke-width="1"/><circle class="sh" cx="678.5" cy="725.5" r="4"/><circle cx="678.5" cy="725.5" r="4"/><path d="M676.0 725.5H681.0" shape-rendering="crispEdges" stroke-width="1"/><circle class="sh" cx="639.5" cy="736.5" r="4"/><circle cx="639.5" cy="736.5" r="4"/><path d="M637.0 736.5H642.0M639.5 734.0V739.0" shape-rendering="crispEdges" stroke-width="1"/><circle class="sh" cx="641.5" cy="738.5" r="4"/><circle cx="641.5" cy="738.5" r="4"/><path d="M639.0 738.5H644.0M641.5 736.0V741.0" shape-rendering="crispEdges" stroke-width="1"/><circle class="sh" cx="638.5" cy="740.5" r="4"/><circle cx="638.5" cy="740.5" r="4"/><path d="M636.0 740.5H641.0M638.5 738.0V743.0" shape-rendering="crispEdges" stroke-width="1"/><circle class="sh" cx="650.5" cy="733.5" r="4"/><circle cx="650.5" cy="733.5" r="4"/><path d="M648.0 733.5H653.0" shape-rendering="crispEdges" stroke-width="1"/><circle class="sh" cx="661.5" cy="733.5" r="4"/><circle cx="661.5" cy="733.5" r="4"/><path d="M659.0 733.5H664.0M661.5 731.0V736.0" shape-rendering="crispEdges" stroke-width="1"/><circle class="sh" cx="664.5" cy="734.5" r="4"/><circle cx="664.5" cy="734.5" r="4"/><path d="M662.0 734.5H667.0M664.5 732.0V737.0" shape-rendering="crispEdges" stroke-width="1"/><circle class="sh" cx="671.5" cy="737.5" r="4"/><circle cx="671.5" cy="737.5" r="4"/><path d="M669.0 737.5H674.0M671.5 735.0V740.0" shape-rendering="crispEdges" stroke-width="1"/><circle class="sh" cx="567.5" cy="779.5" r="4"/><circle cx="567.5" cy="779.5" r="4"/><path d="M565.0 779.5H570.0" shape-rendering="crispEdges" stroke-width="1"/><circle class="sh" cx="720.5" cy="663.5" r="4"/><circle cx="720.5" cy="663.5" r="4"/><path d="M718.0 663.5H723.0M720.5 661.0V666.0" shape-rendering="crispEdges" stroke-width="1"/><circle class="sh" cx="735.5" cy="664.5" r="4"/><circle cx="735.5" cy="664.5" r="4"/><path d="M733.0 664.5H738.0" shape-rendering="crispEdges" stroke-width="1"/><circle class="sh" cx="714.5" cy="670.5" r="4"/><circle cx="714.5" cy="670.5" r="4"/><path d="M712.0 670.5H717.0" shape-rendering="crispEdges" stroke-width="1"/><circle class="sh" cx="714.5" cy="672.5" r="4"/><circle cx="714.5" cy="672.5" r="4"/><path d="M712.0 672.5H717.0" shape-rendering="crispEdges" stroke-width="1"/><circle class="sh" cx="677.5" cy="715.5" r="4"/><circle cx="677.5" cy="715.5" r="4"/><path d="M675.0 715.5H680.0M677.5 713.0V718.0" shape-rendering="crispEdges" stroke-width="1"/><circle class="sh" cx="672.5" cy="738.5" r="4"/><circle cx="672.5" cy="738.5" r="4"/><path d="M670.0 738.5H675.0M672.5 736.0V741.0" shape-rendering="crispEdges" stroke-width="1"/></g>
<g fill="none" stroke="#dcff00" stroke-width="1.25" shape-rendering="geometricPrecision"><circle class="sh" cx="514.5" cy="788.5" r="4"/><circle cx="514.5" cy="788.5" r="4"/><path d="M512.0 788.5H517.0" shape-rendering="crispEdges" stroke-width="1"/></g>
<g fill="none" stroke="#00f0ff" stroke-width="1.25" shape-rendering="geometricPrecision"><path d="M414.0 155.5H421.0M417.5 152.0V159.0" shape-rendering="crispEdges" stroke-width="1"/><circle class="sh" cx="626.5" cy="681.5" r="4"/><circle cx="626.5" cy="681.5" r="4"/><path d="M624.0 681.5H629.0M626.5 679.0V684.0" shape-rendering="crispEdges" stroke-width="1"/><circle class="sh" cx="683.5" cy="703.5" r="4"/><circle cx="683.5" cy="703.5" r="4"/><path d="M681.0 703.5H686.0M683.5 701.0V706.0" shape-rendering="crispEdges" stroke-width="1"/></g>
<path d="M409.8 101.5L429.3 121L409.8 140.5L390.3 121Z" fill="none" stroke="#00d428" stroke-width="1" stroke-dasharray="4.5 4.5" shape-rendering="geometricPrecision"/>
<path d="M740.8 264.6L760.0 283.8L740.8 303.0L721.5999999999999 283.8Z" fill="none" stroke="#00d428" stroke-width="1" stroke-dasharray="4.5 4.5" shape-rendering="geometricPrecision"/>
<path d="M350.7 63.3L395.8 107.6" stroke="#d4d4d4" stroke-width="1" fill="none"/>
<path d="M681.8 224.2L726.9 268.9" stroke="#d4d4d4" stroke-width="1" fill="none"/>
<text x="340.5" y="60" font-size="9.5" fill="#f4f4f4" font-family="'DejaVu Sans','Liberation Sans',sans-serif" textLength="51.5" lengthAdjust="spacingAndGlyphs">A-2277 3</text>
<path d="M381.5 56.5H384.5" stroke="#00e8ff" stroke-width="1.2"/>
<text x="671.5" y="220.5" font-size="9.5" fill="#f4f4f4" font-family="'DejaVu Sans','Liberation Sans',sans-serif" textLength="39" lengthAdjust="spacingAndGlyphs">T-6202</text>
<text x="711.5" y="220.5" font-size="9.5" fill="#ff2020" font-weight="bold" font-family="'DejaVu Sans','Liberation Sans',sans-serif">+</text>
<text x="719.5" y="220.5" font-size="9.5" fill="#f4f4f4" font-family="'DejaVu Sans','Liberation Sans',sans-serif">1</text>
<path d="M725.5 217.5H730.5" stroke="#ffff00" stroke-width="1.2"/>
<rect x="8.5" y="758.5" width="244" height="45" fill="#000" stroke="#a0a0a0" stroke-width="1"/>
<text x="13.5" y="771" font-size="9.5" fill="#f0f0f0" font-family="'Liberation Sans','DejaVu Sans',sans-serif" textLength="35" lengthAdjust="spacingAndGlyphs">Symbols</text>
<text x="53" y="771" font-size="9.5" fill="#f0f0f0" font-family="'Liberation Sans','DejaVu Sans',sans-serif" textLength="17" lengthAdjust="spacingAndGlyphs">-CG</text>
<text x="78" y="771" font-size="9.5" fill="#f0f0f0" font-family="'Liberation Sans','DejaVu Sans',sans-serif" textLength="14" lengthAdjust="spacingAndGlyphs">-IC</text>
<text x="98.5" y="771" font-size="9.5" fill="#f0f0f0" font-family="'Liberation Sans','DejaVu Sans',sans-serif" textLength="20" lengthAdjust="spacingAndGlyphs">+CG</text>
<text x="123.5" y="771" font-size="9.5" fill="#f0f0f0" font-family="'Liberation Sans','DejaVu Sans',sans-serif" textLength="17.5" lengthAdjust="spacingAndGlyphs">+IC</text>
<text x="153.5" y="771" font-size="9.5" fill="#f0f0f0" font-family="'Liberation Sans','DejaVu Sans',sans-serif" textLength="89.5" lengthAdjust="spacingAndGlyphs">Strike age color codes</text>
<text x="13.5" y="783.5" font-size="9.5" fill="#f0f0f0" font-family="'Liberation Sans','DejaVu Sans',sans-serif" textLength="28" lengthAdjust="spacingAndGlyphs">Recent</text>
<text x="13.5" y="796.5" font-size="9.5" fill="#f0f0f0" font-family="'Liberation Sans','DejaVu Sans',sans-serif" textLength="14" lengthAdjust="spacingAndGlyphs">Old</text>
<circle cx="60.5" cy="780.5" r="4" fill="none" stroke="#00e8ff" stroke-width="1.15"/><path d="M58.1 780.5H62.9" stroke="#00e8ff" stroke-width="1" fill="none"/>
<path d="M82.0 780.5H89.0" stroke="#00e8ff" stroke-width="1" fill="none"/>
<circle cx="110.5" cy="780.5" r="4" fill="none" stroke="#00e8ff" stroke-width="1.15"/><path d="M108.1 780.5H112.9" stroke="#00e8ff" stroke-width="1" fill="none"/><path d="M110.5 778.1V782.9" stroke="#00e8ff" stroke-width="1" fill="none"/>
<path d="M132.0 780.5H139.0" stroke="#00e8ff" stroke-width="1" fill="none"/><path d="M135.5 777.0V784.0" stroke="#00e8ff" stroke-width="1" fill="none"/>
<circle cx="60.5" cy="793.5" r="4" fill="none" stroke="#ffff00" stroke-width="1.15"/><path d="M58.1 793.5H62.9" stroke="#ffff00" stroke-width="1" fill="none"/>
<path d="M82.0 793.5H89.0" stroke="#ffff00" stroke-width="1" fill="none"/>
<circle cx="110.5" cy="793.5" r="4" fill="none" stroke="#ffff00" stroke-width="1.15"/><path d="M108.1 793.5H112.9" stroke="#ffff00" stroke-width="1" fill="none"/><path d="M110.5 791.1V795.9" stroke="#ffff00" stroke-width="1" fill="none"/>
<path d="M132.0 793.5H139.0" stroke="#ffff00" stroke-width="1" fill="none"/><path d="M135.5 790.0V797.0" stroke="#ffff00" stroke-width="1" fill="none"/>
<text x="153.5" y="783.5" font-size="9.5" fill="#ffd200" font-family="'Liberation Sans','DejaVu Sans',sans-serif" textLength="16" lengthAdjust="spacingAndGlyphs">15+</text>
<text x="188.5" y="783.5" font-size="9.5" fill="#ffaa00" font-family="'Liberation Sans','DejaVu Sans',sans-serif" textLength="16" lengthAdjust="spacingAndGlyphs">30+</text>
<text x="223.5" y="783.5" font-size="9.5" fill="#ff9000" font-family="'Liberation Sans','DejaVu Sans',sans-serif" textLength="16" lengthAdjust="spacingAndGlyphs">45+</text>
<text x="153.5" y="796.5" font-size="9.5" fill="#f07800" font-family="'Liberation Sans','DejaVu Sans',sans-serif" textLength="16" lengthAdjust="spacingAndGlyphs">60+</text>
<text x="188.5" y="796.5" font-size="9.5" fill="#f05a00" font-family="'Liberation Sans','DejaVu Sans',sans-serif" textLength="16" lengthAdjust="spacingAndGlyphs">75+</text>
<text x="223.5" y="796.5" font-size="9.5" fill="#f02800" font-family="'Liberation Sans','DejaVu Sans',sans-serif" textLength="16" lengthAdjust="spacingAndGlyphs">90+</text>
<rect x="685" y="792" width="122" height="15" fill="#000"/>
<text x="689" y="802.5" font-size="9.5" fill="#f4f4f4" font-family="'Liberation Sans','DejaVu Sans',sans-serif" textLength="113" lengthAdjust="spacingAndGlyphs">©2005 Astrogenic Systems</text>
</g>
<rect x="812.5" y="8.5" width="319" height="319" rx="4" ry="4" fill="#000" stroke="#c0c0c0" stroke-width="1"/>
<rect x="812.5" y="333.5" width="319" height="114" rx="4" ry="4" fill="#000" stroke="#c0c0c0" stroke-width="1"/>
<rect x="812.5" y="453.5" width="319" height="349" rx="4" ry="4" fill="#000" stroke="#c0c0c0" stroke-width="1"/>
<rect x="819.5" y="16.5" width="57" height="17" fill="#5a0000" stroke="#b4b4b4" stroke-width="1"/>
<text x="848" y="29.5" font-size="12" fill="#d0d0d0" font-weight="bold" text-anchor="middle" font-family="'DejaVu Serif','Liberation Serif',serif" textLength="48.5" lengthAdjust="spacingAndGlyphs">STRIKE</text>
<rect x="883.5" y="16.5" width="57" height="17" fill="#333" stroke="#b4b4b4" stroke-width="1"/>
<text x="912" y="29.5" font-size="12" fill="#bdbdbd" font-weight="bold" text-anchor="middle" font-family="'DejaVu Serif','Liberation Serif',serif" textLength="43" lengthAdjust="spacingAndGlyphs">NOISE</text>
<rect x="994.5" y="16.5" width="127" height="17" fill="#333" stroke="#b4b4b4" stroke-width="1"/>
<text x="998.5" y="29.5" font-size="12" fill="#fff" font-weight="bold" font-family="'DejaVu Sans','Liberation Sans',sans-serif" textLength="62" lengthAdjust="spacingAndGlyphs">Bng 163°</text>
<text x="1075.5" y="29.5" font-size="12" fill="#00e600" font-weight="bold" font-family="'DejaVu Sans','Liberation Sans',sans-serif" textLength="42" lengthAdjust="spacingAndGlyphs">375mi</text>
<rect x="821.5" y="64.5" width="81" height="15" fill="#555" stroke="#b4b4b4" stroke-width="1"/>
<text x="862" y="76" font-size="11" fill="#f4f4f4" text-anchor="middle" font-family="'DejaVu Sans','Liberation Sans',sans-serif" textLength="65.5" lengthAdjust="spacingAndGlyphs">Strikes/min</text>
<rect x="931.5" y="64.5" width="81" height="15" fill="#555" stroke="#b4b4b4" stroke-width="1"/>
<text x="972" y="76" font-size="11" fill="#f4f4f4" text-anchor="middle" font-family="'DejaVu Sans','Liberation Sans',sans-serif" textLength="55.5" lengthAdjust="spacingAndGlyphs">Close/min</text>
<rect x="1041.5" y="64.5" width="81" height="15" fill="#555" stroke="#b4b4b4" stroke-width="1"/>
<text x="1082" y="76" font-size="11" fill="#f4f4f4" text-anchor="middle" font-family="'DejaVu Sans','Liberation Sans',sans-serif" textLength="62.5" lengthAdjust="spacingAndGlyphs">Noises/min</text>
<text x="902.5" y="111.5" font-size="28" fill="#fff" font-weight="bold" text-anchor="end" font-family="'DejaVu Sans','Liberation Sans',sans-serif">4</text>
<text x="1012.5" y="111.5" font-size="28" fill="#fff" font-weight="bold" text-anchor="end" font-family="'DejaVu Sans','Liberation Sans',sans-serif">0</text>
<text x="1122.5" y="111.5" font-size="28" fill="#bdbdbd" font-weight="bold" text-anchor="end" font-family="'DejaVu Sans','Liberation Sans',sans-serif">0</text>
<text x="827" y="143" font-size="12" fill="#fff" font-family="'DejaVu Sans','Liberation Sans',sans-serif" textLength="76" lengthAdjust="spacingAndGlyphs">Total Strikes</text>
<text x="903" y="161" font-size="12" fill="#fff" text-anchor="end" font-family="'DejaVu Sans','Liberation Sans',sans-serif" textLength="23" lengthAdjust="spacingAndGlyphs">946</text>
<text x="1013" y="143" font-size="12" fill="#fff" text-anchor="end" font-family="'DejaVu Sans','Liberation Sans',sans-serif" textLength="69" lengthAdjust="spacingAndGlyphs">Total Close</text>
<text x="1012.5" y="161" font-size="12" fill="#fff" text-anchor="end" font-family="'DejaVu Sans','Liberation Sans',sans-serif">0</text>
<text x="1122.5" y="143" font-size="12" fill="#c4c4c4" text-anchor="end" font-family="'DejaVu Sans','Liberation Sans',sans-serif" textLength="75" lengthAdjust="spacingAndGlyphs">Total Noises</text>
<text x="1122" y="161" font-size="12" fill="#fff" text-anchor="end" font-family="'DejaVu Sans','Liberation Sans',sans-serif" textLength="15" lengthAdjust="spacingAndGlyphs">37</text>
<text x="821" y="215" font-size="12" fill="#b8b8b8" font-family="'DejaVu Sans','Liberation Sans',sans-serif" textLength="164.5" lengthAdjust="spacingAndGlyphs">Lightning type distribution</text>
<rect x="821" y="217" width="303" height="1" fill="#9a9a9a"/>
<text x="821" y="236.0" font-size="12" fill="#fff" font-weight="bold" font-family="'DejaVu Sans','Liberation Sans',sans-serif" textLength="84" lengthAdjust="spacingAndGlyphs">Cloud-ground</text>
<text x="913" y="236.5" font-size="11" fill="#e0e0e0" font-family="'DejaVu Sans','Liberation Sans',sans-serif" textLength="8" lengthAdjust="spacingAndGlyphs">+</text>
<rect x="925.5" y="227.5" width="50" height="10" rx="1.5" fill="#000" stroke="#b0b0b0" stroke-width="1"/>
<rect x="926" y="228" width="27" height="9" fill="#ff0000"/>
<text x="979.5" y="236.0" font-size="12" fill="#fff" font-weight="bold" font-family="'DejaVu Sans','Liberation Sans',sans-serif" textLength="29" lengthAdjust="spacingAndGlyphs">55%</text>
<rect x="1016" y="231" width="7" height="2" fill="#d8d8d8"/>
<rect x="1028.5" y="227.5" width="50" height="10" rx="1.5" fill="#000" stroke="#b0b0b0" stroke-width="1"/>
<rect x="1029" y="228" width="19.5" height="9" fill="#87cefa"/>
<text x="1082.5" y="236.0" font-size="12" fill="#fff" font-weight="bold" font-family="'DejaVu Sans','Liberation Sans',sans-serif" textLength="29" lengthAdjust="spacingAndGlyphs">38%</text>
<text x="821" y="260.0" font-size="12" fill="#bdbdbd" font-weight="bold" font-family="'DejaVu Sans','Liberation Sans',sans-serif" textLength="37.5" lengthAdjust="spacingAndGlyphs">Count</text>
<text x="925.5" y="260.0" font-size="12" fill="#fff" font-weight="bold" font-family="'DejaVu Sans','Liberation Sans',sans-serif" textLength="23.5" lengthAdjust="spacingAndGlyphs">524</text>
<text x="1028" y="260.0" font-size="12" fill="#fff" font-weight="bold" font-family="'DejaVu Sans','Liberation Sans',sans-serif" textLength="23.5" lengthAdjust="spacingAndGlyphs">363</text>
<text x="821" y="290.0" font-size="12" fill="#fff" font-weight="bold" font-family="'DejaVu Sans','Liberation Sans',sans-serif" textLength="63.5" lengthAdjust="spacingAndGlyphs">Intracloud</text>
<text x="913" y="290.5" font-size="11" fill="#e0e0e0" font-family="'DejaVu Sans','Liberation Sans',sans-serif" textLength="8" lengthAdjust="spacingAndGlyphs">+</text>
<rect x="925.5" y="281.5" width="50" height="10" rx="1.5" fill="#000" stroke="#b0b0b0" stroke-width="1"/>
<rect x="926" y="282" width="1.5" height="9" fill="#ff69b4"/>
<text x="979.5" y="290.0" font-size="12" fill="#fff" font-weight="bold" font-family="'DejaVu Sans','Liberation Sans',sans-serif" textLength="21" lengthAdjust="spacingAndGlyphs">3%</text>
<rect x="1016" y="285" width="7" height="2" fill="#d8d8d8"/>
<rect x="1028.5" y="281.5" width="50" height="10" rx="1.5" fill="#000" stroke="#b0b0b0" stroke-width="1"/>
<rect x="1029" y="282" width="2.5" height="9" fill="#00e600"/>
<text x="1082.5" y="290.0" font-size="12" fill="#fff" font-weight="bold" font-family="'DejaVu Sans','Liberation Sans',sans-serif" textLength="21" lengthAdjust="spacingAndGlyphs">3%</text>
<text x="821" y="314.0" font-size="12" fill="#bdbdbd" font-weight="bold" font-family="'DejaVu Sans','Liberation Sans',sans-serif" textLength="37.5" lengthAdjust="spacingAndGlyphs">Count</text>
<text x="925.5" y="314.0" font-size="12" fill="#fff" font-weight="bold" font-family="'DejaVu Sans','Liberation Sans',sans-serif" textLength="15.5" lengthAdjust="spacingAndGlyphs">27</text>
<text x="1028" y="314.0" font-size="12" fill="#fff" font-weight="bold" font-family="'DejaVu Sans','Liberation Sans',sans-serif" textLength="16" lengthAdjust="spacingAndGlyphs">32</text>
<text x="821.5" y="352.5" font-size="16" fill="#00f000" font-weight="bold" font-family="'DejaVu Sans','Liberation Sans',sans-serif" textLength="201.5" lengthAdjust="spacingAndGlyphs">3/17/2026 4:30:18 AM</text>
<rect x="821" y="358" width="302" height="1" fill="#9a9a9a"/>
<text x="821.5" y="387.5" font-size="12" fill="#fff" font-family="'DejaVu Sans','Liberation Sans',sans-serif" textLength="48.3" lengthAdjust="spacingAndGlyphs">Squelch</text>
<text x="909.5" y="387.5" font-size="12" fill="#fff" font-family="'DejaVu Sans','Liberation Sans',sans-serif">0</text>
<text x="981.5" y="387.5" font-size="12" fill="#fff" font-family="'DejaVu Sans','Liberation Sans',sans-serif" textLength="43" lengthAdjust="spacingAndGlyphs">Upload</text>
<text x="1061.5" y="387.5" font-size="12" fill="#c4c4c4" font-family="'DejaVu Sans','Liberation Sans',sans-serif" textLength="53.5" lengthAdjust="spacingAndGlyphs">Disabled</text>
<text x="821.5" y="407.5" font-size="12" fill="#fff" font-family="'DejaVu Sans','Liberation Sans',sans-serif" textLength="72.5" lengthAdjust="spacingAndGlyphs">Persistence</text>
<text x="909.5" y="407.5" font-size="12" fill="#fff" font-family="'DejaVu Sans','Liberation Sans',sans-serif" textLength="41" lengthAdjust="spacingAndGlyphs">90 min</text>
<text x="981.5" y="407.5" font-size="12" fill="#fff" font-family="'DejaVu Sans','Liberation Sans',sans-serif" textLength="50.5" lengthAdjust="spacingAndGlyphs">Capture</text>
<text x="1061.5" y="407.5" font-size="12" fill="#00e600" font-family="'DejaVu Sans','Liberation Sans',sans-serif" textLength="36.5" lengthAdjust="spacingAndGlyphs">Active</text>
<text x="821.5" y="427.5" font-size="12" fill="#fff" font-family="'DejaVu Sans','Liberation Sans',sans-serif" textLength="39.5" lengthAdjust="spacingAndGlyphs">Range</text>
<text x="909.5" y="427.5" font-size="12" fill="#fff" font-family="'DejaVu Sans','Liberation Sans',sans-serif" textLength="41" lengthAdjust="spacingAndGlyphs">313 mi</text>
<text x="981.5" y="427.5" font-size="12" fill="#fff" font-family="'DejaVu Sans','Liberation Sans',sans-serif" textLength="52.5" lengthAdjust="spacingAndGlyphs">Receiver</text>
<text x="1061.5" y="427.5" font-size="12" fill="#00e600" font-family="'DejaVu Sans','Liberation Sans',sans-serif" textLength="50" lengthAdjust="spacingAndGlyphs">Enabled</text>
<text x="821.5" y="474.5" font-size="12" fill="#bdbdbd" font-family="'DejaVu Sans','Liberation Sans',sans-serif" textLength="43.5" lengthAdjust="spacingAndGlyphs">Uptime</text>
<text x="909.5" y="474.5" font-size="12" fill="#fff" font-family="'DejaVu Sans','Liberation Sans',sans-serif" textLength="51.5" lengthAdjust="spacingAndGlyphs">1528:15</text>
<text x="981.5" y="474.5" font-size="12" fill="#bdbdbd" font-family="'DejaVu Sans','Liberation Sans',sans-serif" textLength="61.5" lengthAdjust="spacingAndGlyphs">Peak time</text>
<text x="1061.5" y="474.5" font-size="12" fill="#bdbdbd" font-family="'DejaVu Sans','Liberation Sans',sans-serif" textLength="23.5" lengthAdjust="spacingAndGlyphs">Plot</text>
<text x="821.5" y="497.5" font-size="12" fill="#bdbdbd" font-family="'DejaVu Sans','Liberation Sans',sans-serif" textLength="60" lengthAdjust="spacingAndGlyphs">Peak rate</text>
<text x="909.5" y="497.5" font-size="12" fill="#fff" font-family="'DejaVu Sans','Liberation Sans',sans-serif" textLength="42" lengthAdjust="spacingAndGlyphs">13/min</text>
<text x="981.5" y="497.5" font-size="12" fill="#fff" font-family="'DejaVu Sans','Liberation Sans',sans-serif" textLength="50.5" lengthAdjust="spacingAndGlyphs">4:16 AM</text>
<text x="1061.5" y="497.5" font-size="12" fill="#fff" font-family="'DejaVu Sans','Liberation Sans',sans-serif" textLength="35.5" lengthAdjust="spacingAndGlyphs">Strike</text>
<text x="822.5" y="527.5" font-size="12" fill="#bdbdbd" font-family="'DejaVu Sans','Liberation Sans',sans-serif" textLength="76" lengthAdjust="spacingAndGlyphs">Trend graph</text>
<text x="908.5" y="527.5" font-size="12" fill="#fff" font-family="'DejaVu Sans','Liberation Sans',sans-serif" textLength="41" lengthAdjust="spacingAndGlyphs">60 min</text>
<polyline points="822.0,746.6 823.7,752.3 825.4,754.6 826.5,768.1 828.2,768.1 829.3,762.5 831.0,758.0 832.7,750.0 833.9,746.1 835.6,751.2 837.8,754.6 839.0,761.3 840.1,761.3 841.8,753.4 842.9,753.4 845.2,760.2 847.4,768.1 849.1,758.0 850.3,746.1 852.0,746.6 853.1,751.2 854.2,762.5 855.9,768.1 857.6,773.8 859.3,761.3 860.5,754.6 862.2,753.4 863.9,761.3 865.0,768.1 866.7,762.5 867.8,761.3 870.1,761.3 871.2,768.1 873.5,769.3 875.8,776.6 882.6,776.6 884.3,769.3 885.4,758.0 887.1,753.4 888.8,753.4 889.9,758.0 891.6,746.6 893.9,746.6 895.6,756.8 897.3,776.6 907.5,776.6 908.0,750.0 909.1,746.6 910.3,742.1 912.0,733.0 912.5,730.8 913.7,745.5 914.8,753.4 916.5,747.8 918.2,753.4 919.9,761.3 923.3,761.3 925.0,753.4 927.3,753.4 929.0,760.2 930.7,753.4 932.3,756.8 933.5,769.3 934.6,776.6 936.9,776.6 938.0,769.3 939.7,758.0 941.4,753.4 942.5,761.3 944.2,753.4 945.4,769.3 952.2,769.3 954.4,768.1 956.7,762.5 958.4,761.3 960.1,756.8 961.2,761.3 962.4,748.9 963.5,746.6 964.6,761.3 966.3,769.3 968.0,776.6 973.1,776.6 974.8,746.6 976.0,753.4 977.1,761.3 978.8,762.5 980.5,761.3 982.7,768.1 985.0,776.6 987.3,769.3 989.0,762.5 991.8,760.2 994.1,753.4 997.5,753.4 998.0,758.0 998.0,753.4 999.7,761.3 1001.4,761.3 1002.5,746.6 1004.8,746.6 1006.5,753.4 1008.2,753.4 1009.9,758.0 1012.2,761.3 1013.9,751.2 1015.6,750.0 1016.7,761.3 1020.1,776.6 1021.2,769.3 1024.0,748.9 1025.2,746.1 1027.4,746.1 1029.1,755.7 1031.4,769.3 1041.0,769.3 1048.4,768.1 1049.5,761.3 1052.4,754.0 1054.6,760.2 1056.9,768.1 1060.3,758.0 1062.6,763.6 1064.8,776.6 1067.1,769.3 1076.1,769.3 1077.3,776.6 1079.0,764.7 1080.7,761.3 1082.4,764.7 1084.1,776.6" fill="none" stroke="#ee0000" stroke-width="1" stroke-linejoin="miter" shape-rendering="crispEdges"/>
<polyline points="822.0,776.6 822.3,761.9 823.7,773.8 825.4,760.8 827.1,768.1 829.3,776.6 831.0,776.6 832.7,769.3 835.0,769.3 836.7,776.6 837.8,769.3 841.2,769.3 842.9,776.6 846.3,776.6 848.0,764.7 849.7,746.6 850.8,738.1 852.0,745.5 853.7,758.0 855.4,773.8 857.1,776.6 861.0,769.3 864.4,762.5 866.7,753.4 868.4,738.1 870.1,744.4 871.8,756.8 873.5,762.5 875.8,774.9 877.5,776.6 880.3,776.6 883.1,762.5 884.8,768.1 888.8,769.3 890.5,762.5 891.6,762.5 893.3,769.3 896.1,776.6 908.0,776.6 908.0,776.6 910.3,773.8 912.0,761.3 914.2,761.3 915.9,769.3 917.1,776.6 918.8,769.3 921.6,769.3 923.9,776.6 925.6,769.3 927.3,769.3 929.5,776.6 936.3,773.8 938.6,762.5 940.3,761.3 942.0,762.5 945.4,761.3 947.6,758.0 949.3,746.6 950.5,738.1 952.2,745.5 953.9,758.0 955.6,764.7 957.8,762.5 959.5,769.3 960.7,776.6 962.9,769.3 964.1,761.3 965.8,769.3 967.5,762.5 969.2,776.6 974.3,776.6 976.0,768.1 977.6,762.5 979.9,753.4 981.6,735.3 982.7,731.9 984.4,738.7 986.1,758.0 987.8,776.6 989.5,764.7 991.8,761.3 993.5,769.3 995.2,776.6 997.5,771.5 998.0,769.3 998.0,769.3 1001.4,768.1 1003.1,762.5 1004.8,753.4 1007.1,746.6 1008.2,768.1 1009.9,762.5 1011.0,769.3 1012.7,769.3 1013.9,746.6 1018.4,738.7 1020.1,746.6 1021.8,748.9 1024.0,738.7 1025.7,722.8 1027.4,714.3 1028.6,729.6 1030.8,746.6 1032.0,776.6 1033.1,769.3 1036.5,769.3 1037.6,776.6 1038.8,761.3 1042.2,761.3 1043.3,767.0 1045.6,761.3 1047.8,767.0 1049.5,776.6 1051.2,776.6 1052.4,769.3 1055.8,769.3 1057.5,776.6 1059.7,769.3 1061.4,758.0 1063.1,753.4 1064.8,753.4 1067.1,761.3 1072.7,761.3 1075.0,753.4 1077.3,758.0 1079.5,760.2 1082.4,746.6 1085.2,738.7 1086.9,739.8 1088.0,758.0" fill="none" stroke="#87cefa" stroke-width="1" stroke-linejoin="miter" shape-rendering="crispEdges"/>
<polyline points="835.0,776.6 837.3,769.3 840.7,769.3 842.3,776.6" fill="none" stroke="#ff69b4" stroke-width="1" stroke-linejoin="miter" shape-rendering="crispEdges"/>
<polyline points="855.4,773.8 856.5,769.3 859.3,769.3 861.0,776.6" fill="none" stroke="#ff69b4" stroke-width="1" stroke-linejoin="miter" shape-rendering="crispEdges"/>
<polyline points="923.9,776.6 926.7,769.3 929.0,761.3 930.7,769.3 933.5,776.6" fill="none" stroke="#ff69b4" stroke-width="1" stroke-linejoin="miter" shape-rendering="crispEdges"/>
<polyline points="952.7,769.3 954.4,769.3 956.1,776.6" fill="none" stroke="#ff69b4" stroke-width="1" stroke-linejoin="miter" shape-rendering="crispEdges"/>
<polyline points="963.5,776.6 965.8,769.3 968.0,769.3 969.7,776.6" fill="none" stroke="#ff69b4" stroke-width="1" stroke-linejoin="miter" shape-rendering="crispEdges"/>
<polyline points="1069.3,776.6 1071.6,769.3 1072.7,776.6 1074.4,769.3 1076.1,776.6" fill="none" stroke="#ff69b4" stroke-width="1" stroke-linejoin="miter" shape-rendering="crispEdges"/>
<polyline points="1084.6,776.6 1086.3,769.3 1088.0,764.7" fill="none" stroke="#ff69b4" stroke-width="1" stroke-linejoin="miter" shape-rendering="crispEdges"/>
<polyline points="945.4,776.6 947.1,769.3 950.5,769.3 951.6,776.6" fill="none" stroke="#00e600" stroke-width="1" stroke-linejoin="miter" shape-rendering="crispEdges"/>
<polyline points="1040.5,776.6 1042.7,769.3 1046.1,769.3 1048.4,776.6" fill="none" stroke="#00e600" stroke-width="1" stroke-linejoin="miter" shape-rendering="crispEdges"/>
<polyline points="1068.8,776.6 1070.5,769.3 1073.3,769.3 1076.1,776.6" fill="none" stroke="#00e600" stroke-width="1" stroke-linejoin="miter" shape-rendering="crispEdges"/>
<polyline points="1077.8,776.6 1079.5,769.3 1082.4,769.3 1084.6,776.6" fill="none" stroke="#00e600" stroke-width="1" stroke-linejoin="miter" shape-rendering="crispEdges"/>
<polyline points="822.0,739.3 823.1,746.6 825.4,738.1 826.5,753.4 828.2,761.3 831.0,761.3 832.7,738.1 834.4,738.1 835.6,746.1 841.2,746.1 842.3,748.9 844.0,753.4 846.3,769.3 848.0,756.8 849.1,722.3 850.6,705.9 852.0,712.7 853.3,727.4 854.2,746.6 855.9,762.5 857.6,761.3 860.5,747.8 862.2,746.1 863.9,748.9 865.6,756.8 867.3,729.6 868.4,722.3 870.1,729.1 871.2,744.4 873.5,758.0 876.9,776.6 879.7,762.5 883.1,760.8 886.5,746.1 888.8,746.1 889.9,736.4 891.4,730.2 892.2,738.7 894.4,738.7 895.6,745.5 897.3,760.8 899.5,762.5 901.2,767.0 902.4,761.3 904.1,769.3 906.9,776.6 908.0,776.6 909.1,762.5 910.3,742.1 911.4,722.3 912.5,714.3 913.4,722.3 914.2,733.0 915.4,746.1 918.2,746.1 919.9,748.9 921.0,753.4 923.3,753.4 925.0,745.5 926.7,738.1 928.4,743.2 929.5,746.1 932.3,746.1 933.5,758.0 934.6,769.3 935.7,776.6 936.9,773.8 938.0,762.5 939.7,748.9 941.4,738.1 942.0,746.6 943.1,742.1 944.2,738.1 944.8,746.6 945.9,748.9 947.1,746.6 948.8,742.1 949.9,735.3 950.5,730.2 954.4,730.2 955.0,737.6 956.7,748.9 958.4,753.4 960.1,760.2 961.8,748.9 963.5,738.1 964.6,743.2 966.3,746.6 968.0,753.4 969.7,767.0 970.9,758.0 972.0,753.4 973.7,743.2 974.8,738.1 976.0,743.2 977.1,738.1 978.2,746.6 979.3,742.1 980.5,730.8 981.6,722.3 983.7,722.3 984.1,735.3 985.0,746.6 986.7,758.0 987.3,762.5 989.0,753.4 990.7,746.1 992.4,746.1 993.5,751.2 995.2,746.1 996.3,751.2 998.0,746.1 998.0,746.6 999.1,753.4 1000.8,753.4 1002.5,735.3 1004.2,728.5 1005.4,722.3 1007.6,722.3 1008.8,737.6 1009.3,743.2 1009.9,738.1 1010.7,746.6 1012.2,753.4 1013.3,729.6 1014.4,714.3 1015.6,727.4 1016.7,730.2 1018.4,730.2 1020.1,746.6 1021.2,751.2 1022.3,728.5 1024.0,722.8 1025.2,696.8 1027.2,691.1 1028.6,699.1 1029.1,711.5 1030.8,719.4 1031.4,746.6 1032.5,768.1 1033.1,761.3 1037.1,761.3 1037.6,769.3 1038.8,756.8 1039.9,753.4 1041.6,748.9 1042.7,746.1 1044.4,742.1 1045.6,738.1 1046.7,739.8 1047.8,745.5 1049.0,758.0 1049.5,761.3 1051.2,761.3 1052.4,746.1 1053.5,748.9 1054.6,753.4 1056.3,760.2 1057.5,768.1 1059.2,758.0 1060.9,746.6 1063.1,746.6 1064.3,753.4 1068.8,753.4 1070.5,746.6 1075.6,746.6 1076.7,758.0 1078.4,742.1 1079.5,735.3 1081.2,730.2 1082.4,735.3 1083.5,746.6 1084.6,734.2 1085.4,722.3 1086.9,734.2 1088.0,737.6" fill="none" stroke="#ffffff" stroke-width="1" stroke-linejoin="miter" shape-rendering="crispEdges"/>
<rect x="822" y="777" width="267" height="1" fill="#c8c8c8"/>
<rect x="1088" y="542" width="1" height="236" fill="#c8c8c8"/>
<rect x="1084" y="542" width="5" height="1" fill="#c8c8c8"/>
<rect x="1084" y="620" width="5" height="1" fill="#c8c8c8"/>
<rect x="1084" y="699" width="5" height="1" fill="#c8c8c8"/>
<rect x="1086" y="581" width="3" height="1" fill="#c8c8c8"/>
<rect x="1086" y="660" width="3" height="1" fill="#c8c8c8"/>
<rect x="1086" y="738" width="3" height="1" fill="#c8c8c8"/>
<rect x="822" y="777" width="1" height="3" fill="#c8c8c8"/>
<rect x="866" y="777" width="1" height="3" fill="#c8c8c8"/>
<rect x="911" y="777" width="1" height="3" fill="#c8c8c8"/>
<rect x="955" y="777" width="1" height="3" fill="#c8c8c8"/>
<rect x="1000" y="777" width="1" height="3" fill="#c8c8c8"/>
<rect x="1044" y="777" width="1" height="3" fill="#c8c8c8"/>
<rect x="1088" y="777" width="1" height="3" fill="#c8c8c8"/>
<text x="1092.5" y="546.5" font-size="11" fill="#c8c8c8" font-family="'DejaVu Sans','Liberation Sans',sans-serif" textLength="13" lengthAdjust="spacingAndGlyphs">30</text>
<text x="1092.5" y="625" font-size="11" fill="#c8c8c8" font-family="'DejaVu Sans','Liberation Sans',sans-serif" textLength="13" lengthAdjust="spacingAndGlyphs">20</text>
<text x="1092.5" y="703.5" font-size="11" fill="#c8c8c8" font-family="'DejaVu Sans','Liberation Sans',sans-serif" textLength="13" lengthAdjust="spacingAndGlyphs">10</text>
<text x="820.5" y="792" font-size="11" fill="#c8c8c8" font-family="'DejaVu Sans','Liberation Sans',sans-serif" textLength="13" lengthAdjust="spacingAndGlyphs">60</text>
<text x="864.5" y="792" font-size="11" fill="#c8c8c8" font-family="'DejaVu Sans','Liberation Sans',sans-serif" textLength="13" lengthAdjust="spacingAndGlyphs">50</text>
<text x="909" y="792" font-size="11" fill="#c8c8c8" font-family="'DejaVu Sans','Liberation Sans',sans-serif" textLength="13" lengthAdjust="spacingAndGlyphs">40</text>
<text x="953" y="792" font-size="11" fill="#c8c8c8" font-family="'DejaVu Sans','Liberation Sans',sans-serif" textLength="13" lengthAdjust="spacingAndGlyphs">30</text>
<text x="998" y="792" font-size="11" fill="#c8c8c8" font-family="'DejaVu Sans','Liberation Sans',sans-serif" textLength="13" lengthAdjust="spacingAndGlyphs">20</text>
<text x="1042.5" y="792" font-size="11" fill="#c8c8c8" font-family="'DejaVu Sans','Liberation Sans',sans-serif" textLength="13" lengthAdjust="spacingAndGlyphs">10</text>
<text x="1088" y="792" font-size="11" fill="#c8c8c8" font-family="'DejaVu Sans','Liberation Sans',sans-serif">0</text>
<text x="1101" y="792" font-size="11" fill="#c8c8c8" font-family="'DejaVu Sans','Liberation Sans',sans-serif" textLength="18" lengthAdjust="spacingAndGlyphs">min</text>
</svg></body></html>
